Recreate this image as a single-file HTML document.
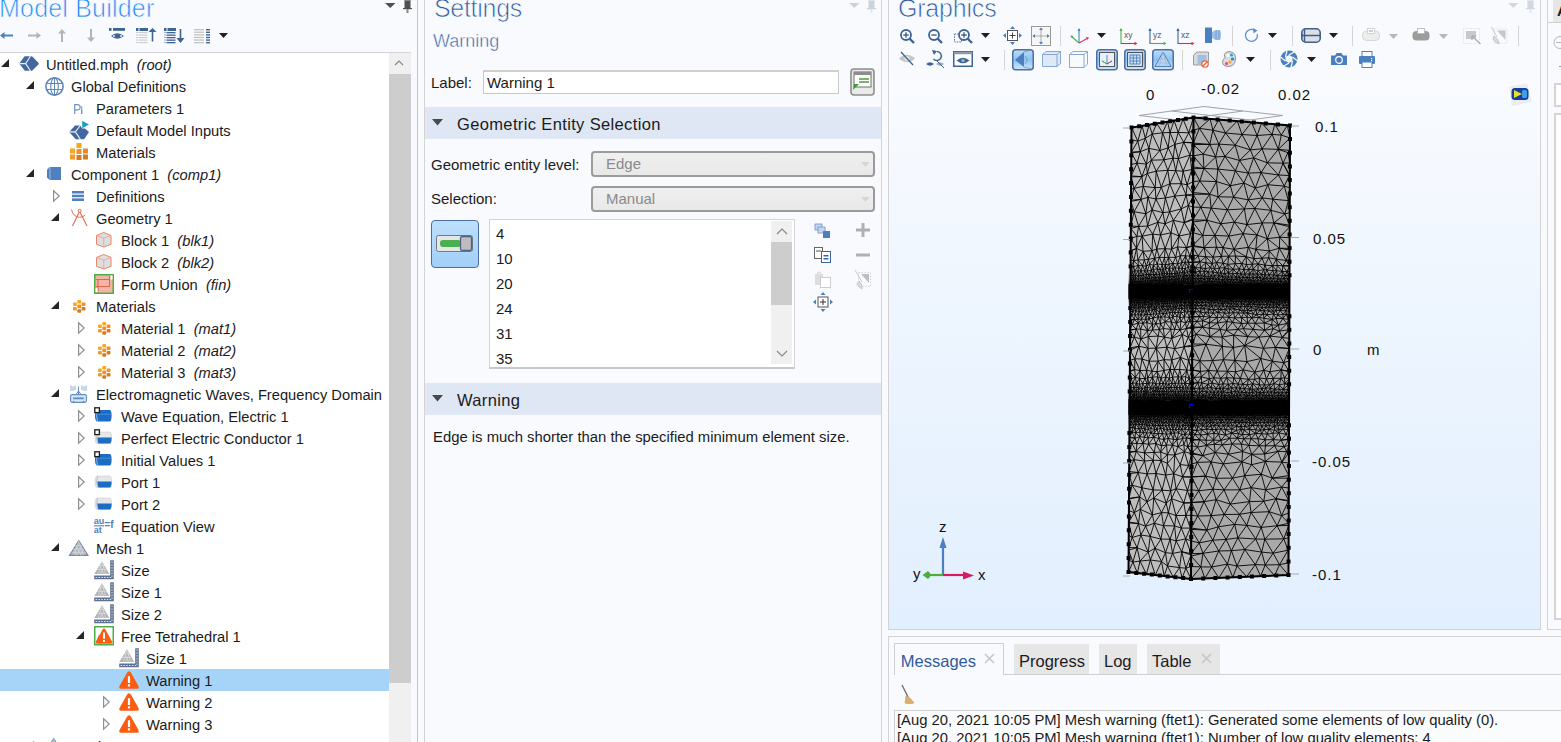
<!DOCTYPE html><html><head><meta charset="utf-8"><style>
*{box-sizing:border-box}
html,body{margin:0;padding:0;width:1561px;height:742px;overflow:hidden;background:#f9fafe;font-family:"Liberation Sans", sans-serif;color:#1b1b1b}
.a{position:absolute}
.ic{position:absolute;overflow:visible}
.t{position:absolute;white-space:nowrap;font-size:15px;line-height:18px}
.it{font-style:italic}
</style></head><body><div class="a" style="left:0;top:0;width:418px;height:742px;background:#f9fafe"></div>
<div class="t" style="left:-1px;top:-5.8px;font-size:25px;line-height:28px;color:#1e8cf5;letter-spacing:0.2px;-webkit-text-stroke:0.7px #f9fafe">Model Builder</div>
<svg class="ic" style="left:0px;top:32px;width:13px;height:7px" viewBox="0 0 13 7"><path d="M0 3.5 L4.5 0 V2.6 H13 V4.4 H4.5 V7 Z" fill="#4a80c0"/></svg><svg class="ic" style="left:28px;top:32px;width:13px;height:7px" viewBox="0 0 13 7"><path d="M13 3.5 L8.5 0 V2.6 H0 V4.4 H8.5 V7 Z" fill="#b4b4b4"/></svg><svg class="ic" style="left:58px;top:29px;width:8px;height:13px" viewBox="0 0 8 13"><path d="M4 0 L8 4.5 H5 V13 H3 V4.5 H0 Z" fill="#b4b4b4"/></svg><svg class="ic" style="left:87px;top:29px;width:8px;height:13px" viewBox="0 0 8 13"><path d="M4 13 L8 8.5 H5 V0 H3 V8.5 H0 Z" fill="#b4b4b4"/></svg><svg class="ic" style="left:109px;top:28px;width:16px;height:12px" viewBox="0 0 16 12"><rect x="0" y="0" width="2.5" height="2.8" fill="#3e6494"/><rect x="4" y="0" width="12" height="2.8" fill="#3e6494"/><path d="M2 8 Q8 2.5 15 8 Q8 13.5 2 8 Z" fill="#3e6494"/><circle cx="5" cy="8" r="0.9" fill="#fff"/><circle cx="12" cy="8" r="0.9" fill="#fff"/></svg><svg class="ic" style="left:136px;top:28px;width:21px;height:15px" viewBox="0 0 21 15"><rect x="0" y="0" width="2.5" height="3" fill="#3e6494"/><rect x="3.5" y="0" width="8.5" height="3" fill="#3e6494"/><rect x="0.5" y="4.0" width="1" height="1" fill="#999"/><rect x="2.5" y="4.0" width="9" height="1.2" fill="#cfcfcf"/><rect x="0.5" y="6.5" width="1" height="1" fill="#999"/><rect x="2.5" y="6.5" width="9" height="1.2" fill="#cfcfcf"/><rect x="0.5" y="9.0" width="1" height="1" fill="#999"/><rect x="2.5" y="9.0" width="9" height="1.2" fill="#cfcfcf"/><rect x="0.5" y="11.5" width="1" height="1" fill="#999"/><rect x="2.5" y="11.5" width="9" height="1.2" fill="#cfcfcf"/><rect x="0.5" y="14.0" width="1" height="1" fill="#999"/><rect x="2.5" y="14.0" width="9" height="1.2" fill="#cfcfcf"/><path d="M16.5 0 L20.5 4 H17.3 V13.5 H15.7 V4 H12.5 Z" fill="#3e6494"/></svg><svg class="ic" style="left:164px;top:28px;width:21px;height:15px" viewBox="0 0 21 15"><rect x="0" y="0" width="2.5" height="3" fill="#3e6494"/><rect x="3.5" y="0" width="8.5" height="3" fill="#3e6494"/><rect x="0.5" y="4.0" width="1" height="1" fill="#3e6494"/><rect x="2.5" y="4.0" width="9" height="1.3" fill="#3e6494"/><rect x="0.5" y="6.5" width="1" height="1" fill="#3e6494"/><rect x="2.5" y="6.5" width="9" height="1.3" fill="#3e6494"/><rect x="0.5" y="9.0" width="1" height="1" fill="#3e6494"/><rect x="2.5" y="9.0" width="9" height="1.3" fill="#3e6494"/><rect x="0.5" y="11.5" width="1" height="1" fill="#3e6494"/><rect x="2.5" y="11.5" width="9" height="1.3" fill="#3e6494"/><rect x="0.5" y="14.0" width="1" height="1" fill="#3e6494"/><rect x="2.5" y="14.0" width="9" height="1.3" fill="#3e6494"/><path d="M16.5 15 L20.5 10 H17.3 V1 H15.7 V10 H12.5 Z" fill="#3e6494"/></svg><svg class="ic" style="left:194px;top:29px;width:17px;height:15px" viewBox="0 0 17 15"><rect x="0" y="0.0" width="10" height="1.3" fill="#c4c4c4"/><rect x="12" y="0.0" width="4" height="1.4" fill="#3e6494"/><rect x="0" y="2.6" width="10" height="1.3" fill="#c4c4c4"/><rect x="12" y="2.6" width="4" height="1.4" fill="#3e6494"/><rect x="0" y="5.2" width="10" height="1.3" fill="#c4c4c4"/><rect x="12" y="5.2" width="4" height="1.4" fill="#3e6494"/><rect x="0" y="7.800000000000001" width="10" height="1.3" fill="#c4c4c4"/><rect x="12" y="7.800000000000001" width="4" height="1.4" fill="#3e6494"/><rect x="0" y="10.4" width="10" height="1.3" fill="#c4c4c4"/><rect x="12" y="10.4" width="4" height="1.4" fill="#3e6494"/><rect x="0" y="13.0" width="10" height="1.3" fill="#c4c4c4"/><rect x="12" y="13.0" width="4" height="1.4" fill="#3e6494"/></svg><svg class="ic" style="left:219px;top:33px;width:9px;height:5px" viewBox="0 0 9 5"><path d="M0 0 H9 L4.5 5 Z" fill="#1f1f1f"/></svg><svg class="ic" style="left:384.5px;top:3px;width:10.5px;height:5px" viewBox="0 0 10.5 5"><path d="M0 0 H10.5 L5.25 5 Z" fill="#505050"/></svg><svg class="ic" style="left:402.5px;top:0px;width:9px;height:13px" viewBox="0 0 9 13"><rect x="1.5" y="0" width="6" height="8.5" fill="#505050"/><rect x="1.5" y="0" width="6" height="1" fill="#8a8a8a"/><rect x="0" y="8" width="9" height="1.2" fill="#505050"/><rect x="3.5" y="9" width="2" height="4" fill="#8a8a8a"/></svg>
<div class="a" style="left:0;top:52px;width:411px;height:700px;background:#fff;border-top:1px solid #d6d6d6"></div>
<div class="a" style="left:389px;top:53px;width:22px;height:689px;background:#f0f0f0"></div>
<div class="a" style="left:389px;top:74px;width:22px;height:609px;background:#cdcdcd"></div>
<svg class="ic" style="left:393px;top:58px;width:12px;height:10px" viewBox="0 0 12 10"><path d="M2 7 L6 3 L10 7" fill="none" stroke="#888" stroke-width="1.2"/></svg>
<div class="a" style="left:417px;top:0;width:1px;height:742px;background:#9fcdf7"></div>
<svg class="ic" style="left:1px;top:59px;width:8px;height:8px" viewBox="0 0 8 8"><path d="M0 8 L8 0 L8 8 Z" fill="#262626"/></svg>
<svg class="ic" style="left:19px;top:55.8px;width:20px;height:15px" viewBox="0 0 20 15"><path d="M0.2 7.6 L5.6 0.3 Q6 0.2 6.5 0.2 L12.6 0.2 Q13.2 0.2 13.6 0.8 L19.6 7 Q19.9 7.6 19.6 8.2 L13.6 14.3 Q13.2 14.8 12.6 14.8 L6.5 14.8 Q6 14.8 5.6 14.5 Z" fill="#43679e"/><path d="M0.3 7.6 H6.6 Q9 4.5 11.6 -0.2 M6.6 7.6 Q9 10.8 11.6 15.2" fill="none" stroke="#eef2f8" stroke-width="1.1"/></svg>
<div class="t" style="left:46px;top:55.8px;font-size:14.7px">Untitled.mph&nbsp;&nbsp;<span class="it">(root)</span></div>
<svg class="ic" style="left:26px;top:81px;width:8px;height:8px" viewBox="0 0 8 8"><path d="M0 8 L8 0 L8 8 Z" fill="#262626"/></svg>
<svg class="ic" style="left:45px;top:76.5px;width:19px;height:19px" viewBox="0 0 19 19"><circle cx="9.5" cy="9.5" r="8.6" fill="#fff" stroke="#5f87ba" stroke-width="1.6"/><ellipse cx="9.5" cy="9.5" rx="3.8" ry="8.6" fill="none" stroke="#5f87ba" stroke-width="1.1"/><path d="M9.5 1 V18 M1.5 6.5 H17.5 M1.5 12.5 H17.5" stroke="#5f87ba" stroke-width="1.1"/></svg>
<div class="t" style="left:71px;top:77.8px;font-size:14.7px">Global Definitions</div>
<svg class="ic" style="left:74px;top:103.5px;width:9px;height:10px" viewBox="0 0 9 10"><path d="M0.7 10 V0.7 H3.6 Q6.2 0.7 6.2 3.2 Q6.2 5.8 3.6 5.8 H0.7" fill="none" stroke="#6f93c6" stroke-width="1.2"/><rect x="7" y="4.5" width="1.4" height="5.5" fill="#6f93c6"/><rect x="7" y="2.5" width="1.4" height="1.3" fill="#6f93c6"/></svg>
<div class="t" style="left:96px;top:99.8px;font-size:14.7px">Parameters 1</div>
<svg class="ic" style="left:69px;top:120px;width:20px;height:20px" viewBox="0 0 20 20"><path d="M0.2 11.9 L6 5.6 L11.2 5.6 L13.2 8.6 L16 8.6 L20 11.9 L15.1 19.3 L6.7 19.3 Z" fill="#43679e"/><path d="M0.3 11.9 H6.3 Q8.7 9 11.5 5 M6.3 11.9 Q8.7 15 11.5 19.6" fill="none" stroke="#eef2f8" stroke-width="1.1"/><path d="M13.2 0.8 L20 4.5 L13.2 8.2 Z" fill="#17a2c4"/></svg>
<div class="t" style="left:96px;top:121.8px;font-size:14.7px">Default Model Inputs</div>
<svg class="ic" style="left:70px;top:143px;width:18px;height:17px" viewBox="0 0 18 17"><rect x="6.5" y="0" width="5" height="5" fill="#f7a51a"/><rect x="0" y="5.5" width="5" height="5" fill="#f8a825"/><rect x="6.5" y="6" width="5" height="5" fill="#f19126"/><rect x="13" y="5.5" width="5" height="5" fill="#e98a23"/><rect x="0" y="11.5" width="5" height="5" fill="#f29a2a"/><rect x="6.5" y="12" width="5" height="5" fill="#d87a22"/><rect x="13" y="11.5" width="5" height="5" fill="#d27c25"/></svg>
<div class="t" style="left:96px;top:143.8px;font-size:14.7px">Materials</div>
<svg class="ic" style="left:26px;top:169px;width:8px;height:8px" viewBox="0 0 8 8"><path d="M0 8 L8 0 L8 8 Z" fill="#262626"/></svg>
<svg class="ic" style="left:47px;top:167px;width:14px;height:13px" viewBox="0 0 14 13"><path d="M0 2.5 L2.5 0 L14 0 L14 13 L2.5 13 L0 10.5 Z" fill="#4f80c0"/><path d="M3 0.3 V13" stroke="#a7c0e0" stroke-width="0.9"/><path d="M0 2.5 L3 0.3" stroke="#a7c0e0" stroke-width="0.6"/></svg>
<div class="t" style="left:71px;top:165.8px;font-size:14.7px">Component 1&nbsp;&nbsp;<span class="it">(comp1)</span></div>
<svg class="ic" style="left:52.5px;top:190px;width:7px;height:12px" viewBox="0 0 7 12"><path d="M0.6 0.8 L6.2 6 L0.6 11.2 Z" fill="none" stroke="#8f8f8f" stroke-width="1.2" stroke-linejoin="miter"/></svg>
<svg class="ic" style="left:72px;top:191px;width:12px;height:10px" viewBox="0 0 12 10"><rect x="0" y="0" width="12" height="2.5" fill="#4f80c0"/><rect x="0" y="3.7" width="12" height="2.5" fill="#4f80c0"/><rect x="0" y="7.4" width="12" height="2.6" fill="#4f80c0"/></svg>
<div class="t" style="left:96px;top:187.8px;font-size:14.7px">Definitions</div>
<svg class="ic" style="left:51px;top:213px;width:8px;height:8px" viewBox="0 0 8 8"><path d="M0 8 L8 0 L8 8 Z" fill="#262626"/></svg>
<svg class="ic" style="left:70.5px;top:209px;width:17px;height:17.5px" viewBox="0 0 17 17.5"><path d="M1.5 17 L8.6 2.2 L16 17" fill="none" stroke="#e4694d" stroke-width="1.1"/><circle cx="8.6" cy="1.8" r="1.5" fill="#fff" stroke="#e4694d" stroke-width="1"/><path d="M0.5 0.5 Q2 8 8.6 8.3 Q12.5 8.3 14 6" fill="none" stroke="#e4694d" stroke-width="1"/></svg>
<div class="t" style="left:96px;top:209.8px;font-size:14.7px">Geometry 1</div>
<svg class="ic" style="left:95.5px;top:232px;width:15.5px;height:15.5px" viewBox="0 0 15.5 15.5"><path d="M7.75 0.5 L15 3.4 L15 12.3 L7.75 15 L0.5 12.3 L0.5 3.4 Z" fill="#dddedf" stroke="#e8846b" stroke-width="1"/><path d="M0.5 3.4 L7.75 6.2 L15 3.4 M7.75 6.2 V15" fill="none" stroke="#eba18e" stroke-width="0.8"/></svg>
<div class="t" style="left:121px;top:231.8px;font-size:14.7px">Block 1&nbsp;&nbsp;<span class="it">(blk1)</span></div>
<svg class="ic" style="left:95.5px;top:254px;width:15.5px;height:15.5px" viewBox="0 0 15.5 15.5"><path d="M7.75 0.5 L15 3.4 L15 12.3 L7.75 15 L0.5 12.3 L0.5 3.4 Z" fill="#dddedf" stroke="#e8846b" stroke-width="1"/><path d="M0.5 3.4 L7.75 6.2 L15 3.4 M7.75 6.2 V15" fill="none" stroke="#eba18e" stroke-width="0.8"/></svg>
<div class="t" style="left:121px;top:253.8px;font-size:14.7px">Block 2&nbsp;&nbsp;<span class="it">(blk2)</span></div>
<svg class="ic" style="left:94px;top:274px;width:20px;height:20px" viewBox="0 0 20 20"><rect x="0.75" y="0.75" width="18.5" height="18.5" fill="#f2b4a4" stroke="#4fae45" stroke-width="1.5"/><path d="M2 5.5 H15.5 V12.5 H2" fill="none" stroke="#e2644a" stroke-width="1.1"/><path d="M4 5 V17.5 M15.5 2 V6" fill="none" stroke="#e2644a" stroke-width="1.1"/><rect x="16.5" y="1.5" width="2" height="4" fill="#fff"/><rect x="1.5" y="14" width="2" height="4" fill="#fff"/></svg>
<div class="t" style="left:121px;top:275.8px;font-size:14.7px">Form Union&nbsp;&nbsp;<span class="it">(fin)</span></div>
<svg class="ic" style="left:51px;top:301px;width:8px;height:8px" viewBox="0 0 8 8"><path d="M0 8 L8 0 L8 8 Z" fill="#262626"/></svg>
<svg class="ic" style="left:72.8px;top:299.5px;width:12.5px;height:13px" viewBox="0 0 12.5 13"><rect x="4.3" y="0" width="3.9" height="3.6" rx="1" fill="#f9a81e"/><rect x="0" y="2.5" width="3.9" height="3.6" rx="1" fill="#f8a825"/><rect x="8.6" y="2.5" width="3.9" height="3.6" rx="1" fill="#f09025"/><rect x="4.3" y="4.6" width="3.9" height="3.6" rx="1" fill="#f19126"/><rect x="0" y="7" width="3.9" height="3.6" rx="1" fill="#f29a2a"/><rect x="8.6" y="7" width="3.9" height="3.6" rx="1" fill="#d87a22"/><rect x="4.3" y="9.2" width="3.9" height="3.6" rx="1" fill="#d27c25"/></svg>
<div class="t" style="left:96px;top:297.8px;font-size:14.7px">Materials</div>
<svg class="ic" style="left:77.5px;top:322px;width:7px;height:12px" viewBox="0 0 7 12"><path d="M0.6 0.8 L6.2 6 L0.6 11.2 Z" fill="none" stroke="#8f8f8f" stroke-width="1.2" stroke-linejoin="miter"/></svg>
<svg class="ic" style="left:97.8px;top:321.5px;width:12.5px;height:13px" viewBox="0 0 12.5 13"><rect x="4.3" y="0" width="3.9" height="3.6" rx="1" fill="#f9a81e"/><rect x="0" y="2.5" width="3.9" height="3.6" rx="1" fill="#f8a825"/><rect x="8.6" y="2.5" width="3.9" height="3.6" rx="1" fill="#f09025"/><rect x="4.3" y="4.6" width="3.9" height="3.6" rx="1" fill="#f19126"/><rect x="0" y="7" width="3.9" height="3.6" rx="1" fill="#f29a2a"/><rect x="8.6" y="7" width="3.9" height="3.6" rx="1" fill="#d87a22"/><rect x="4.3" y="9.2" width="3.9" height="3.6" rx="1" fill="#d27c25"/></svg>
<div class="t" style="left:121px;top:319.8px;font-size:14.7px">Material 1&nbsp;&nbsp;<span class="it">(mat1)</span></div>
<svg class="ic" style="left:77.5px;top:344px;width:7px;height:12px" viewBox="0 0 7 12"><path d="M0.6 0.8 L6.2 6 L0.6 11.2 Z" fill="none" stroke="#8f8f8f" stroke-width="1.2" stroke-linejoin="miter"/></svg>
<svg class="ic" style="left:97.8px;top:343.5px;width:12.5px;height:13px" viewBox="0 0 12.5 13"><rect x="4.3" y="0" width="3.9" height="3.6" rx="1" fill="#f9a81e"/><rect x="0" y="2.5" width="3.9" height="3.6" rx="1" fill="#f8a825"/><rect x="8.6" y="2.5" width="3.9" height="3.6" rx="1" fill="#f09025"/><rect x="4.3" y="4.6" width="3.9" height="3.6" rx="1" fill="#f19126"/><rect x="0" y="7" width="3.9" height="3.6" rx="1" fill="#f29a2a"/><rect x="8.6" y="7" width="3.9" height="3.6" rx="1" fill="#d87a22"/><rect x="4.3" y="9.2" width="3.9" height="3.6" rx="1" fill="#d27c25"/></svg>
<div class="t" style="left:121px;top:341.8px;font-size:14.7px">Material 2&nbsp;&nbsp;<span class="it">(mat2)</span></div>
<svg class="ic" style="left:77.5px;top:366px;width:7px;height:12px" viewBox="0 0 7 12"><path d="M0.6 0.8 L6.2 6 L0.6 11.2 Z" fill="none" stroke="#8f8f8f" stroke-width="1.2" stroke-linejoin="miter"/></svg>
<svg class="ic" style="left:97.8px;top:365.5px;width:12.5px;height:13px" viewBox="0 0 12.5 13"><rect x="4.3" y="0" width="3.9" height="3.6" rx="1" fill="#f9a81e"/><rect x="0" y="2.5" width="3.9" height="3.6" rx="1" fill="#f8a825"/><rect x="8.6" y="2.5" width="3.9" height="3.6" rx="1" fill="#f09025"/><rect x="4.3" y="4.6" width="3.9" height="3.6" rx="1" fill="#f19126"/><rect x="0" y="7" width="3.9" height="3.6" rx="1" fill="#f29a2a"/><rect x="8.6" y="7" width="3.9" height="3.6" rx="1" fill="#d87a22"/><rect x="4.3" y="9.2" width="3.9" height="3.6" rx="1" fill="#d27c25"/></svg>
<div class="t" style="left:121px;top:363.8px;font-size:14.7px">Material 3&nbsp;&nbsp;<span class="it">(mat3)</span></div>
<svg class="ic" style="left:51px;top:389px;width:8px;height:8px" viewBox="0 0 8 8"><path d="M0 8 L8 0 L8 8 Z" fill="#262626"/></svg>
<svg class="ic" style="left:70.3px;top:384.7px;width:17px;height:18px" viewBox="0 0 17 18"><rect x="0.6" y="9.6" width="15.8" height="7.8" rx="1.6" fill="#dbe7f5" stroke="#5f8dc8" stroke-width="1.1"/><rect x="3.2" y="12.4" width="10.6" height="1.9" fill="#5f8dc8"/><circle cx="3.6" cy="16.6" r="0.8" fill="#5f8dc8"/><circle cx="13.4" cy="16.6" r="0.8" fill="#5f8dc8"/><path d="M8.5 9.6 V1.5 M6 9.6 L8.5 6 L11 9.6" fill="none" stroke="#5f8dc8" stroke-width="1"/><path d="M1 6 V0.5 M3 6 V1.5 M5 5 V0.5 M12 5 V0.5 M14 6 V1.5 M16 6 V0.5" stroke="#7ea4d6" stroke-width="0.9"/></svg>
<div class="t" style="left:96px;top:385.8px;font-size:14.7px">Electromagnetic Waves, Frequency Domain</div>
<svg class="ic" style="left:77.5px;top:410px;width:7px;height:12px" viewBox="0 0 7 12"><path d="M0.6 0.8 L6.2 6 L0.6 11.2 Z" fill="none" stroke="#8f8f8f" stroke-width="1.2" stroke-linejoin="miter"/></svg>
<svg class="ic" style="left:94.4px;top:407px;width:18px;height:15px" viewBox="0 0 18 15"><path d="M3.5 3 H15.5 Q17.6 3 17.6 8.8 Q17.6 14.6 15.5 14.6 H3.5 Q1 14.6 1 8.8 Q1 3 3.5 3 Z" fill="#1a6cc4"/><path d="M4 7.2 H17.3" stroke="#4f8fd6" stroke-width="0.9"/><path d="M3.6 3.3 Q1.6 8.8 3.6 14.4" fill="none" stroke="#9dc0ea" stroke-width="0.9"/><rect x="0.8" y="0.8" width="4.6" height="4.8" fill="#fff" stroke="#1a1a1a" stroke-width="1.3"/></svg>
<div class="t" style="left:121px;top:407.8px;font-size:14.7px">Wave Equation, Electric 1</div>
<svg class="ic" style="left:77.5px;top:432px;width:7px;height:12px" viewBox="0 0 7 12"><path d="M0.6 0.8 L6.2 6 L0.6 11.2 Z" fill="none" stroke="#8f8f8f" stroke-width="1.2" stroke-linejoin="miter"/></svg>
<svg class="ic" style="left:94.4px;top:429px;width:18px;height:15px" viewBox="0 0 18 15"><path d="M3.5 3 H15.5 Q17.6 3 17.6 8.8 Q17.6 14.6 15.5 14.6 H3.5 Q1 14.6 1 8.8 Q1 3 3.5 3 Z" fill="#e4e6e9" stroke="#c9ccd0" stroke-width="0.6"/><path d="M3.3 8.6 H17.6 Q17.6 14.6 15.5 14.6 H4.5 Q3.3 12 3.3 8.6 Z" fill="#1a6cc4"/><path d="M3.6 3.3 Q1.6 8.8 3.6 14.4" fill="none" stroke="#b5b8bc" stroke-width="0.8"/><rect x="0.8" y="0.8" width="4.6" height="4.8" fill="#fff" stroke="#1a1a1a" stroke-width="1.3"/></svg>
<div class="t" style="left:121px;top:429.8px;font-size:14.7px">Perfect Electric Conductor 1</div>
<svg class="ic" style="left:77.5px;top:454px;width:7px;height:12px" viewBox="0 0 7 12"><path d="M0.6 0.8 L6.2 6 L0.6 11.2 Z" fill="none" stroke="#8f8f8f" stroke-width="1.2" stroke-linejoin="miter"/></svg>
<svg class="ic" style="left:94.4px;top:451px;width:18px;height:15px" viewBox="0 0 18 15"><path d="M3.5 3 H15.5 Q17.6 3 17.6 8.8 Q17.6 14.6 15.5 14.6 H3.5 Q1 14.6 1 8.8 Q1 3 3.5 3 Z" fill="#1a6cc4"/><path d="M4 7.2 H17.3" stroke="#4f8fd6" stroke-width="0.9"/><path d="M3.6 3.3 Q1.6 8.8 3.6 14.4" fill="none" stroke="#9dc0ea" stroke-width="0.9"/><rect x="0.8" y="0.8" width="4.6" height="4.8" fill="#fff" stroke="#1a1a1a" stroke-width="1.3"/></svg>
<div class="t" style="left:121px;top:451.8px;font-size:14.7px">Initial Values 1</div>
<svg class="ic" style="left:77.5px;top:476px;width:7px;height:12px" viewBox="0 0 7 12"><path d="M0.6 0.8 L6.2 6 L0.6 11.2 Z" fill="none" stroke="#8f8f8f" stroke-width="1.2" stroke-linejoin="miter"/></svg>
<svg class="ic" style="left:94.4px;top:473px;width:18px;height:15px" viewBox="0 0 18 15"><path d="M3.5 3 H15.5 Q17.6 3 17.6 8.8 Q17.6 14.6 15.5 14.6 H3.5 Q1 14.6 1 8.8 Q1 3 3.5 3 Z" fill="#e4e6e9" stroke="#c9ccd0" stroke-width="0.6"/><path d="M3.3 8.6 H17.6 Q17.6 14.6 15.5 14.6 H4.5 Q3.3 12 3.3 8.6 Z" fill="#1a6cc4"/><path d="M3.6 3.3 Q1.6 8.8 3.6 14.4" fill="none" stroke="#b5b8bc" stroke-width="0.8"/></svg>
<div class="t" style="left:121px;top:473.8px;font-size:14.7px">Port 1</div>
<svg class="ic" style="left:77.5px;top:498px;width:7px;height:12px" viewBox="0 0 7 12"><path d="M0.6 0.8 L6.2 6 L0.6 11.2 Z" fill="none" stroke="#8f8f8f" stroke-width="1.2" stroke-linejoin="miter"/></svg>
<svg class="ic" style="left:94.4px;top:495px;width:18px;height:15px" viewBox="0 0 18 15"><path d="M3.5 3 H15.5 Q17.6 3 17.6 8.8 Q17.6 14.6 15.5 14.6 H3.5 Q1 14.6 1 8.8 Q1 3 3.5 3 Z" fill="#e4e6e9" stroke="#c9ccd0" stroke-width="0.6"/><path d="M3.3 8.6 H17.6 Q17.6 14.6 15.5 14.6 H4.5 Q3.3 12 3.3 8.6 Z" fill="#1a6cc4"/><path d="M3.6 3.3 Q1.6 8.8 3.6 14.4" fill="none" stroke="#b5b8bc" stroke-width="0.8"/></svg>
<div class="t" style="left:121px;top:495.8px;font-size:14.7px">Port 2</div>
<svg class="ic" style="left:94px;top:516.5px;width:20px;height:16px" viewBox="0 0 20 16"><text x="-0.3" y="7.3" font-family="Liberation Sans" font-weight="bold" font-size="9" fill="#4f7fbf">au</text><rect x="0" y="8.3" width="10" height="1.1" fill="#4f7fbf"/><text x="-0.3" y="16" font-family="Liberation Sans" font-weight="bold" font-size="9" fill="#4f7fbf">at</text><text x="10.3" y="11" font-family="Liberation Sans" font-weight="bold" font-size="10" fill="#4f7fbf">=f</text></svg>
<div class="t" style="left:121px;top:517.8px;font-size:14.7px">Equation View</div>
<svg class="ic" style="left:51px;top:543px;width:8px;height:8px" viewBox="0 0 8 8"><path d="M0 8 L8 0 L8 8 Z" fill="#262626"/></svg>
<svg class="ic" style="left:69.4px;top:539.7px;width:19.5px;height:16px" viewBox="0 0 19.5 16"><path d="M9.75 0.6 L19 15.4 L0.5 15.4 Z" fill="#b5b8bc" stroke="#6f88aa" stroke-width="1.1"/><path d="M6.7 5.5 H12.8 M4.6 9 H14.9 M2.5 12.3 H17 M9.75 0.6 L5 15.4 M9.75 0.6 L14.5 15.4 M6.7 5.5 L12 15.4 M12.8 5.5 L7.5 15.4 M4.6 9 L8 15.4 M14.9 9 L11.5 15.4" fill="none" stroke="#e7e8ea" stroke-width="0.45"/></svg>
<div class="t" style="left:96px;top:539.8px;font-size:14.7px">Mesh 1</div>
<svg class="ic" style="left:93.8px;top:560px;width:20px;height:19.5px" viewBox="0 0 20 19.5"><path d="M8 1.2 L15.3 14 L0.3 14 Z" fill="#b3b5b8"/><path d="M5.6 5.5 H10.4 M3.6 9.5 H12.4 M8 1.2 L4.3 14 M8 1.2 L11.7 14 M5.6 5.5 L9.6 14 M10.4 5.5 L6.4 14" fill="none" stroke="#e6e6e6" stroke-width="0.55"/><path d="M16.2 0.3 H19.8 V19.3 H0.2 V15.5 H16.2 Z" fill="#5d7190"/><path d="M18 1.5 V17.5 H1.5" fill="none" stroke="#e8ecf2" stroke-width="0.9" stroke-dasharray="1.6 1.2"/></svg>
<div class="t" style="left:121px;top:561.8px;font-size:14.7px">Size</div>
<svg class="ic" style="left:93.8px;top:582px;width:20px;height:19.5px" viewBox="0 0 20 19.5"><path d="M8 1.2 L15.3 14 L0.3 14 Z" fill="#b3b5b8"/><path d="M5.6 5.5 H10.4 M3.6 9.5 H12.4 M8 1.2 L4.3 14 M8 1.2 L11.7 14 M5.6 5.5 L9.6 14 M10.4 5.5 L6.4 14" fill="none" stroke="#e6e6e6" stroke-width="0.55"/><path d="M16.2 0.3 H19.8 V19.3 H0.2 V15.5 H16.2 Z" fill="#5d7190"/><path d="M18 1.5 V17.5 H1.5" fill="none" stroke="#e8ecf2" stroke-width="0.9" stroke-dasharray="1.6 1.2"/></svg>
<div class="t" style="left:121px;top:583.8px;font-size:14.7px">Size 1</div>
<svg class="ic" style="left:93.8px;top:604px;width:20px;height:19.5px" viewBox="0 0 20 19.5"><path d="M8 1.2 L15.3 14 L0.3 14 Z" fill="#b3b5b8"/><path d="M5.6 5.5 H10.4 M3.6 9.5 H12.4 M8 1.2 L4.3 14 M8 1.2 L11.7 14 M5.6 5.5 L9.6 14 M10.4 5.5 L6.4 14" fill="none" stroke="#e6e6e6" stroke-width="0.55"/><path d="M16.2 0.3 H19.8 V19.3 H0.2 V15.5 H16.2 Z" fill="#5d7190"/><path d="M18 1.5 V17.5 H1.5" fill="none" stroke="#e8ecf2" stroke-width="0.9" stroke-dasharray="1.6 1.2"/></svg>
<div class="t" style="left:121px;top:605.8px;font-size:14.7px">Size 2</div>
<svg class="ic" style="left:76px;top:631px;width:8px;height:8px" viewBox="0 0 8 8"><path d="M0 8 L8 0 L8 8 Z" fill="#262626"/></svg>
<svg class="ic" style="left:94px;top:626px;width:20px;height:19.5px" viewBox="0 0 20 19.5"><rect x="0.75" y="0.75" width="18.5" height="18" fill="#fff" stroke="#4fae45" stroke-width="1.5"/><path d="M2 16 L5 8 L7 17 Z" fill="#9aa0a8"/><path d="M10 2.6 Q11 2.6 11.6 3.8 L18.3 16 Q18.6 17.8 17 17.8 L3 17.8 Q1.4 17.8 1.8 16 L8.4 3.8 Q9 2.6 10 2.6 Z" fill="#fd5b0f"/><rect x="9" y="6.5" width="2" height="6.3" fill="#fff"/><rect x="9" y="14" width="2" height="2" fill="#fff"/></svg>
<div class="t" style="left:121px;top:627.8px;font-size:14.7px">Free Tetrahedral 1</div>
<svg class="ic" style="left:118.8px;top:648px;width:20px;height:19.5px" viewBox="0 0 20 19.5"><path d="M8 1.2 L15.3 14 L0.3 14 Z" fill="#b3b5b8"/><path d="M5.6 5.5 H10.4 M3.6 9.5 H12.4 M8 1.2 L4.3 14 M8 1.2 L11.7 14 M5.6 5.5 L9.6 14 M10.4 5.5 L6.4 14" fill="none" stroke="#e6e6e6" stroke-width="0.55"/><path d="M16.2 0.3 H19.8 V19.3 H0.2 V15.5 H16.2 Z" fill="#5d7190"/><path d="M18 1.5 V17.5 H1.5" fill="none" stroke="#e8ecf2" stroke-width="0.9" stroke-dasharray="1.6 1.2"/></svg>
<div class="t" style="left:146px;top:649.8px;font-size:14.7px">Size 1</div>
<div class="a" style="left:0;top:669px;width:389px;height:22px;background:#a6d3f8"></div>
<svg class="ic" style="left:119px;top:671px;width:20px;height:18px" viewBox="0 0 20 18"><path d="M10 0.3 Q11.2 0.3 12 1.8 L19.6 15.3 Q20.3 17.8 18 17.8 L2 17.8 Q-0.3 17.8 0.4 15.3 L8 1.8 Q8.8 0.3 10 0.3 Z" fill="#fd5b0f"/><rect x="8.9" y="5.2" width="2.2" height="6.8" fill="#fff"/><rect x="8.9" y="13.3" width="2.2" height="2.2" fill="#fff"/></svg>
<div class="t" style="left:146px;top:671.8px;font-size:14.7px">Warning 1</div>
<svg class="ic" style="left:102.5px;top:696px;width:7px;height:12px" viewBox="0 0 7 12"><path d="M0.6 0.8 L6.2 6 L0.6 11.2 Z" fill="none" stroke="#8f8f8f" stroke-width="1.2" stroke-linejoin="miter"/></svg>
<svg class="ic" style="left:119px;top:693px;width:20px;height:18px" viewBox="0 0 20 18"><path d="M10 0.3 Q11.2 0.3 12 1.8 L19.6 15.3 Q20.3 17.8 18 17.8 L2 17.8 Q-0.3 17.8 0.4 15.3 L8 1.8 Q8.8 0.3 10 0.3 Z" fill="#fd5b0f"/><rect x="8.9" y="5.2" width="2.2" height="6.8" fill="#fff"/><rect x="8.9" y="13.3" width="2.2" height="2.2" fill="#fff"/></svg>
<div class="t" style="left:146px;top:693.8px;font-size:14.7px">Warning 2</div>
<svg class="ic" style="left:102.5px;top:718px;width:7px;height:12px" viewBox="0 0 7 12"><path d="M0.6 0.8 L6.2 6 L0.6 11.2 Z" fill="none" stroke="#8f8f8f" stroke-width="1.2" stroke-linejoin="miter"/></svg>
<svg class="ic" style="left:119px;top:715px;width:20px;height:18px" viewBox="0 0 20 18"><path d="M10 0.3 Q11.2 0.3 12 1.8 L19.6 15.3 Q20.3 17.8 18 17.8 L2 17.8 Q-0.3 17.8 0.4 15.3 L8 1.8 Q8.8 0.3 10 0.3 Z" fill="#fd5b0f"/><rect x="8.9" y="5.2" width="2.2" height="6.8" fill="#fff"/><rect x="8.9" y="13.3" width="2.2" height="2.2" fill="#fff"/></svg>
<div class="t" style="left:146px;top:715.8px;font-size:14.7px">Warning 3</div>
<svg class="ic" style="left:26px;top:741px;width:8px;height:8px" viewBox="0 0 8 8"><path d="M0 8 L8 0 L8 8 Z" fill="#262626"/></svg>
<svg class="ic" style="left:44.4px;top:737.7px;width:19.5px;height:16px" viewBox="0 0 19.5 16"><path d="M9.75 0.6 L19 15.4 L0.5 15.4 Z" fill="#b5b8bc" stroke="#6f88aa" stroke-width="1.1"/><path d="M6.7 5.5 H12.8 M4.6 9 H14.9 M2.5 12.3 H17 M9.75 0.6 L5 15.4 M9.75 0.6 L14.5 15.4 M6.7 5.5 L12 15.4 M12.8 5.5 L7.5 15.4 M4.6 9 L8 15.4 M14.9 9 L11.5 15.4" fill="none" stroke="#e7e8ea" stroke-width="0.45"/></svg>
<div class="t" style="left:71px;top:737.8px;font-size:14.7px">Study 1</div>
<div class="a" style="left:424px;top:0;width:458px;height:742px;background:#f9fafe;border-left:1px solid #d4d4d4;border-right:1px solid #d4d4d4"></div>
<svg class="ic" style="left:849.4px;top:3px;width:10.5px;height:5px" viewBox="0 0 10.5 5"><path d="M0 0 H10.5 L5.25 5 Z" fill="#ccd2dc"/></svg><svg class="ic" style="left:867.4px;top:0px;width:9px;height:13px" viewBox="0 0 9 13"><rect x="1.5" y="0" width="6" height="8.5" fill="#ccd2dc"/><rect x="1.5" y="0" width="6" height="1" fill="#e2e6ec"/><rect x="0" y="8" width="9" height="1.2" fill="#ccd2dc"/><rect x="3.5" y="9" width="2" height="4" fill="#e2e6ec"/></svg>
<div class="t" style="left:434px;top:-6.3px;font-size:25px;line-height:28px;color:#2d5a9e;letter-spacing:-0.3px;-webkit-text-stroke:0.7px #f9fafe">Settings</div>
<div class="t" style="left:433px;top:29.8px;font-size:18px;line-height:22px;color:#2d5a9e;-webkit-text-stroke:0.5px #f9fafe">Warning</div>
<div class="t" style="left:431px;top:74px">Label:</div>
<div class="a" style="left:483px;top:70px;width:356px;height:24px;background:#fff;border:1px solid #c9c9c9;border-top:2px solid #cfcfcf"></div>
<div class="t" style="left:487px;top:74px">Warning 1</div>
<svg class="ic" style="left:850px;top:68px;width:25px;height:28px" viewBox="0 0 25 28"><rect x="1" y="1" width="23" height="26" rx="3" fill="#eaeaea" stroke="#8d8d8d" stroke-width="1.6"/><rect x="4" y="4" width="17" height="15" fill="#fff" stroke="#6f6f6f" stroke-width="1"/><rect x="4" y="4" width="17" height="3" fill="#8d8d8d"/><path d="M9 11 H19 M9 14 H19" stroke="#4aa03c" stroke-width="1.3"/><path d="M3 22 L4 16 L9 16 Z" fill="#3d9a3a"/></svg>
<div class="a" style="left:425px;top:107px;width:456px;height:32px;background:#dee7f3"></div>
<svg class="ic" style="left:432px;top:119px;width:11px;height:7px" viewBox="0 0 11 7"><path d="M0 0 H11 L5.5 6.5 Z" fill="#4a4a4a"/></svg>
<div class="t" style="left:457px;top:114px;font-size:16.5px;line-height:20px;letter-spacing:0.36px">Geometric Entity Selection</div>
<div class="t" style="left:431px;top:156px">Geometric entity level:</div>
<div class="t" style="left:431px;top:190px">Selection:</div>
<div class="a" style="left:591px;top:151px;width:284px;height:26px;border:2px solid #9b9b9b;border-radius:4px;background:linear-gradient(#f0f0f1,#e8e8e9)"></div>
<div class="t" style="left:606px;top:155px;color:#8a8a8a">Edge</div>
<svg class="ic" style="left:861px;top:162px;width:9px;height:5px" viewBox="0 0 9 5"><path d="M0 0 H9 L4.5 5 Z" fill="#d6d6d6"/></svg>
<div class="a" style="left:591px;top:186px;width:284px;height:26px;border:2px solid #9b9b9b;border-radius:4px;background:linear-gradient(#f0f0f1,#e8e8e9)"></div>
<div class="t" style="left:606px;top:190px;color:#8a8a8a">Manual</div>
<svg class="ic" style="left:861px;top:197px;width:9px;height:5px" viewBox="0 0 9 5"><path d="M0 0 H9 L4.5 5 Z" fill="#d6d6d6"/></svg>
<div class="a" style="left:431px;top:220px;width:48px;height:48px;border:1.5px solid #4a6ea3;border-radius:4px;background:linear-gradient(#bde0fc,#a2cff7)"></div>
<svg class="ic" style="left:436px;top:235px;width:37px;height:17px" viewBox="0 0 37 17"><rect x="0.5" y="0.5" width="36" height="16" rx="2" fill="#e6e6e6" stroke="#6b7a8c" stroke-width="1"/><rect x="4" y="5" width="21" height="7" rx="3" fill="#4caf50"/><rect x="24.5" y="1.5" width="11" height="14" rx="1.5" fill="#bdbdbd" stroke="#4f6385" stroke-width="1.3"/></svg>
<div class="a" style="left:489px;top:219px;width:306px;height:150px;background:#fff;border:1px solid #d4d4d4;border-bottom:2px solid #c8c8c8"></div>
<div class="a" style="left:771px;top:221px;width:21px;height:143px;background:#f0f0f0"></div>
<div class="a" style="left:771px;top:242px;width:21px;height:63px;background:#cdcdcd"></div>
<svg class="ic" style="left:776px;top:227px;width:12px;height:8px" viewBox="0 0 12 8"><path d="M1 7 L6 2 L11 7" fill="none" stroke="#888" stroke-width="1.2"/></svg>
<svg class="ic" style="left:776px;top:350px;width:12px;height:8px" viewBox="0 0 12 8"><path d="M1 1 L6 6 L11 1" fill="none" stroke="#888" stroke-width="1.2"/></svg>
<div class="a" style="left:490px;top:220px;width:281px;height:147px;overflow:hidden">
<div class="t" style="left:6px;top:5px">4</div>
<div class="t" style="left:6px;top:30px">10</div>
<div class="t" style="left:6px;top:55px">20</div>
<div class="t" style="left:6px;top:80px">24</div>
<div class="t" style="left:6px;top:105px">31</div>
<div class="t" style="left:6px;top:130px">35</div>
</div>
<svg class="ic" style="left:814px;top:223px;width:17px;height:16px" viewBox="0 0 17 16"><rect x="1" y="1" width="7" height="6" fill="#c5d5ea" stroke="#6f93c6" stroke-width="0.8"/><rect x="4" y="4" width="7" height="6" fill="#c5d5ea" stroke="#6f93c6" stroke-width="0.8"/><rect x="9" y="8" width="7" height="7" fill="#4a7fc0"/></svg>
<svg class="ic" style="left:814px;top:247px;width:17px;height:16px" viewBox="0 0 17 16"><rect x="0.5" y="0.5" width="8" height="11" fill="#fff" stroke="#666" stroke-width="1"/><rect x="2" y="3" width="5" height="2" fill="#aaa"/><rect x="7.5" y="4.5" width="9" height="11" fill="#fff" stroke="#3a64a4" stroke-width="1"/><rect x="9.5" y="8" width="5" height="1.5" fill="#3a64a4"/><rect x="9.5" y="11" width="5" height="1.5" fill="#3a64a4"/></svg>
<svg class="ic" style="left:814px;top:270px;width:17px;height:18px" viewBox="0 0 17 18"><path d="M1 4 H9 V15 H1 Z" fill="#ddd"/><path d="M3 4 Q5 0 7 4" fill="none" stroke="#ccc"/><rect x="6.5" y="7.5" width="10" height="10" fill="#fff" stroke="#ccc" stroke-width="1"/></svg>
<svg class="ic" style="left:813px;top:292px;width:20px;height:20px" viewBox="0 0 20 20"><rect x="5" y="5" width="10" height="10" fill="#fff" stroke="#555" stroke-width="1"/><path d="M10 7 V13 M7 10 H13" stroke="#333" stroke-width="1"/><path d="M10 0 L12.5 3 H7.5 Z M10 20 L12.5 17 H7.5 Z M0 10 L3 7.5 V12.5 Z M20 10 L17 7.5 V12.5 Z" fill="#4a7fc0"/></svg>
<svg class="ic" style="left:856px;top:223px;width:14px;height:14px" viewBox="0 0 14 14"><path d="M7 0 V14 M0 7 H14" stroke="#b0b0b0" stroke-width="3"/></svg>
<svg class="ic" style="left:856px;top:253px;width:14px;height:4px" viewBox="0 0 14 4"><path d="M0 2 H14" stroke="#b0b0b0" stroke-width="3"/></svg>
<svg class="ic" style="left:854px;top:270px;width:17px;height:19px" viewBox="0 0 17 19"><rect x="4.5" y="2.5" width="12" height="14" fill="none" stroke="#ccc" stroke-dasharray="1.5 1.5" stroke-width="0.8"/><path d="M7 4 H15 V13 Z" fill="#bdbdbd"/><path d="M1 0 L8 12 M5 11 Q9 15 8 19 Q4 17 3 14 Z" fill="#ddd" stroke="#bbb" stroke-width="0.8"/></svg>
<div class="a" style="left:425px;top:383px;width:456px;height:32px;background:#dee7f3"></div>
<svg class="ic" style="left:432px;top:395px;width:11px;height:7px" viewBox="0 0 11 7"><path d="M0 0 H11 L5.5 6.5 Z" fill="#4a4a4a"/></svg>
<div class="t" style="left:457px;top:390px;font-size:16.5px;line-height:20px;letter-spacing:0.36px">Warning</div>
<div class="t" style="left:433px;top:428px;font-size:14.85px">Edge is much shorter than the specified minimum element size.</div>
<div class="t" style="left:898px;top:-6.3px;font-size:25px;line-height:28px;color:#2d5a9e;letter-spacing:-0.2px;-webkit-text-stroke:0.7px #f9fafe">Graphics</div>
<div class="a" style="left:888px;top:78px;width:653px;height:552px;border:1px solid #d2d2d2;border-top:none;background:linear-gradient(#f9fbff 0%,#edf5fe 45%,#e2effe 100%)"></div>
<div class="a" style="left:888px;top:0px;width:1px;height:78px;background:#d2d2d2"></div>
<div class="a" style="left:1540px;top:0px;width:1px;height:78px;background:#d2d2d2"></div>
<svg class="a" style="left:0;top:0;width:1561px;height:742px" viewBox="0 0 1561 742"><path d="M1139 115.5 L1204 106.5 L1282.5 115.5 L1217.5 124.5 Z M1171.5 111 L1250 120 M1243 111 L1178 120" fill="none" stroke="#9a9a9a" stroke-width="0.9"/><path d="M1131.5 127.5 L1193.5 117.5 L1191 579 L1128.5 572 Z" fill="#bdbdbd"/><path d="M1193.5 117.5 L1290 125.5 L1288.5 575 L1191 579 Z" fill="#a9a9a9"/><path d="M1152.3 309.7l1.3 4.1l1.1-4.3l1.7-2.8l-1-2.8l1.5-2.2l1.6 0.4l-1.2 1.9l-0.9 2.7l2.5-2.2l1.7-3.3l1.3 0.1l-0.1-1.9l-2.1-0.2l0.9-1.9l-2.7 0l1.4 0.4l-1.1 1.9l0.3 2.5l0.4 2.4l0.2 2.6l-2.4 2.4l-0.3-2.8l-2.1 0.5l-2.6-0.3l-0.4-2.4l-1.7-2l0.5-2.3l-2.1 1.7l0.9 3.1l-0.8 2.7l-1.9 3.4l-2.9 0l-0.4-4.2l-0.2-1.8l1.6-2.8l-2.2 0.2l1.7-2.2l-0.8-2.4l-1.2 2.4l2 0l0.5 2l0.4 2.6l1.8-0.4l2.4 0.5l0.7-2.5l1.7-0.8l1.7-1.8l2-0.6l-1.5-1.5l-0.5 2.1l-1.5-2.4l-0.2 2.4l0 1.8l1.5 0.6l2.5-0.7l-0.3-2.3l1.3 0.4l-0.1-2.4l1.7 0l-1.6 2.4l-1 1.9l1.6 0.1l1.3-2.1l1.5-0.4l-0.4-1.5l1.3-0.4l1.2 2.1l1.3-0.2l0.5-2.2l2.8-0.4l0.2 2.2l-0.4 2.5l1.3-0.6l-0.1 2.6l2.1-2.6l2 2.3l-1.9 0.6l0.6 2.9l-2.1-0.2l-0.1 3.3l-1.6-3.2l-1-2.7l-1.8-0.2l0.5-1.9l1.3 2.1l-2.1 3.2l-1.6-0.2l0-3.2l0.2-2.2l1.7 2.2l-0.3 3.4l3.1-0.5l1-3.1l-1.2-2l-0.8 2.4l2-0.4l0.7 3l1.5-2.7l-2.2-0.3M1152.3 309.7l-2.3-2.4l-1.1 3.2l-0.8-2.8l1.9-0.4l1.3-2.8l0-2.8l-1.2-1.5l0.4-2.1l-1.8-0.3l-1.4 0.2l0.7 1.6l-1.3 0.7l-1 2.3l-0.4-2.9l-1 2.6l1.4 0.3l-1 2.3l-2 0.2l-2.2 2.3l-0.2-2.7l-1.7 3.5l-2.4-2.7l0.6-3.1l-2.1 0.6l1.5 2.5l-1.7-0.2l-1.8-0.3l-1.8-2.4l-0.6-1.7l0 2.1l0 2l0 0.4l0 2.8l0 3.1l0 0.6l-0.1 3l1.6-0.3l-1.6 4.5l0 1l4.2-0.4l3.4-0.3l0.4 3.6l2.4 6.1l-4.3 0l4.6 9.9l6.6-8.4l4.9-0.6l-4.2 6.6l-0.7-6l-6.9-1.5l2.2-5.8l4.1-0.7l-1-3.3l-1.2-4.5l2.5-0.8l1.7-3.5l1.6 4.2l2.4 3.5l3 5.3l-3.5 6.5l0.1-5.5l-5.6-1.9l2.1-3.7l-3.1 0.4l-4.5-0.2l3.3-4.3l-1.4-3.7l-2.2 4.1l-2.7-0.3l0.5-3.3l-3.2-1l-1.5-2.7l-2.9-0.3l-1-2.2l2.4-0.4l2-2l0.8-2.3l-0.1-1.6l-1.6 1.6l-2.1 0.2l1.1 1.7l-1.9 0l0.8-1.7l-0.5-1.9l-0.9 1.8l0 0.1l1.4 0l0.9-2l1.6-0.4l-0.4 2.2l-1.2-1.8l-1.4 0.1l-0.9 0l0 1.8l1.4 0.1M1152.3 309.7l2.4-0.2l2 0l2.8 3.2l-1.3 4.1l-5.3 1.4l0.7-4.4l-3.1 0.9l-1.5 4.2l3.5 5.6l0.4-6.3l3.7-3.8l1.6 2.4l2.4 7.1l-1.2 5.7l-1.2 6.5l6.2 1.1l-5-7.6l4-1.1l1.8-6.8l-0.3-5l4.9 1.4l1.5 3.9l1.5-5.1l2-4.2l-1.6-3.5l-0.8 3l-1.2-3.6l2.2-2.6l2 0.4l-2.2 2.8l0.2-3.2l-1.9-3l0.3-2.1l-0.3-1.9l1.7-0.3l1.3 0l0.4 2l1.4 2.5l0.9 3.2l1-3.6l1.7 2.5l-0.9 3.1l-0.5 4.1l2.4 0.4l3.4 3.8l5 0.9l1.2-6.3l-0.5-3.4l-1.1-2.7l-2.4 0.7l-2.1 2.5l0.1-2.7l2 0.2l2.2-3.3l-2.7-0.1l-1.5-2.7l1.2-2.1l-1-1.8l-1.5 0.5l-1.6-0.2l0.9 1.8l0.7-1.6l1 2l0.5-2.5l1.4-0.2l1.2 2.2l2.1-0.5l0.7 2.3l0 2.4l2.1-0.3l-1.3 4l-2-0.6l-1.7 2.6l0.3 4.3l-2.8-0.2l-3-3.5l0-3.1l-1.3-2.9l1.4-0.1l-0.1 3l2.7-2.4l-2.3-2.8l2.1-1.7l1.5-0.7l0.4 2.4l2.2 0l1.8-0.4l0.5-2.1l-0.4-2.1l-0.8 1.9l-1.1 2.7l0.4 2.5l1.4-0.5l1.7-2.4l-1.7 0M1152.3 309.7l-0.6-2.8l1-2.7l1.6 3l1.1-3.3l1.9 0.1l1.6 0.5l2.8 2.2l-1.1 3.8l2.3-1.1l0.3 4.7l2.4-4.2l0.7 3.5l-3.1 0.7l-3.7-1.4l-0.4-5.6l1.5 3.4l2.6 3.6l1.7 2.6l-4 0.6l-1.4-4.6l-2.9 1.7l-3-0.6M1152.3 309.7l-1.8 5l-3.3-0.7l-1-2.9l-1-3.4l-1.9 3.4l-1.8-0.2l-0.4 4.3l0.3 3.9l-3.2 3.9l-6.1 2.1l4.2 4l-6.2 1.2l0 7.8l4.2-1.1l2-7.9l1.9-6.1l-3.8-3.3l-2.6-5.1l3.3 0.4l-2.1-3.8l2.7-0.6l-0.6 4.4l3.3-0.1l-0.6 4.5l-2.7-4.4l-0.7 4.7l-4.2-0.6l0-4.2M1152.3 309.7l2-2.5l0.4 2.3l1.9 4.9l0.1-4.9M1152.3 309.7l-3.4 0.8l-2.7 0.6l-1.5 3.7l-3.6 0.4l-3.3 4.2l3.6-0.3l1.4 4.2l3.1-4l1.3-5.3l1.8 4.9l3.9-0.7M1186.1 195l7 1.2l-4.8 9.3l4.7 13.2l-0.1 1.2l-2.5 13.8l2.4 11.8l0 0.8l-2.8 9.9l2.8-1.2l-0.1 6.9l0 0.8l-4.5-0.4l0.1 4.8l-3.2-5l0.4-6.3l2.7 6.5l2.9 4.5l1.6 0.5l0-4.6l-1.6 4.1l1.6 4.2l0 0.6l-0.1 3.6l0 3l-2.2-0.4l2.2 0.4l-1.1-3.2l1.2-3.4l-2.6-0.5l-1.8-4l-0.8 5.2l2.1 3.6l-2.9-0.4l-1.6 3.4l-1.6 2.5l0.1-3l-0.5-2.1l1.3-4.2l2.3 3.4l-2 0.2l-1.1 2.7l-1.8 2.9l0.4 2.2l1.3-2.1l-1.7-0.1l-0.3-2l-1.7 2.7l-0.5 1.6l1.4 0.4l-0.9-2l2-0.7l-1.1 2.7l1.5-0.5l1.6 0.1l1.3-2.4l0.3 2.4l1.7-2.3l1.5 0l-1.6-2.6l0.1 2.6l-0.1 2.5l1.3-0.7l-1.2-1.8l-2-0.1l0-2.3l-1.5-0.5l-2.1 0.9l-1-3.4l-1.5 2.8l-0.6-3.1l-1.2-2.5l-1.1 3.2l1.4 3.1l1.5-0.7l2.5 0.6l1.6-3l1.6-0.6l0.4 3.2l1.9-0.2l-0.3-3.2l0.8-3.2l2.6-1.2l1-4.3l-2.8 0.3l-3 1.5l-2.6 3.5l-0.7-3.8l-2.5 4.8l-1.1 2.5l2.1 0.3l2.2-3.8l-3.2 1l-2.3 0l-2.1-5.3l0 5.7l-3.5 0.1l0.4 3l-2.6-0.5l-0.9 3.3l-2.5 1l-1-3.8l2.1 0.3l-1.1 3.5l-0.9 2.4l1.7-0.5l1.7 0.4l1.3-2.8l0.3 2.6l1.7-0.5l0.2 2.3l1.5-2.7l0.2 2.9l1.2-2.6l1-3l-2.2-2.1l1.4-3.3l1 2.8l-2.4 0.5l-2.1-3.2l-2.1-0.1l-0.1 2.6l2.2-2.5l-2.3-5.5l-0.2-4l-3.5 4.5l1.4 5.2l-2 2.8l-1.9 0.6l-0.3 2.7l-0.9 3.1l1.1 0.1l0.2 1.4l-1.8 0.9l-1.6-0.1l-1.4-0.5l-0.1-1.9l-1.4 2l-1.5 0.7l-0.3-2.1l-0.9 2l1.2 0.1l1.2-2.2l0.5-2.8l1.5-2.7l-2.8-0.4l-0.7 3.2l-1-2.9l-2.4 0.1l2.3-3l-3.2-0.5l0.6-4.2l2.1-4.9l3.7-1.4l3.1 5.9l2-5.2l-2.9-7.3l5.7-8.6l-8.3 0.3l-4.8 1.7l-9 0.6l5.5 8l6.2-1.1l2.5 5.7l5.1 0.7l0.6 5.3l-0.8 3.8l-1.9 4.1l2.6 2.1l1.4 0.6l0.8-3.9l-0.7-3.5l2.7 0.7l2.3-5.7l3.6 0.2l-0.1-5l4.9 0.7l1.2 4.2l3.1 0.1l3.3 0.3l2.2 3.7l-3.1-0.2l0.9-3.5l-0.2-6.5l-3.4 0.4l-1.4-6.8l-4.6 1.7l-2.9 5.9l2.3 4.5l3.8 0.4l-1.7 4.9l-2.1 0.4l-2.2-5.2l2.2-0.5l2.6-3.8l2.6-8.3l-2.6-8.8l1.3-10.9l7.6 11.6l6.2-2.1l0.1-12.8l-2.5 1l-6.1-11.1l-3-13.7l4.8-13.9l-4.8-11.3l1.8-12.5l8.6-1.6l1.5 11.9l-6.1 3.3l6 9.5l0.1-12.8l0-12.8l-1.5 0.9l1.6-13.7l-3.3-0.8l1.7 14.5l-4.6 15.2l-4-13.6l6.9-16.1l3.4-12l-9.7-0.8l9.7 0.3l-4.7-9.8l4.7-2.5l0 12.3l0 0.5l-0.1 12.8l-0.1 12.8M1186.1 195l-11.3 1.1l-9.4 1.9l-4.1-10.6l6.5-17.1l5.3-12.2l-9.2 1.7l-12.5 0.4l4.8 11l-8.9 2.2l-0.9-9.2l2.5-15.8l11 2.1l4 9.3l-7.7 11.4l5.1 16.2l8.5-3.6l5.9-13.1l2.6-12.1l5.4-16.3l-5.5-9.9l-4.1-11.8l-6.6 1.1l2.5 10.8l4.9 11.9l-6.7 3.4l-5.6-15l-5.8-9.4l-7.6 1.2l-3.9 13.7l-3.2-12.5l-4.3 15.4l-6.4-1.4l-0.1 12.3l0 0.8l0 11.6l-0.1 11.4l0 0.9l2.8 11.6l7 11l6.9-2.1l4.2 12.6l-6.2 3.9l2-16.5l8 1.7l9.5-1l4.2 13.9l-6.7 0.7l2.1 11.2l-4.5 11.2l-2.6-12.7l-10.3 3.8l-1.7-12.3l-11.8-2.1l-3.2 2.1l0.1-12.4l10-2l2.2-13l-9.2 2l-3 11.8l0.1-11.1l2.9-0.7l7.9-11.7l4.5-12.5l-6.2-12.5l-2.4-10.5l-6.3-13.7l-0.1 12.3M1186.1 195l2.2 10.5l4.7 1.6l0 11.6l-8.7 3.9l-5.3 13.4l-5.6-15.6l10.9 2.2l8.6-2.7l0 12.8M1186.1 195l1-10.2l-5.8-1.1l-5.6-13l-7.9-0.4l2 13.5l11.5-0.1l-6.5 12.4l-5.2 15.8l-4.6 11.9l-7.1-1.5l-5.8-12.4l10.8 2.7l-7-13.6l5.4-11.6l-6.1 0.3l-7.3 9.6l-4.7-10.9l12 1.3l1-16.5l11.6-0.9l-3.9-10.5l4.3-12l4.9 10.3l1.8-13.7l3.3-12l4.8-13.2l10.5-1.7l-4.8 15.3l-5.7-13.6l-8.9 1.4l-4.1 11.9l-7.4 0.3l4.9-11.1l-10.7 1.7l-4.6 10.7l-3.3 14.3l-3.6-10.1l6.9-4.2l7.7 16.4l8.3-2.7l1.8-15.3l8.2-0.1l10.5 0.4l-5 9.5l6.3 12.8l-11.7 3.5l-3.4-14.2l8.8-2.1M1186.1 195l7-0.7l0 1.9l-0.1 10.9M1191.7 453.8l-4-6.8l-3.8-2.3l-1.3-6.3l-4.6 8.3l-1.1-6.9l5.7-1.4l2.6-4.1l1.3 3.6l-3.9 0.5l-0.9-3.9l-3.1-1.6l-1.7 6.9l4.8-5.3l0.3-5.3l0.8-4.1l0.3-3.2l1.9 1.3l1.4-3l1.5-2.9l-1.4 0.5l-0.2-2.8l-1.5 2.4l0.1-2.1l-0.3-2.4l1.5 0.6l0.2 1.5l-1.4 0.3l-1.9-1.8l-1.2-0.8l-1.7 0.4l-1.5-0.2l0.7 1.7l0.8-1.5l1.4 2l-0.2 2.6l-2.1-0.4l-0.4 2.4l-1.6-2.7l0.9-2.1l-1-2.3l1.5 0.3l-0.5 2l-2-0.3l-0.7 2.4l-2.2 0.2l-1.2 0.3l-2-0.6l-0.2 2.6l2.2-2l1.1-2.8l1.6 0.4l-1.5 2.1l1.3 1.9l-2.3 0.4l1 2.6l1.3-3l2.1 0.1l2.2 0.5l1.6 0.1l2.4 0.5l0.3-3.1l-0.3-2.4l2.1 0.5l-1.8 1.9l1.4 2l-1.4 2.7l-2.7-2.1l-1.2-2.5l0.1-2.7l-1.2 0.3l1.1 2.4l-2-0.3l-1.8 0l1.2 2.2l0.6-2.2l-1.1-2.4l-0.5-1.6l-1.6-0.3l-1.3 0.1l0.4 1.9l0.1 2.5l-1 2.3l-2.4 0l-1.9-2.3l-2-0.4l0.2 2.3l-2.3 0.1l0.3-1.8l1.8-0.6l-1.3-1.9l-0.8-2.4l-1.5 0.1l-1.2-0.2l-2.1 0.2l0.8 2.4l-1 1.7l-0.8-2.3l1.8 0.6l1.8 0.1l-0.6 2.2l-1.7 2.1l0.2 2.5l0.6 3.7l1.7-3.5l1 3.4l0.9-2.9l2.3-0.3l2.8-0.2l-0.9-3.1l1.9 0.5l-1 2.6l0.2 2.6l-3-2.4l-2.2-3.1l-2.4-0.3l1.2-1.9l-1.6 0.3l0.4 1.6l-1.9 3l-2.4 0l-1.9-0.2l-0.2 3.9l3.3-0.2l-1.3 4.1l-3 4.2l-3-1.2l-0.1-4l3.6 0.9l-1.6-4.6l-2.6-2.4l-0.6-2.8l-1.3 2.4l-1.5 3.2l1.4 4.2l-3.5-0.1l-2.8-4.6l1.2-3l-2.5-2.4l-1.7-0.1l-0.7 2.2l-2.6 2.7l3 0.3l0.4 4.1l-3.7 4l4.2 4.2l3.4 6.7l1.4-6.2l3.6 0.9l0.6 6.2l5-7.1l2.2 6.2l-1.6 9l-5.6-8.1l7.2-0.9l5.7 2.5l-0.8 6.1l-6.5 0.4l6.9 8.1l4.6 14.6l5 15.7l-4.5 12.4l-4.1-13l-6.2-16.7l5.2-13l-0.4-8.5l6.7 2.7l0 8.7l-6.3-2.9l-8-0.3l2.8 13.3l-8.8 0.4l-2.5-12.8l-10.6-1.5l2.2-8.1l-6.9 1.1l-0.1 8.8l4.8-1.8l-4.8 11.9l0 2.2l9-1.2l-6.2 12.7l7.7 11.7l-10.7 2l5.4 13.7l4.1 10.9l-9.7-0.5l3.4 14.5l-3.5 10.1l8.4 0.1l-4.2 14.3l-4.3-11.9l0.1-2.5l0-12.3l3.5 2.2l4.9 10.2l11.1 4.4l6.8-3.8l-4.6 11.7l-4 14l8.9 1l-4.9-15l-2.2-7.9l-7.4-17.1l9.4 1.4l10.7 2.7l9.2 0.1l-6.6-13.5l-9.2-2.4l-8.7 3l6.8-11.4l9.1-2.3l-7.2 10.7l-1.9-8.4l1.4-16.9l-0.6-8.1l-6.1-16l-8.9-1.4l-4.2-12.9l-4.7-7l0-1.2l2.4-8.5l-2.3 0.7l0-6.1l0-0.9l5.7 1.7l1.8 5.5l2.7-7.1l0.4-4.4l1.4-4.5l-2.3 0.7l0.9 3.8l3.4-0.1l1 5l-4.8-0.5l3.8-4.5l3.2 1.1l-2.2 3.9M1191.7 453.8l-7.3-2.1l-4.2 12.9l2.4 12.2l9 0.4l-0.1 12.5l-0.1 12.8l-7.6 0.5l2.1 12.4l-4.6 12.7l-5.2 12.8l-1.5-15l6.7 2.2l9 0l0.9 12.8l-0.1 12.8l0 1.3l-9.4-3.3l9.4 2l-5.4-14.8l-4.4-10.8l-5.3-12.5l-7.6-2.8l3.2-14.1l4.4 16.9l-1.4 10.3l-4.5 13.3l2.5 14.2l7 14.2l6.3 0.6l-3.8 9.8l8.9 1l0.1-12.5l-5.2 1.7l5.1 10.8M1191.7 453.8l-0.1 10.3l-3 1.4l-8.4-0.9l-5.4-9.6l9.6-3.3l-6.4-5l-3.2 8.3l-1.1 18.8l8.9 3l9 0.1l0 0.3l-4.2 13.3l-11.3-1.7l-4.5 9.9l-0.9-7.9l-8.6-0.6l3.6-15.1l-9.8-1.6l-2.7 16.4l-11.4-2.1l-2.1 9.1l7.2 5l-6.6 7.4l-5.9 3.3l5.3-15.7l-10.7 1.4l0 0.6l-0.1 11.8l5.5 1.9l-5.6 9.5l9.7 1.4l-6.3 14l8.6-2.5l-3.7 12.7l2.9 13.4l10.4-1.1l11.1 1.5l2.7 14.5l3.3-10l-6-4.5l4-8.8l-4.6-13.6l2.6-13.4l11.1 0.2l-6.2-13.1l-2.2-9.6l-4.7 9.4l2 13.1l4.9-12.9l-6.9-0.2l-7.7-14.6l8.3-7.8l-8.9-0.3l-6.3 12l-5.1-14.1l-9.8-2.6l-2.9 0.8l-0.1 12.3l3-13.1l-2.8-11.5l-0.1 12.3M1191.7 453.8l0-1.7l-4-5.1l4-1.3l0.1-6.4l0-0.6l0-4.6l0-4.4l-0.1 0.1l-1.3-4l-2.3-0.1l1.3-3.3l-0.4-2.3l-1.9 2.7l-0.7-2.6l2.6-0.1l1-2.6l0.5 2.4l-1.1 2.5l-2.3 0.4l-1.7 2.9l-2.6-0.6l-3 1.3l-0.9 3.1l-3.2 0.2l-1.4-4.9l-1.4 4.9l-1.9 3.7l-4.4 1l-2.8 5.2l-5.1-1.1l-5.1-1.3l4.9-3.6l0.2 4.9l2.8 7.4l5-0.9l-2.7-5.4l4.4-1.3l-1.6-3.9l-4.1-0.9l-1.9-5.4l-0.5-2.5l2.7-0.1l0.9 3.3l-3.1-0.7l-2.3-2.7l-1.2-3.5l-2.1 3.7l2 3.9l-2.5-0.1l-3.5 3.1l-2.7-3.1l1-3.7l1-3.3l0.6-3.4l-1.2-1.8l0 2.4l-2.9-0.1l-1 2.8l1.1 2.9l-2.1-0.4l1-2.5l-1-3.3l-0.4-2.3l-1.2-2.2l2.2 0l-1 2.2l1.6-0.5l-0.6-1.7l1.2 0.2l2.1 0.1l1.4 0.1l1.8-0.7l-1.8-1.2l-1.4-0.2l0 2l-0.9 1.7l-1.2-1.8l0.6-1.9l-1.3 0.1l-1.5-0.6l-1.8 0.2l-0.9 2l-1.2-0.4l-0.8-2l-1.1 0l-1.4 0.3l1.4 2l-0.1 2.5l0.5 2.3l1.7-2.7l-0.2-2.4l-1.9 0.3l1.1-2.3l1.7 0.3l1.2 0.1l0.6 2l-0.5 2l0.5 2.8l1.6-0.3l2 0.5l1-3l1.9 0.7l1.7-0.3l2.1-0.4l-0.3-2.3l-0.1-1.7l-1.2 1.7l1.6 2.3l0 2.7l1.7 2.5l0-2.1l2.2-0.3l1.9 0.1l2.1-0.5l0.4 3.2l-2.3-0.2l-2.1-2.6l0-2.7l-0.5-1.7l-1.8 1.5l0.1 3.2l-1.7-0.4l1.6-2.8l2.3 2.9l1.4-2.6l2.2 0.6l-1.2-2.3l1.3-2.6l0.5 2.7l1.3 0.1l1.7-0.3l0.7-1.8l1.6-0.2l1 2.1l1.5-1.9l0.3 1.3l1.6 0.3l1.4-1.9l-1.5 0l-1.5 1.6l0.3 2.5l-2.1-1.9l1.8-0.6M1191.7 453.8l-3.1 11.7l-4.2-13.8l-0.5-7l2.6-6.8l1.2 9.1l4.1-7.7l-5.3-1.4l5.3 0.8l-1.8-4.6l-4.8 0.2l-0.1-5.1l-3.1 0l-2.2-2.8l0-4l-1-2.7l-0.6 2.7l-2.5-0.3l-1.4 2.7l-2.3 1.1l-1.2-4.1l-1.8 2.9l3 1.2l-2 3.6l-2.9 0.4l1.9-5.2l-2.9 1.3l-0.1-3.7l0.1-3.2l-2-1.7l-1.2-2.2l-0.3 1.8l1.2 2.2l-0.1 3.4l2.4 3.4l-2.4 2.8l2.9 5.6l0.5-4.5l3.9 3.5l3.2-0.4l-1.3-3.3l-0.9-3.8l1.2-3.8l1.1 2.7l2.9 0.7l2.6 0.9l-1.6-4l-1.6-3.2l-0.9 2.9l-2.5 0l-2.4-0.3l-1-2.3M1136.3 329.1l-6.2 0.6l2-4.6l-1.9-5l0 4l1.9 1l2.3-5.4M1150.1 300.2l-2.1-0.6l0.7-1.8l1.4 2.4l1.2-0.3l1.7 0l2.3 1.7l0.1 2.3l-2.7 0.3l0.1-1.9l2.6 1.6M1151.3 299.9l-0.8-1.8l1-0.6l2 0.3l1.5-0.5l1.2 0l-1.2 2l0-2M1130.2 324.1l-0.1 5.6l0 0.6l4.2 6.7l4.6 9.2l2-7.2l7.3-2.4l-0.2 11.7l1.2 12.9l6.9-13l10.6-1l5.1-8.8l10.5-4l-7.8 14.3l-2.7-10.3l3-9.2l-4 0.2l-7.4-0.9l1 8.7l-8.3 11l-7.9-11.6l10-0.5l-5.8-6.1l7-0.4l-3.5-6.1l-3.4 1l-5 6.1l-4.7-7.3l-4.6-0.3M1177.7 246.9l-6.2 2.3l-3 8.1l-3.4-8.6l5.9-15.9l0.5 16.4l4.2 8.2l-7.2-0.1l0.6 6.8l3.7-0.8l-4.3-6l-3.1 7.5l-0.9-7.3l-2.2 7.1l3.1 0.2l-2.5 5.1l1.4 3.2l1.3-4.5l3.7-0.5l3.5-4.8M1177.7 246.9l8.9 0.7l6.2-1.3l0 8.7M1177.7 246.9l-2 10.5l2 6.6l4-1.5l3.8-6.7l-5.2-0.1l6.3-8.1l3.4 8.6l-4.5-0.4l1.1-8.2l3.8-13.9l-11.4 2.3l-8-3.2l-10.5 2.2l4.6 13.7l-0.6 8.8l-5.1-0.2l-2.6-8.3l-4.1-14.9l-10.6 2.1l-3.5-9.8l-1.7 9.9l-0.4 12.2l-5.7-10.1l6.1-2.1l5.2-0.1l9.9 14.5l-3.5 8.6l-2.2 7l3.3-2.2l-2.2 7l1.7 3.8l-2.6-0.7l0.4 4.1l2.2 0.1l0-3.5l-2.2 3.4l0.5 2.8l1.7-2.7l2.1 2.1l-1.3 2.9l1.3-0.3l1.6-2.2l1.3-3.1l-0.1-2.9l1.8 2.6l-1.7 0.3M1190.3 397.9l-0.7 2l-1.2-2.4l-1.4-2.5l0 3l-2-0.6l-1.3 2.5l1.4-0.1l1.7-0.2l1.3 0.2l1.5 0.1l1.7 0.4l-1-2.4l-1.4-3.2l-2-3l2.9 0l1.4 3.3l0.6-3.6l0.2 0.4l0 3.1l0 2.6l0 0.1l-1.7 0.3l-1.9-0.4l-1.4 0.5l1.1 1.8l0.3-2.3l0.5-2.8l-1.9 0.3l-0.1-3.3l-2.3-0.1l0.1 3.4l-1.3 2.6l-1.2 2l-0.7-2.5l1.9-1.8l0 2.3l1.6-0.2l2-2.4l-2.3 0l2.2-3.3l0.6-4.2l2.3 4.2l0.6-3.4l1.7-4.9l-0.1 4.6l-1.6 0.3l-0.9-4.6l2.6-0.3l0-0.6l-3-4l3-1.2l0-7.6l-3.5-9.7l3 10l-4.8-0.2l-6.3-12.7l8.1 2.9l-4.5-13.5l4.2-9.5l-6-2.9l1.8 12.4l8.2-0.3l-0.1 12.8l-0.1 10.7l-0.5 0.3l0.5 7.3l0 5.2l-2.6 0.9l-2 3.8l-2 0.7l-0.3-4.9l3.9-4.5l-2.3-8.7l-7.1-0.6l-5.4 0.1l-4.1-0.2l1.6-9.4l-7.8-0.3l-5.9 1.4l-1 10.5l6.9-1.2l6.2-1l-6.2-9.7l2.7-12.5l-2.3-10l7.4 1.2l8.2-8.3l6.5-1.7l3.4-7.8l2.5 1.1l0 4.9l-2.5-6l-0.6-3l3.1-1.2l0-0.6l-1.9-4.5l1.9 0.7l0 4.4l-2.5 4.2l-4.3 2.5l-4.7-1.9l3.4-4.5l0.4-4.8l2.5-4.1l-0.7-1.9l-0.5-3.4l-1.6 0.4l-2.6-0.6l-0.9-1.6l0.1-2.9l1.1 2.3l0.4-2.1l1.7 0.4l0.3 1.4l-0.1 3.1l0.1 2.8l1.5-3.2l2.3-2.4l1.8 2l0.8 3.7l-0.9 2.1l-2.8-0.1l-2.8 0.6l0.3 3.5l-3.8 1l0.8-4.5l-2.7 0l-3.2 0.5l-0.4-2.5l0.9-3.2l-2.2-0.2l0.8-2.3l1.8 0.2l1.5 1.9l0.2-2l2 1.6l0.5-1.7l-2.5 0.1l1.2-2.1l-1.9-0.7l0.7-1.5l1.5-0.6l-3.1 0.2l-0.4 2.2l1.3-0.3l-0.9-1.9l-1.1 0.5l0.7 1.7l-1.9 0.4l1.2-2.1l-1.9-0.2l-0.6 2.3l-0.8-1.9l-1.2-0.5l-1.3 2.7l-0.4 1.7l-1.3-1.7l-1.6-0.2l-1.7 0.4l0-1.9l1.7 1.5l1.5-2l1.6-0.2l1.5-0.3l2.6 0.1l-1.4 0.4l-0.9 2.2l-1.6 0l-1.7 0l-0.7 1.7l-0.9-1.9M1190.3 397.9l0.9-2.9l0.8 2.5l-1.7 0.4M1132 432.2l-2.6 0.2l0.1-4.2l0-0.3l0-3.3l0-3.1l0-0.5l2.1 1.1l-1 2.5l3 0.5l1.6 3.8l0.2 3.6l-0.3 5.8l-3.4 4.6l4.5 8.6l8.3 1.4l9.7-0.5l-1.1 7.8l-8.5 0.9l-0.1-8.2l-1.5-9.5l5.6 0.9l-4.1 8.6l8.6 7.3l-6 13.7l-5.3 13.9l-3.6-15.3l-9-1l0-10.1M1132 432.2l0.9-4.7l-3.4 0.7l2.5 4l3.2-3.3l3.9-0.4l-3.4-4.4l0.3-2.6l-1.1-3.1l-0.1-1.9l-1.7 0.1l-0.9-2.3l-0.8 2.5l-1.1 1.8l2 0.1l2.6-0.3l1.8-1.5l-0.2 2.2l2.5 0.1l1.7 3l-2.4-0.8l-1.8-2.3l-1.6-0.7l-1.8-1.8l-1.7 0.2l-1.8-0.5l1.1-1.8l0.7 2.3l-1.8-0.4l0.7 2.2l1.3 3.5l-2.1-0.6l1.1 3.1l-1.1 0M1132 432.2l3.1 6.1l4.5-1.6M1132 432.2l-2.6 4.4l0-4.2M1132 432.2l3.4 0.3l4.6-0.2M1141 270.9l0 4.6l-0.2 3.4l0.6 2.9l-1.6 0l-1.5-2.7l-2.6-0.5l0.2 3l2.4-2.5l0.2-3.7l-0.3-4.6l-2.8 4.6l0.3 3.2l-2.1 0.9l-0.9 2.2l-1.4 2.7l0.3 2.3l1.7-0.2l-0.6-2.2l-1.1 2.4l-1.2-1.9l0.9-0.4l-0.8-2l-0.1 2.4l0 2.1l0 0.1l1.2-0.3l-1.2 0.2M1141 270.9l3.7-0.2l1.6-4.4l1.1 4.8l-0.9 3.1l-3.2 1.2l1.4-4.7l-2.1-5l-1.6 5.2l-2.5 4.5l2.5 0.1l2.3-0.1l2 2.4l-2.2 0.7l0.2 2.9l-1.9 0.4l1.7-3.3l2.2 2.5l-0.5 2.4l-1.5-2l-0.2 2.5l-1.9 0.1l1.1 2.4l1.1 0.1l1.6-0.5l1.5 0l1.8-0.5l-1.7-1.5l1.2-0.4l2.1-0.2l1.3 2.4l-1.2-0.1l-0.1-2.3l-1.6 2.1l1.7 0.2M1141 270.9l-2.8-0.1l-3.3 0.1l-1.6 4.4l-1.4 3.6l0.8 2.8l1.8-0.2l0.4 3.4l-0.2 2.1l-1.4-0.5l1.6-1.6l1.5 1.7l1.7-0.1l1.5 0l0.1-2.1l1.3 1.6l1.3 0.4l-2.7 0.1l1.4-0.5l0.2-2l-1.4-2.2l-1.7-0.2l1.6 2.8l-1.6 2.1l-0.4-1.8l0.4-3.1l-1.5 2.4l-0.2 2.6l1.3-1.9l-1.1-0.7l-0.7-2.4l-1 3.3l-2.2-0.6l1.8-2.8l-0.9-2l-1.7-0.6l-1.4 0.4l0 3l1.4-3.4l-1.4-3l2.8-0.6l-2.8 0.6l0-4.1l1.9 0.6l1.2-5.8l0.2-5.8l4.5 4.7l-3.4 5.4l-1.3-4.3l-3 0l3.2-5.8l-3.1-9.7l5.8-2.6l-5.8 2.2l0 0.4l-0.1 8.8l3.2 0.9l2.7-12.3l6.5 2.8l-0.9-15.1l-5.6 12.3l1.5 11.4l4.6 5.8l1.8-5.8l-1.4-8.6l-5 8.6l0.3 5.6l2.7 5.4l2.3 4.5l-0.2 3.1l-2.3 0.4l-1 2.9l-0.1 2.6l1.5-0.4l0.2-2.2l1.7 2.1l-0.8 2.5M1157.4 419.3l-0.3 2.6l-1.9-2.3M1152.9 424.8l2.3-3.1l-2.7 0l0.4 3.1l-2 3.7l-1.6-2.8l-0.9-3.7l1.9 0.4l2.2-0.7l1-2.5l-2.1-2.3l0.5-2.7l1.3 0l1.5 0.3l0.2-2.1l1.2 0.4l0.8 2.1l1.1-0.5l1-1.8l-0.9-0.1l-2 0.3l-1.4 1.7l-1.2 2l1.6-0.1l-0.4-1.9l-1.6-2l-1.3 0.5l-1.7 0l-1.4 1.8l1 2.4l0.4-2.3l0-1.9M1152.9 424.8l2.1 0.8l-0.5 3.8l-0.5 4.3l-0.4 3.5l-5.6 0.9l3-5.6l-4.4 0.8l1.4 4.8l-5 5.3l-6.8 8.1l0.7-7.7l6.1-0.4M1152.9 424.8l-3.6 0.9l-2.4-0.5l-2.1 4.1l-1.4 2.9l-2-4.4l3.4 1.5l0-4.5l-2.8-0.1l-0.6 3.1l-2.7-3.4l-0.4-3l-2.3 0.1l-1.7 0.5l-2-3.3l0.8-2.1l0.9-2.7l1.6 0.6l1.1 2.4l0.1-2.3l-1.1-2.5l-1.7 1.8l-1.2-1.7l1 0l1.9-0.1l1.5 0.3l-0.4 2.2l-1.2-0.1l-0.8 2l-0.8-2.6l-1.8 0.4l-1.5 0.2l-1.1-0.3l0-1.8l1.4-0.3l1.8 0.1l-0.6 2.1l-1.2-2.2l-1.4 0.2l0 0.1l1.1 2.1l0.3-2.4M1134.2 298.5l1.2 0.6l1.2 1.7l1.7 1.6l0.5-2.2l-1.5-1.3l-1.9 0.2l2.8-0.9l-0.9 0.7l-0.7 1.9l0.2 1.6l-1.3-1.7l1.1 0.1l2.2-0.6l1-1.8l1.7-0.4l-1.7 2.4l-1.5 2l-1.5 0l1.6 2.4l-2.2 0.7l-0.1 2.6l-1.6-2.8l-0.3 2.6l1.9 0.2l-0.4 2.5l2.9-2.4l0.3 3.4l2.2 3.6M1129.4 443.6l-0.1 7.8l6.9 0.1l8.4 9.6l-6.4 11.4M1173.7 276.8l-1.7-0.2l-0.3 2.5l2.4 0.2l1.8-0.4l1.6 0.5l-1.2 2.3l0.1 2.3l-2.7 0.5l-1.7-0.2l-1.6 0.5l-1.2-0.5l-1.8 0.3l-1.7 0.5l-0.9 0.1l-1.6-0.7l-1.3-1.5l-1.1-2.4l-1.8-0.5l0.9 2.8l1.5 2.5l0.5-2.4l-2-0.1l-0.1 2.4M1173.7 276.8l-2 2.3l-1.9 0.8l-1.3-0.5l-1.7 2.9l-0.8-1.9l-1.8 0.1l-1.2 2.6l-0.2-3.2l-2 0.7l-0.6-2.8l-1.6 0.1l0.4 2.2l-0.7 2.8l-1.2-2.3l1.9-0.5l1.2-2.3l2.9-0.6l1.2-4.1l-2.2 0.6l-2.7 0.6l-3.1-0.1l1.2-5.2l-0.3-5.1l2.2-6.6l-4.7 0.9l2.1-9.2l3.7-14l-7.8-0.9l-5.1-8l-9 0.3l-4.5-14.7l-3.1-10.3l0-1.2l10-0.8l-6.9 12.3l-3.3 14.4l0 2.4l6.1 7.8M1173.7 276.8l0.4 2.5l0.8 2.6l1.4-0.2l2.1 0.1l-0.8 1.8l-1.2 0.4l-1.5-0.1l1.4-2.2l-0.4-2.8l0.2-2.6l2.3-0.7l-0.9 3.8l0.9 2.4l0.9 1.8l-1.7 0l-1.3-1.9M1174.1 279.3l-0.6 2.3l-1.8-2.5l-2.3-3l0.4 3.8l2 2.1l-1.4 2.8l-0.3-2.3l-1.6 0.2l0.7 1.6l0.9-1.8M1157.4 416.6l-2.3-0.2M1157.4 416.6l1.4 0.1l0.5 2.7M1157.4 416.6l0.6-2.2l0.1-1.9l-1.2 2.4l-2.2-0.4M1131.1 378.8l-1.2-7l4.8-2.2l-4.8-9.2l4.9-1.6l4.1-12.6l3.1 12.8l4.7 11.3l1 7.4l-2.7 0.9l-5-8l-4.6 6.8l1 5.7l-3.7 0l1.3 4.7l-1.6 3.5l-2.7 0.4l0.6 2.8l1 2.5l0.9 2.3l1-2.3l-0.1-2.2l1.4 0.1l2-0.2l-0.1-3.6l-2.3 0.4l0.4 3.4l0 2l0.9 2.6l0.9-1.9l0.2-2.9l-2 2.2l-1.2 2.4l-0.1-2.3l-1.9 0l-1.6 0.3l0.9 2.4l1.6-0.4l1.1 0l2.1 0.2l1.3-0.1l1.4-0.1l-0.1-2l0.8-2.1l1.8-0.4l0.7-2.7l-2.8-0.3l0.3 3.4l1.5 2.2l1.2 0.3l1.6-2.6l1.8-0.2l1.1-2.7l1.9-0.3l0.7 3.2l2 2.2l-1.7 2.2l0-2.3l-0.3-2.1l-1.4 2.2l-0.5-2.6l-0.7-2.5l-2-0.8l0.9-3.7l-3.1 0.9l0.9-5.3l-3.2 1.1l-3.1-1.3l-0.2 4.2l0.2 3.8l-1.9 3.8l-1.3 2.1l1.3-0.1l1.8 0.7l0.4 1.8l1.3-2.1l-1.5-2.6l2-2.9l-2.1-0.7l2.4-3.4l-0.3 4.1l2.1 3l2.5 0.3l0.9-3.7l-2.2-2.8l-2.3-4.2l0.1-6l-4.2-1l-2.7 5.7l-1.7 4.3l-1.3 4.1l0 0.2l0 3l0.6-0.2l-0.6 2.6l1.6-0.1l-0.7 2.7l-0.9-0.1l0-2.3l0-0.2l0-2.4M1131.1 378.8l-1.3 4.8l2.9-0.5l-2.9 0.9l1.2 3.4l-1.3 0.6l0.1-4l0-0.4l0-5.6l1.3 0.8l1.6 4.3M1131.1 378.8l4.3-1.4l-0.7-7.8l5.3 1l-5.2-11.8l-0.1 10.8l-4.8 1.1l0 1.1l5.5 5.6M1182.5 298l-1.5-0.2l0.6-1.6l-1.7-0.3l-0.3 2.8l-1.2-2.2l-1.6-0.4M1152.5 421.7l-1.6-2.7l-1.2 0.6l-1.9-3.1l-1.8-0.3l0.8 3.3l1.6 2.5l-2.6 0.3l-2.6-0.6l0-2.4l-2.5 0l2-2.8l-2 0l1-2l1.5 0l1.2-2.2l1 2.2l0.5-1.6l0.7 1.8l-0.6 1.5l-1.2 2.8l-1.6 2.7l1.6 3.1M1187.3 297.9l-0.1-2.2l-1.1 0l-0.4 2l1.6 0.2l1.8-1.9l0.3 1.4l1.2 0.2l1.1-2.2l0.8 2.1l0-2l-0.8-0.1l-1.5 0.1l-1.1 0.5l-1.9-0.3l3-0.2M1187.3 297.9l-1.2 2.2l-0.1 2.4M1187.3 297.9l1 2.2M1134.9 284.9l1.7-0.9M1160.2 277.8l-0.8-3.5l-1.9-5.3l-4.2 0.3l3 4.9l2.3 3.7l0.8-3.6l0.9-4.5l2.6 0.1l2.7-1.3l-0.2-3.8l3.7-0.7M1155.1 283.5l0-2.8l-2 2.2l-0.3-2l-1.1-3l-0.9-3.5l-1.7 4l0.1 2.5l-1.8 0.2l0.4 2.5l1.4-2.7l2-0.4l0.5-2.6l-2.6 0.5M1155.1 283.5l1.5-0.1l0.3 1.5l1.5-0.1l1.5-1.9l-1.6 0l-1.7 0.5l-1.5-2.7l2-0.1l-1.3-3.1l0.5-3.3l-2.3 0.7l-0.7-5.6l0.2-4l1.2-7.1l-2.7-7.5l0.7-16.6l5.2-11.8l5-9.7l2.5-14.6l4.4-14.2l5 12.3l6.5 12.8l-11.7 3l3.8 8.5l7.9-11.5l7-3.4l-4 17.1M1155.1 283.5l-2-0.6l1.1 2.6l-1.7-0.1l0.6-2.5l-1.9 0.2l0-2.6l1.6 0.4l2.3-0.2M1161.5 445.9l2.3-6.3l-1.3-6.1l-3.8 5l-2.9 4.9l4.9 8.6l5.8-7l6 0.2l1-5.8l-5.3-1.1l4.3 6.9l4.4-5.4l-2.7-6.8l4.4-0.1l0.3-3.4l3.1-0.3l-3.4 3.7l-2.9-3.2l-2.8 0l-2.9-0.2l-1-4.8M1167.5 300.7l2 0l2-1.7l-0.3-2.7M1184.1 346.8l8.2-2l0-8.7l-4 1.2l4 7.5l0 1.7l-3.7 13.8l-1.8 9.8l-1.1 6.5l-4.2 0.6l3.7 6.1l-2.4 4.3l-1-4.2l-3.3-0.5l3-5.7l-1.8-7.7l0.8-12.1l-6.2 12.2l4 7.2l-3.1 6.7l-0.6 3.8l2.3 0.6l3-0.5l1.9-4l-0.3-6.2l5.3-7.1M1184.1 346.8l-3.6 10.6l-6-8.7l-2.7 11.3l8.7-2.6M1184.1 346.8l-9.6 1.9l-7.8-1.5l5.1 12.8l2.5 9.6l-1.7 7.5l5.7-0.3l0.2 6.1l-1.6 5l-1.4 3.9l-0.2 2.9l0.8 2.4l-1.8 0.7l1.3 2.4l-1.2-0.7l-2.2 0.1l1.1-1.6l1.1 1.5l-0.1-1.7l1-3.1l-2.3 0.5l-1.7 2.2l-1.7 0.1l1.3-2.5l-2 0l-0.8 2.2l-2 0.7l0.7-3.4l-2.4 0.4l-1.4-0.4l-0.3 2.7l-2.1-2.7l-1.3-0.1l0-2.9l-2 0.1l0.7-3.8l1.3 3.7l1.3 3l-0.1 2.9l-0.6 2.8l-0.5-2.4l-1.9-0.2l1.8-3.2l1.2 3l1.3 2.9l0.9-3.1l1.4-0.2l-1 3.1l1.8-0.5l1.2-1.7l1.5 1.6l-1.6 0.1l0.1-1.7l-1.7-3l-0.3 2.1l-1.1-2.5l1.1-3.2l2.2-4l2.6-3.3l0 3.6l2.3-0.1l2.2 4.1l2.1 0.2l2.9 0l0.4 3.3l2.3 0l1.6-3.5l0.7 3.7l1.3-0.3l0.3 2.4l0.1 2.4M1182.6 476.8l4.8 13.7l4 12l0 0.4l-7.6 0.1l-7.7-14.2l-2.4-15l-3 17l5.4-2l6.5-12l6-11.3l3 11.4l0-12.8M1168.8 422.1l2-0.3l1.4-2.3l-0.2-2l-0.7-2.8l-0.1-1.9l-1.8 0.3l-1.2-0.2l-0.3 2.1l-1.2 0l1.2 2.2l0 1.8l-1.9 3.3M1136 421.5l0.5-2.4l2-2.2l-1.7-2.3l1.8-0.2l2.1 2.1l-2.2 0.4l-1.8 0l-1.9-0.4M1160.6 428.1l-2.1 5.5l4-0.1l1.2-4.7l3.4 1.1l-1-3.9l-3.3-0.5l-2.2 2.6l-3.6 1.4l1.5 4.1l-4.5 0.1M1181.5 415.1l1.3-0.3l0.2-1.3l1.6-0.6l-2.8-0.2l1 2.1M1181.5 415.1l-2.3 2.2M1181.5 415.1l1.6 2.1l-1.8 0.5l-0.9 2.1l-0.6 2.6l3 2.7l2.3 4.1l3.7 0.4l1.6-3.8l1.4 0.1l0-3l-1.4 2.9l-1-3.4l2.4 0.3l0.1-2.8l0-2.5l-0.9-1.9l0.9-2.2l-1.5-0.4l-1.2 2.4l1.8 0.2l-1 2l-2.1-0.2l-0.2-2.3l-1.4 0l1.1-1.6l1.3 0.1l0.5 1.8l-1.5-0.3l1-1.5l1.7-0.6l0.6 2.6l0.6 2.4l0.3-0.5l0-2.2l0-1.9l0-0.1l-1.5-0.3M1181.5 415.1l-2.2-0.5M1181.5 415.1l0.3-2.4M1182.1 300.1l-0.3 2.2M1182.1 300.1l-1.2 0.6l-1.3-2l1.4-0.9l-1.1-1.9M1182.1 300.1l2.4-0.3l1.6 0.3M1130.3 303l0.6-0.4l-0.6 2.4l2.4 0l-1.4 2.6l-1 0.6M1167.9 417.2l-1.8 1.9l1.8-0.1M1167.9 417.2l0-2.2M1167.9 417.2l2.1-0.3l1.3-2.2l1.8 0l0.9-2l0.7 2.4l0.9-2.1l1.5-0.4l-1 2l-1.4 0.5l0.7 1.9l-0.9 2.1l1.2 3l1.5 3.4l-1.5 4.2l-1.5 3.3l-0.7 6.4l3.4 0.4M1191.6 417.9l0.3 2l-1.4 0l1.1-2l-1.6-0.4l-0.8-2.2l-1.3 2l1.1 2.8l1.5-0.2l1.3 2.8l0 0.2l-2.4-0.5M1155.8 383.9l-2.7 4.4l-2.5-0.5l2.3-5.1l0.2 5.6l0.1 3l-2.5 1l-2.8-0.4l-0.7-4.4l1.6-4.2l-1.1-5.6l-0.8 6l-4.2-0.4l-3.1-4.9l5.4 0.2l1.7-8.3l2.5-9.1l-7.2-2.2l6-10.7l-9.1-2.1l-8.9 4l0-2.2l8.9-1.8M1155.8 383.9l2.2 3.9l1.8-4.1l0.6 4.9l3-0.2l2.9-1.1l2.6 0.3l-2.4 4.1l2.1 0.2l-1.8 2.6l2.1 0.5l0.7 2.5l-0.3 2.6l-1.2-2.9l-1.3-2.7l-0.3-2.8l-2.4-0.4l-2.3 0.4l1.6-3.3l2.3-4.3l3.2-0.1l3.1-0.8l3.2 0.3l3.3-0.6l1.4 4.5l2.9 0.2l2.7 0.6l1.4 3.5M1155.8 383.9l4-0.2l3.3-0.3l-2.7 5.2l-2.4-0.8l-2-0.5l-0.8 3.9l1.5 3.4l-2.2 0.2l-1.3-0.5l1 3.5l0.3-3l0.7-3.6l-2 0.1l0 3l-1.2 3.4l0 2.4l1.8-0.4l-1.8-2l-1.3 2.5l-0.1-2.9l1.4 0.4l-0.9-3.1l2.1-0.3l-2.5-2l-0.1-4.5l-1.8-4.5l3.6-6.1l-0.5-5.9l6.2-10.2l-8.9 0.1l2.7 10.1l-5.2-1l-6.7 0.3l-0.4 7.8l-3.2 4.7l-2.4 4.7l0.1 3.7l-1 3.3l-2.8-0.3l2.1-3.2l-1.4-3.9l3 0.4l2.4 3.3M1155.8 383.9l0.2 3.4l-2.9 1l2.1 2.9l2.1 0.4l2 2.8l-2.6 0.2l0.8 3l-0.9 2.2l-1-0.1l0.1-2.3l-1.5 0.4l1.4 1.9l-1.8 0l0.4-1.9l-2.2-0.1M1155.8 383.9l-2.9-1.2l-0.5-5.5l4.7-5.6l0.6 5.2l3.2 1.6l2.2 5l2.6 0.7l0.3-7.2l-5.1 1.5l-1.1 5.3l-2.1-6.9l-5.3 0.4l3.4 6.7l1.9-7.1M1135.7 424.1l-1.4-2.1l0.6-3.6M1135.7 424.1l-0.5 4.8l-2.3-1.4l-3.4 0.4l1.1-3.3l2.3 2.9l0.7-2.4l0.7-3.1l-2.7 0.1l0.7-3.4l-0.9-1.9M1135.7 424.1l-2.1 1l-2-3M1181.7 308.4l2.8-2.7l-2.8-0.4l-1.8 0l-2.7 1.1l-1.4 2.5l2.7 3.6l-1.5 3.6l3 1.7l-3.5 5.5l-3.7-6.4l-3 1.2l-0.3-5.4l2.9-0.5l2.4 0.5l3.7-0.2l1.5 5.3l4.3-1.1l1.3 6.4l-5.6 7l2.3 4.3l4.2-6l-0.9-5.3l3.7-5.5l3.1-1.8l0-3.8l0.1-3.6l-2 2.9l-3 0.8l2.5-4.2l2.5 0.4l0-3.2l0-2.8l0-2.5l0-1.9l-1.9-0.3l1.9-0.1l0 0.4l-0.7 1.8l0.7 0.1l-0.3 2l0.3 0.5l-1.6 3.5l1.6 2.5l0 0.1l-2.5-0.5M1181.7 308.4l-1.8-3.1l0.5-2.9l-2.2 0.4l-1.9 0.4l0.4-2.3l1.7-0.1l-0.7-2.8l-1 2.9l-0.3-2.6l-1.5 2.4l-1.5 0.6l-1.6-0.4l1.4-2.2l0.2 2.6l1.1-2.6l-0.7-2.3M1181.7 308.4l2.7 0M1143.2 421.7l-2.5 0.5l1.3 2.5l-3.3-0.3l2-2.2l0-2.9l0-2.8M1139.7 284.4l-2 0.3M1165.1 282.8l0.6 2.3l1.1-2.8l0.6 2.3l1.1-1.9l0-3.3l-1.4-2.5l-0.1-3.1l2.5-0.3l-0.2-5.4M1165.1 282.8l-2.1 0.3M1165.1 282.8l-0.3 2.4M1165.1 282.8l-1.9 1.7M1165.1 282.8l-0.9-2.3l-1.1-3.3l-1-3.5l-1.8-3.9l-2.8-0.8l-4-3.7l-3.9-1.2l-1.1-4.8l-4.1 0.6l-6.4 0l-4.2 0.9M1191 415.5l0.9-0.3M1178.9 429.5l-1.7-4l1-3.1l1.6 0l3.3-0.5l-0.3-1.6l1.7-1.1l0.3-1.8l1.7 0.4l-0.1 2.4l-1.9-1l2-1.4l1.2-2.8l-0.3-1.6l-1.3 0.1l-1.2 1.8M1133 311.2l-2.7 0.7l1.5 2.7l1.2-3.4l-2.7 0.1l1-3.7l1.7 3.6l1.2-3.3l-1.5-2.9l0.1-2.4l1.9 0.4l-0.2 2.3M1144.8 429.3l1.8 4l1.7-3.9l2.6-0.9M1160.8 280.6l-0.9 2.3M1138.8 387.7l-2.6-0.4l-2.2 0.5M1138.8 387.7l-2.4-4.6M1138.8 387.7l2.5 4.4l0.5-3.5l-3-0.9l0.7-3.3M1151.4 270.2l2.6 4.7M1151.4 270.2l-2.3 4.7l1.7-0.5M1151.4 270.2l-4 0.9l-2.7-0.4l1.8 3.5l-1.2 3.6l0 3.2l1.3 3l-0.1 2M1151.4 270.2l1.9-0.9M1151.4 270.2l-1.8-6.1l5.1-5.9M1181.3 417.7l1.5 2.6M1148.7 414.8l-1.5-2l1.5 0M1151.3 304.5l1.5-2.2l0.2-2.4M1151.3 304.5l-2.4 0.5l1.1 2.3l1.7-0.4M1151.3 304.5l1.4-0.3M1188.2 262.3l-3.1-0.2l-3.1 6.2l-0.3-5.8l-2.8 5.7l0.6 4.9l1 2.8l2.6 0.4l-0.4-4.2l1.7 0l0.3 3.6M1188.2 262.3l1.8-6.1l2.7 5.7l-4.5 0.4M1148 301.9l1.6 0.6M1148 301.9l0-2.3M1148 301.9l-1.5 2.6l1.6 3.2l-2.9 0l1.3-3.2l-0.8-1.9l2.3-0.7l-1.3-1.6l-1.4-0.6l-1.5 0.6l0.3-2l-1.1-0.4l-1.5 0.1l0.3 2.3l-2 0.1l0.3 2.4l2-0.3l0.6 2.6l-2.4-0.4l1.8-2.2l-0.3-2.2l-1.7 2.5l-1.7 2l0.2 3.4l1.9-0.8l-1.6 4.2l2.6-0.7l-1-3.5l2.4-0.5l1.8-2l0.5 2.8l-2.3-0.8l-1.4 4M1132.4 391.3l-2.7 0.2l0-3.5M1132.4 391.3l0.7 3.5l-1.8 2.2M1132.4 391.3l1.7 0.2M1193.5 117.5l-0.1 12.8M1165.1 248.7l6.4 0.5l7.5-13.2M1171.8 338.4l-1-9l0.5-7.4l-6.1-0.3l-4.3-4.4l-0.3 6.6l4.6-2.2l5.6 7.7l-6.4 7.8M1133.3 275.3l-0.9-2.9l2.5-1.5l0.5 4.5l-1.8 4.1l-0.3-4.2l2.1 0.1l3.1 0l2.3 3.5l-2.5 0.2l-0.2 2.5l-2.2 0l-1.4-0.1l1.2-2.9l2.8-3.2M1173.5 439.4l-2.5-6l-2.8 4.9l-1.7 6.7l0.9 9.7l7.4 0.3l-2.3-9.8l-5.1 9.5l-6.3 5.8M1191.3 283.3l-1.9 0.3l1.1-3.1l1.4 0.6l0.7-0.3l0 2.3l-0.1-0.2l0.1-2.1l0-2.6l-2.1 2.3l-1.9-2.5l1-2.1l1.9-0.9l1.1 0.2M1191.3 283.3l-0.8-2.8l-1.9 0.8l-0.3 1.8l1.1 0.5l-0.8-2.3l0-3.3l1.8-0.2l1.1-2.8l-1.4-3.9l-0.5 4.8l0.8 1.9l0.1 2.7M1191.3 283.3l1.3-0.2M1191.3 283.3l0.6-2.2l0.7-2.9M1191.3 283.3l1.2-0.4l-0.6-1.8M1173 395.2l-2-4l-0.1 3.8l2.1 0.2l0.4-3.6l1.2-4.3l0.9 4.5l1.3 3.5l1.2 2.5l0.7 2.4l1.5-3l0.3 3l1.7-0.6l1.5 0.3l-0.3-2.3l-1.9-0.5l-1 3.1l-1.8 0l-1.3-0.1l0.6-2.3l-1.9-0.7l0.7-1.8l-1.5-0.6l-1.9-3.1l-2.4-0.4l0.2-3.7l0.8-4.3l-2.8-4.9l3.4-1.2l-2.4-7.7l-1 8.9l-3.2-1.4l-2-6.5l0-10.7l-7.9-11.5l2 12.9l5.9 9.3l-3.1 8l-3.8-6.8l-5.2-0.3l-4.2 6.4l4.7-0.5M1173 395.2l0.3 2.8l-2-0.6l0.9 2.2l-1.4 0.3l-1.5 0.2l-1.7-0.6l0.5-2.3l1.5 0.3l1.2 2.4l0.5-2.5l-0.4-2.4l-2.3-3.1l2.4-0.7l-2.1-3.6l-0.3 4.3l0.3 3.1M1173 395.2l1.3 2.6l-1 0.2M1190.1 302.1l-1.2 3.1l-0.2-2.6M1131.3 284.4l1.4-0.1l0-2.6l-2.2 0.7l0-0.1l2.2-0.6M1138.3 265.5l-4.7 1.1l-3 0.6l0-0.6l0-6.7M1138.3 265.5l-0.1 5.3M1138.3 265.5l4.3 0.2l3.7 0.6l-1.9-6.4M1140 370.6l2-11.6l-7.2-0.2l-4.8-8.6l-0.1 10.2l0 10.3M1132.8 302.6l1-1.9l1.7 0M1133.8 300.7l0.9 2.3M1181.5 377.2l-3.2-0.4l1.4-7.3M1143.1 278.5l-2.1-3M1141 199.4l4.9 14.4l-7.3 12.6l-7.8 2.1l0 9.9l-0.1 12.3M1171 433.4l-1-3.9M1130.9 213.8l-0.1 12.3l7.8 0.3M1157.9 297.3l0.3 2.3l-1.9 0.1l0.6 2l0.4 2.3M1167.4 463.4l6.3 10.4l-8 1.3l1.7-11.7l7.4-8.4M1173.7 473.8l6.5-9.2M1161.7 306.7l1.2 2.7l0.4-2.5l2.3 3l0.8-3.5l1.7-0.1M1161.7 306.7l1.9-3.2l-1.9 0l-1.1-2.3l-2.1 0.9l1.2-2.9l0.9 2l1.2-1.8l0.5-1.9l1.3-0.5l1.3 0.3l1.5-0.7l1.7 0.2l0.1 2.2l1.5-2.4l0.2 2.4M1161.7 306.7l-2.6 0.4l-2.7-0.4M1130.1 338.1l-0.1 9.9l4.3-11l6.6 2l-0.3-9.9M1185.5 388.2l-0.9 3.4l-1.2 3.7l-2.3-0.2l-0.4-4l-2.3 0.7l-1.5-3.9l-1.7-4.4l-2.6-6.4l-0.6 6.1l2.6 4.1l-3.4 0.2l-2.3-3.5l0.3-5.7l-3.5 5.8l0.6 3.2l0.2 4.4l-2.1 3.2l-0.3-3.6l-0.7-2.9l-0.3-5l2.9-6.5l4.2-7.5M1152.9 382.7l-4.1 0.6l-1.9 0.4l0.3 3.8l-2.3 0.2l1.1 4.5l1.2-4.7l3.4 0.3l-2.7 4.1l-1.2 2.8l-1.6 2.7l-0.2-2.5l1.8-0.2l1.9 0.4l2.5-0.5l-0.5 2.7l-1.7-0.1l-1.1 2.4l-2.1-0.2l-0.6-2l-1.3-0.4l-2.3 0.7l1.2 2l1.1-2.7l1.1-2.1l-0.9-3.5l-2.7 0.7l1.8 3l0.7 1.9l0.6 2.5l0.7-2.1l2.1-0.1l0.6 2.3l1.1-0.1l1.8 0.7l1.3-0.1M1161.7 303.5l-2.8 1M1190.9 305.8l1.6-0.7M1183.1 417.2l1.7 0.2M1156 387.3l1.3 4.3l-0.6 3l-1 2.8l1.8 0.2l1.1 2.3l-2-0.1l-0.9-2.4l-1.2-2.6l-1.3-3.5l-2.6-3.5M1190.6 297.6l1.2 2.1l0.4 2.1M1151.8 413l0.1 1.2M1167.1 276.9l2.3-0.8l-2.4-2.3M1133.8 412.2l0.2 1.7M1138.1 399.3l1.7 0.1l1.6 0.1l1.3 0.2l1.7-0.2l1.3-0.1l1.5-2.1l1.7-0.1M1136.5 394.7l2.3 0.5M1169.6 303.6l-0.1-2.9l2.3 0.2M1176.5 323.3l-1.7 5.9l-3.5-7.2l5.2 1.3l4.4-2.1l-0.9-3.4l0.9-4.9l-1.9-4.5l-1.8-2l-1.8 0l-1.3-3.4l-2.6 0l-1.3 3.5l1 2.1l-1.7 4.1l-3.2 0.7l1.7-3.8l3.2-1l2 0.6l2.6-0.3l-1 3.8l2.2 3.4l-4.2 0.8l-3.3-4.2l-1.5-3.1l-2.4 0.3l-2.7-0.5M1176.5 323.3l0.5-7.2M1176.5 323.3l3.5 6.8l-5.2-0.9M1180 330.1l0.9-8.9M1128.6 560l-0.1 12l4.4-10l4.5 11l9 1l-6.4-12.9l-2.6 11.9l-8.9-1M1128.6 560l0-9.9l8.5-2.4M1128.6 560l4.3 2l7.1-0.9l8.2-9l2-15.7l4.1-13.1l6.6 15.8l-5.9 9.2l6.5 13.2l-6.2 13.5l8.9 1l8.9 1l6.5-9.4l2.5 10.4l-9-1l-5.6-11l-2-13.3l4.6-13.5l6 1.7l5.6 10.8l4-12.8l5.5 2l0.1-12.8l-1 0l1-12.8l0 12.8M1135.7 310.6l2.7 4.3M1166 399.6l-1.1 0l-0.8-2.6l2 0.9M1138.6 414.4l0-2.3M1182 429.2l3.2 5.1l3.6-4.7l-0.7-3.9l-3 3.5l0.3-3.5l-0.4-2.5l-2.2 1.9M1185.2 434.3l-3.5 0.2M1185.4 425.7l2.7 0l-1-2.9l-2.1 0.4l-0.5-4M1129.8 378l0.1-6.2M1128.9 510.7l-0.1 11.4l0 0.9l-0.1 12.3M1184.4 451.7l3.3-4.7M1142.1 236.2l5.5-10.1l4.5-16.2l3.8-10.9l-0.7-11.3l-7.9-14.3l-4.1 13l-1.3-9.7l-10.7 0.1l-0.1 12.3M1168.2 412.9l-1.3 0l-0.2 2.1l-1.4-1.9l-1.5-0.6l-0.9 2.7l-0.6-2.6l-0.7 2.5l1 1.9l1.5 0.4l0.5-2.5l2.1 0.1l-0.8 1.8M1171.6 273.6l1.3-5.3M1182.7 391.6l0.1-4l-2.1 3.5l-0.8-3.7l-1.5 4.4l-1.6 3.5l2-0.2l1.4 2.1l1.3-0.1l-0.4-2l-0.9 2.1l-2.2 0.6l0.8-2.7l1.9-4l2 0.5l1.9 0l-1.8-4M1190.1 271.1l2.6-0.1l0-3.7M1135.6 414.5l0.1-2.4M1171.7 279.1l0.1 2.9l1.7-0.4l1.4 0.3l0 2l-1.2 0.6M1163.7 422.6l-1.9-0.5l2-2.9M1140.5 414.1l0.9-1.7l0.3 2.1l1 2l1.7 0.2l-1.2 2.6M1189.3 317.6l-1.8-5.5l-3.2 4.6M1191.8 429.7l0-3.8l-0.1 3.9l0.1 4.3l-1.8 0l1.7-4.3l-2.9-0.2l1.2 4.5l-3.5 3.8M1134.7 287l1.7-0.4M1153.1 412.5l1.8-0.1M1147.8 283.6l0.5 1.9M1147.5 330.6l-0.6-8M1136.1 308.1l2.5 0.1M1146.6 284l-1.6 2l-0.2-2.6l-1.4 3.1l-0.3-2.6l1.7-0.5l1.8 0.6l0.8-2.9l-2.1-0.1l1.6-2.7l-1.6-0.5M1158.2 336.1l-2.1 12.1l-8.1 0.1l-7.1-9.3M1141.9 176.7l-10.7-0.8l5.9-12.8l-5.8-10.2l8.9-1.2l-3.1 11.4l-5.8 1.4M1141.9 176.7l5.4-3.3l4.1-13.2l-2.5-11.8l-8.7 3.3l-8.9 0.4l6.5-10.9l7.5-2.9l-5.1 13.4M1141.9 176.7l-4.8-13.6l9.3 1.1l5-4l8.5-9.7l2.7-17.7l-10.4 1.3l-3-9.5l-7.1 1.2l-10.6 1.7M1160.1 425.6l-1.8-0.2l1.2-3.5M1163.6 297l1.3 2.2l-1.8 0l-1.2 2.1l2.2 0.3l2.1-0.3l-1.3-2.1l-0.8 2.4l-1-2.4l-0.8-1.7l-1.7-0.2M1130.5 271.8l0.1-4.6l1.8 5.2l-1.9 3.5l0 3.4M1189.1 378.8l-3.4-2.2l-0.5 6.7l2.3 4.2l2.9 0.8l1.4 3.1l0.2-3.4l0 3.8l-0.8 3.2l0.8-0.1M1189.1 378.8l0.4 4.9l-4.3-0.4l-3.4 0.1M1189.1 378.8l2.5-8.5M1159.3 394.4l0.1 3.4l-0.8 2.1l1.3 0.3l1.9 0.1l1.3-0.2l-0.4-2.9l-2.2 0.2l-1.1 0.4M1148.6 395.1l2.1-2.8l0.4 2.3M1191.7 452.1l0-6.4M1172.5 445.2l5.5 1.5l5.9-2M1171.5 303l1.9-1.7l0.7 1.7l-0.7 3l-3.2 0.5l-2.2 3.1M1183.8 503l3.6-12.5l4.1-0.8M1183.8 503l-12.2-4.3l-5.4 4.5l-12.4-5.2l-6.9 3.9l5.5 13l-12.1-5.6l-1.8 14.2l2.3 11.5l4.8-8.7l-5.3-17l-0.6-12.4M1183.8 503l-7.8 12.6l9.9-0.2l5.5-12.5l-0.1 12.4l-5.4 0.1l4.4 12.7l-4.6 10.8l-9.6 2l-3.5 12.5l9.1-1.7l4.2 16.5l5.2-13.2l0 11.5M1186.7 275.5l1.9 2.5l-1.6 0.7l-1.9 2.5l-1.6 0.2l0.3 2.2l1.6 0l1.6 0.2l2.4-0.2M1191.2 395l-2.3-0.3l0.9-3l2-0.3M1129.5 418.8l0 2.2l0.8-2.4l-0.8 0.2l0.1-2.4l0-0.1l0-2.1M1192.4 316.4l0 5.3M1149.2 280.9l0.7 2.5M1185 397.4l1.8 2.2l0.2-1.6M1159.5 312.7l1.1-2.2M1148.7 297.8l2.8-0.3M1150.1 414.9l1.3 2l-0.5 2.1l2.6 0.2M1163.2 314.1l-2.3 3.2l-2.7-0.5l-2.3 6.7l4.7 0.4l2.8 4.6M1164.9 316.7l1.4-3.3l3.5 4.7l-4.6 3.6M1188.6 360.3l3.6-1M1164.5 257.5l4-0.2M1138 397.3l1.8 2.1l0.5-2l1.1 2.1l0.1-1.8l-0.9-2.9l-0.3 2.6l-2.3-0.1l-1.7 0.3M1186.5 328.4l5.9-1.8l0 1.5l-5.9 0.3l1.8 8.9l4.1-9.2l-0.1 8M1135.1 438.3l-5.7-0.8l2.3 5.4l5.2 0.9M1138.5 523.5l7.1 2.8l4.6 10.1l4.8 11.9l10.5 4.4l7.1 0.7l-5.1 12.6l12.1 1.6l2.1-15.9M1143.3 281.4l2-0.4M1151 432.5l2.6 4.7M1172.4 312.2l0.4 4.7M1142.7 383.3l2.2 4.4l2-4l-1.9-5.1l-2.3 4.7M1138.8 300.2l-0.6-2l1.6 0.2l0 2l-1-0.2M1178.3 158.6l-5.2-0.5l2.6 12.6l7.4 0.5l-4.8-12.6M1145.9 298.2l0.8 2.1l0.6-2.3l-1.4 0.2l-1.8 0.1l1.2 1.4l0.6-1.5M1192 397.6l-0.7 2.7l0.7-0.3l0-2.4M1165 223.8l6 9l2.4-12.4l-8.4 3.4M1151.2 285.8l1.3-0.4l-1.3-2.3l0 2.7M1178.4 281.8l1.4 0.2l-0.8-3.3l-0.6 3.1M1161.8 391.7l-2.5-0.2l1.1-2.9l1.4 3.1l-1.2 2.8l2.4 0l-1.2-2.8M1176.1 397.1l-0.5 3.1l1.8-0.1l-1.3-3M1138.4 304.8l-0.1-2.4l1.8 0.4l0.2 1.9l-1.9 0.1M1288 429.7l-4.7-0.6l-0.7-3.3l-3.8 4.1l-4.2-3.4l3.5-0.9l4.5-3l2 0.5l4.4-0.9l0 0.6l0 3.1l0 3.7l0 4.2l-3 0.5l-4.8 5.9l7.8-1.3l-3-4.6l-7.1-1.4l-6 0.4l0.6 6.3l-8.3 0.2l0.2 6.1l-0.8 8.1l10-8.3l-1.1-6.1l7.7 0.6l3 6.5l4.7-1.5l-2.3 6.5l2.3 1.3l-7 9.1l-4.2-10.7l8.9 0.3l-4.7 10.4l7 1l-0.1 12.5l-6.9-13.5l-16.6-0.6l-13.8 3.2l0.1-10.4l-9.7 7.5l-13.6-7.6l3.7-10.3l10.6 7.7l6.3-6.2l10.5 0.4l-1.4-7l3.6-5l-5.9-0.4l0.2-3.5l4.6 0.3l1.1 3.6l5.7 0.3l5.6-0.8l-4.2-3.9l0.8-3.8l1.7-3.3l3.4 4.2l-5.1-0.9l-3.5 0.2l-4.3 0.2l2.3 3.6l2-3.8l-1.5-3.1l-2.8 3.3l-1.9-3.5l-3.8 0.3l-1.6-2.6l-0.9 2.6l-3.8-0.1l-0.5 3.3l-4 0.4l-4.1 0.3l3.1 3.6l-3.2-1.1l-2.5 4.7l-6.8-0.9l4.7-2.5l-4.7-1.5l-3.7-3l-0.3-2.9l2.9-0.4l-1.4-3.2l2.7-2.2l0.1 2.3l3.6 0.6l1.9-2.8l-0.7-2l-2.5 1.8l1.3 3l2.8 0l-0.9-2.8l3.1-0.1l1.6 3l-0.1 2.1l-1 4.3l-0.1 2.5l-4.6 1.3l0.4-4.5l-1.7-3.7l-4.5 0.4l1.6 3.1l2.9-3.5l3.9 0.1l2.1 4.3l-4.3-0.7l-4.6-0.2l-0.5 3.2l-6.4 0.6l-1.6-3.7l-3 2.9l-2-2.8l-1.4-2.7l-1.2-3.8l-3.6 0.3l-2.2 2.9l-3.7 3.7l0.1 2.9l5.3 0.2l2.5-4.2l-1.2-3.1l-0.8-2.4l-2.2 0.3l-3.3 2.6l-0.4 3.7l4.4-0.4l2.3-3.8l-3 0.5l-3.3 0l-4.5 0.5l-2.8-3.3l1.3-2.5l-3.1-2.3l1.3-1.9l-2.3 0.1l-2.8-0.4l-2.2 0.3l0 2l0 2.2l2.3 0.4l2.8 0.1l0.9-2.8l-1-1.8l-1.1 1.6l1.2 3l4-0.5l2.5 0l2.2-0.1l1.2 2.7l-3 0.1l1.8-2.8l2.4-1.8l2.2-2l-2.7-0.5l0.5 2.5l-2.1-0.3l-0.1-1.9l-2.1 0l-0.6 2l-1.9 0.3l-2.1-2.4l1.6-0.2l0.5 2.6l-0.3 1.8l2.9 2.7l-1.4 3.1l-3.8 0.1l-1 3.1l3.7 3.2l-4.2 0.9l-2.8-5.2l0.5-2.5l-3.1-0.1l0 3.2l0 3.8l0 0.5l0 3.9l0 5.2l0 1.1l7.8-0.7l-2.1 7.4l-5.8 5.7l11.1 2.8l-11.1-1.8l5.6 8.6l5.5-6.8l12.4-3.1l13.1 1.7l14.3-2.6l-0.7 10.2l-18.6 2.1l-7 14.4l-10.7-2.2l-14 0.9l7.1 13.8l6.9-14.7l7.4 13.1l3.3-10.9l16.2-0.2l-9.2-14.2l-12.2-2l-5.5 14.2l-14 0.8l0 0.1l-0.1 12.7l7.2 1.1l14.3-1.6l-9 12.5l7.2 14l-13.5 0.3l-6.3-13.4l12.6-0.9l12.1-2l14.1 4.4l9.6-14.3l9.7 11.8l-9.9 12.7l-9.4-10.2l-6 10.4l10.5 9.9l12 1l-8.8 12.5l-6.5 12.8l13.3-1.2l17 2.6l3.1-12.9l8.3 14l-11.4-1.1l-6.4 12.5l5.3 11.5l-13.9 0.6l-9.7-10.7l-9.6-1.9l-15.7 2.9l-8.7-13.7l9.8-13.1l-5.9-10.1l4.3-14.4l4.9-16l-3.1-10.5l11.1 0.7l8.4-11.8l9.4-16.3l9.6 2.9l9.8 9.5l-16.7 1.6l6.5 11.8l10.2-13.4l10.9 3.9l16.6-2.5l0 2.6l0 9.8l-0.1 12.5l-12.7-1.8l-10.5-8.9l16.2-2.7l7 13.4l-0.4 0.6l-6.7 14.6l7.1-2.7l-0.4-11.9l-12.3-2.4l-6.8 13l-8 15.7l15.9-1.6l11.6-0.4l-4.9 13.4l4.3 11.4l-8.6 14.5l-14.3 0.3l9.4 10.6l4.9-10.9l-6.4-11.5l15-3l0.5 0.2l-0.1 12.4l0 12.2l-13.9 0.6l-14 0.5l4.6-11.1l-3.5-12.9l-6-13.1l5.5-11.6l-10.1-14.9l-4.4 12.9l-7.1-11.1l-4.9 10.1l-8.6 15l11.8-1.5l6.8 11.6l11-10.5l-9-13.6l14.5 2l3.6 11.8l12.3-13.4l11.6-2.5l0 2.1l-0.1 12.5l-4.8 0.9l-19 0.4l-9.1-0.2l-17.8-1.1l-3.2-13.5l-16.3 2.4l7.7 12.6l5.3 11.3l-4 13.4l-8.5 13.8l-14 0.5l-13.9 0.6l9.8-12.1l-9.7-0.4l-0.1 12.5M1288 429.7l-0.9-3.4l1.9 3.3l-1 0.1l1 4.1l0 5.1l0 0.6l-0.1 5.7l0 7.8l0 10.1M1288 429.7l-2 4.6l-2.7-5.2l-4.4 3.8l-0.1-3l-0.7-4.3l-0.7-2.3l3.8-2.9l-3.6-0.3l-0.2 3.2l-2.3-3.1l-0.9 2.1l-3.5-2.1l-1.6-2.6l-3-0.1l1.4-2.1l0.8-1.6l1.7 1.7l1.9 2.1l0.1-2l-1.3-2.1l-2.4 0.3l-2.1 0l1.3 1.6l1.6 2.2l2.8 0l-1.2 2.6l-2.9 2.1l-3.5-2.6l1.8-2.2l2.2 2.5l2.4 0.2l4.4 0l0.2-2.4l-0.1-2.5l2.4-1.6l0.5 1.7l-2.9-0.1l0-2.1l-2.5 0.1l-0.7 2.3l-2-0.1l-2.5-0.1l-2.5 0.1l-2.5-0.2l1.5-1.6l-2.9-0.4l-1.2 2.2l-3.4-0.1l1 2.3l2.6 0.2l-2.4 1.6l-3.3-1.7l-2.5-0.4l-0.1 2.2l-2.1 3.1l-3.7 0l-0.8 3.7l-1 3.9l5-1.1l0.6 5.5l-5.6-4.4l-1.6 4.2l-4.1-0.6l-1.1 4.3l5.2-3.7l1.1 4.3l-2.3 5.3l7.5 1.3l2.1-6.7l-1.2-4l-6.1 4.1l7.3-0.1l4.7-5.3l4.8-3.2l3.5-0.6l4.7-0.2l5.7 0.7l0.2-3.6l2.8-3.2l-3.2-1l0.4 4.2l-5.9 2.9l-1.4 4.7l6.2 5.5l-8.1 6.3l9.2-0.2l3.1 5.7l-12.4 10.1l6.9 16.6l-6.7 11.7l-1.7 11.4l-12.7-13.6l14.4 2.2l-4.2-15.6l4-12.7l-0.7-7.5l-5.2-8.2l-8.4-7.1l7 0.1l-2.3-5.4l-5.9 1.3l-7.2-0.2l-1.6-5.3l-4.2-3.2l2.2-3.6l3.2-2.1l1.3-2.8l-1.9-2.2l-1.4-1.7l-2.3-0.1l1.6 1.6l-2.7 0.3l-1.2-2l-1.4 2.3l-0.3-2.2l1.7-0.1l2.3 0.1l-1.1 1.9l-2.6 0.3l-3-0.2l-2.3 0l-0.5-2.2l-1.9 1.8l-2.7-1.6l-2.4 1.9l2.6-0.2l2.2 2.7l0.1 1.8l-4.1 0.2l-1.3 2.6l2.8 3.4l0.6-3.3l2-2.9l1.4 3.4l1.5-3.6l2.8 0.1l2.3-2.4l-2.4 0.1l-0.7-1.8l-2.7 2.1l-2-2.5l0.5-2.1l1.4 0.3l2.6 0.1l2.9 0.1l-2.7 2l-0.2-2.1l-2.1 2.1l-0.4 2.1l-2.2 2.1l-2.9-2.5l-3.2 0.7l1.2-2.5l-2.6-0.4l-3-0.1l1.6-1.7l2.7-0.2l-1.3 2l1.4 2.9l-0.2 2l-2.7 3.4l3.6-0.8l3.4 0.1l3.4 0.5l-4 2.8l4.3 0.1l2.6-3.3l1.4-3.1l3.1 2.7l0.5-2.1M1284.2 278.4l-3.3 3l-0.7 2.8l2.7 2.5l-2.9-0.5l-2.5-0.1l-2.2-1.9l0-2.6l2.7-2.8l-0.8-3.1l-3.2-0.8l-3.5 3.4l-1.8 2.8l0.9 2.4l2.2-1.9l-1.3-3.3l-1.3-3.6l3.8-4.1l-0.4-4.9l-3.9-7.9l-6.7 0.4l2.9 7l-1.2 4.3l-2.2 4.8l2.4 4.3l-1.2 2.5l1.7 2l-2.7-0.1l-2 0.7l-2.9-0.4l-2.7-0.2l0.6 2.1l-2.2 0.5l-2.7-0.7l1.6-2l-2.3 0l-0.2-2.9l2.4 0.2l2-2.6l-4 0l-0.4 2.4l-3.2 0l-3.6 0.2l-2.9-3.2l-2.3 2.3l1.9 3.1l-3.3-0.4l1 2.3l-2.6 0.6l-0.9-2.6l-1.8-2.5l-2.7-2.8l-3.9-3.5l3.7-0.8l0.2 4.3l-1.1 2l2.9 2.7l-2.6 0.1l-1 2.2l3 0.1l-2-2.3l-2.5 0l-0.6-2.8l0.7-2l-3.1-1.1l-1.3-3.1l-1.5-5l5.3 0l3.1-3.6l-4.8-1.1l1.7 4.7l-3.8 5l3.7 0.7l-2.4 2.4l0.3 3.8l-3.9-0.8l-0.9 2.9l-1.8-2.6l-2.7-0.8l-1.8-2.3l-3.1 0.2l-4-0.4l-3.1-0.3l-1.1-4.5l-4.2 0.8l-1.2 3.8l1 3l0.3 2.4l2.3-2.5l-0.2-3.1l2.8 2.7l-2.6 0.4l0.9 2.4l-3.2 0.1l-2.6-0.2l1.5 2l1.1-1.8l1.6 2.1l-2.7-0.3l-2.3 0.1l2.3-0.1M1284.2 278.4l-0.1 3.8l-0.7 2.6l-0.5 1.9l2.4 0l-1.9-1.9l2.6-0.1l1.3 1.9l2.2-2.1l0 2.3l-2.2-0.2l0.4-2.4l-1.5-2.5l1.7-2.8l1.6 0.2l0-3.5l-4.2 0.1l4.2-0.4l-2.6-3.7l2.6-0.2l0 3.9l0 0.3l-1.6 3.3l-2.6-3.2l-1.1 2.7l2 3.3l-0.2 3l-0.7 2l2-0.1l2.2 0.2M1284.2 278.4l-3.7 0.7l1.8-3.4l0.1-4.2l-5.2-6.1l5.6 0.4l6.7-0.4l0 0.8l0 5.2M1284.2 278.4l-1.9-2.7l-5.1 0l3.3 3.4l0.4 2.3l-3.6 0l0.7 2.6l-0.5 2.1l-1.4 0.3l-3-0.4l-0.2-1.8l2.4-2.6l-1.9-3l3.8-2.9l-0.6-5l-4-5l-5.8 4.3l-1.9 5l-1 3.6l-3.4-0.9l-3.1-0.4l-4.1 0.4l0.9 3.2l-2.9-0.6l-2.2 2.7l-1.5 1.9l-1.2-1.9l-1.2 2.3l-1.6-0.7l-2.2 0.5l3.8 0.2l-1.1-2.3l2.3 0l-0.7-2.9l-2.6-2.6l3.5-0.1l-1.9-3.2l-1.6 3.3l-3.9-0.4l1.7-3l3.2-4.4l-4.9-0.8l1.7 5.2l-3.8-0.8l-3.7-3.9l-5.6-5.1l0.5 4.6l5.1 0.5l-0.9 4.4l3.9 3.5l0.5 2.1l-3.5 0.4l-2.2 0.1l0.6-3.1l4.6 0.5l0.7-4l2.1 3.8l0.8 3.3l2.1-0.1l-1 2.2l2.5 2.1l0.5-1.6l-2-2.7l1-2.8l-2.2-3.4l3.8 0.1l4.8-0.3l-0.2 3.8l2 2.6l0.1 2.7l1.1 2.7l1.6-2.6l0.1-2.2l2.6 2.4l0.5-2.5l0.1-3.5l-0.3-3.3l-4-4.8l-4.3 0.4l-2.4-5.1l6.1-0.3l-3.7 5.4l-4.7 0.1l2.3-5.2l-0.2-7.8l7.6 1.9l2-9.3l13.5 1.7l-0.6 6.8l-3.8 7.4l1.9 4.8l2.4 4.7l-2.5 3.5l-1.8-3.2l4.3-0.3l4.8 0.2l2.6-4.2l-3.6-0.1l-6.2-0.6l-3.1-0.5l-5.6-5.7l-5 5.4l-0.1 4.8l4.4 3.3l-3.2 3.6l3.1-0.1l3.5-0.2l-0.3-2.9l1-3.4l-3.5-3.4l-4.9-1.7l-3.6 4.7l3.5 0.1l0.3 3.7l-3.8-3.8l-0.7-4.3l-4.1 4.6l-0.6-4.5l-2.3-6.2l-6.3-7.5l-0.3 7.7l4 5.2l2.6-5.4l4.6 1M1284.2 278.4l3.7 0.5l1.6 3.1l-0.4 0.2l-2.9-0.5l-2.1 0.5l-3.2-0.8l-2.9-2.6l-0.7 2.6l-2 0.2l-3.5 0l1.1 2.6l-3.3-0.7l-0.7 2.2l2.1 0.8l1.9-2.3l2.4 0l2.7-0.2l2.2 0.2l3.2 0.6l-2.5-3.4M1287.9 278.9l1.2 3.3l0.4 2.3l0-2.5l0-2.9M1221.5 395.3l-2.7 3l0.7 2l-1.9-0.1l-3 0.3l1.6-2.8l-1.3-2.4l3.1-3.4l0.3 2.9l3.2 0.5l3.1 0.1l3.1-2.7l0.6-4.3l-4.7 3.4l-0.5-3.6l-1.7 3.7l-1.4-3.7l3.2-4.5l3.4-6l0.8-6.5l6.5 6.9l-0.9 5.3l5.1 0.8l-1.9 3.8l3.9 0l-2-3.8l4.6 0l-2.3-5.8l-4.9-6.6l-1.6 6.3l6.5 0.3l8 0.9l-5.2-9.4l11.6 2.2l4.5 5.8l5.3 6.9l1.8-5.9l-7.1-1l-4.6 1.3l4.8 5.8l5.1-0.2l4.9 0.1l-3.1-6l-2.6-8.6l6.1 1.5l11.3-1.9l2.5-7.2l5.5-1.7l0 10.4l0 0.1l0 7.3l-4.4 4.8l3.3 1.3l-4.7 4.7l1.4-6l4.3 0.9l0 4.4l-0.7 3.2l0.7 0.5l-1.8 3.4l-3.2 0.1l-3 2.2l0.2-2.9l0.9-2.7l1.9 3.4l2-3.2l-3.9-0.2l1.2-3.1l4.2 0.1l0.8 2.4l-2.3 0.8l-2.7-3.3l-4-4.6l-5.4-1.5l6.9-5.2l3.9 5.3l-5.4 1.4l-0.5 4l-0.1 3.9l-0.6 2.6l0.4 2.3l-3.3 0.4l-0.5-2.3l-2.2 2.7l-2.2 1.9l-2.3 0.1l-1.6-0.1l-3.4 0.2l-2.2-0.1l-1.7-2.7l-2.6-2.5l2.7-0.5l-3-3.2l-4-2.6l0.4-5.5l-4.3-4.3l-1 5.6l-2.8 3.9l1.2 3.8l1.3 2.8l1.4 3.1l-2.1 1.5l-0.4-2.4l-2.3 0.8l-3.6 0.1l-2-0.8l1.2 3l2.8 0l2.4-0.6l1.5-2.5l-1.7-2.7l-4.3 0l0.1 3.6l2 2.2l1.6-2.3l-3.7-3.5l1.8-2.6l2.5 2.6l2.8 0.5l-1.1 2.2l2.5 0.9l0.8-2.8l3.2 0.1l-3.2-2.9l0 2.8l1.5 2.2l1.2 2.4l1.8 0.5l3-0.1l2.3 0.1l1.8-0.2l1.1-2.3l1.1 2.4l1.9-2.9l0.6-1.8l-2-3.6l2-4.3l-3.7 0.4l2.7-3.7l1 3.3l2 4l-2 3.9l3.4-0.9l1.1 3.4l2.1-2.7l0.4 2.8l0.3 1.9l2.4-2.3l-2.7 0.4l-2.5-0.1l-2.5-0.7l-2-1.8l-2.8-1l-2.8-2.1l3.6-0.5l-0.8 2.6l2.2 2.8l-3 0.5l0.8-3.3l-3.5-0.1l0.7-2l-2.3-3.9l-5-5.4l-2.9 5.2l2.9 3.5l3.6-0.6l3.7 1.2l1.9-4.4l1.7 3.9l4-0.3l2.8-4l3.6-4.6l-0.7-5.2l-3.8 6.6l0.9 3.2l0.8 3.8l1 3.9l-3.2-0.7l2.2-3.2l3.5-2.5l4.2-0.4l3.3 3.7l-3.4 0.2l-4.3-0.7l-3.3-0.3l-3.6 0.2l1.4 3l-1.4 2.7l-1.1 2.7l-1.5-2.7l2.6 0l0.5 2.8l2-2.1l0.3 2l2.5 0l3.2 0.3l2.5-3l2.5 0.5l2.9 0.5l1.3 1.6l2.5-0.1l0.9-2l0.4 2.4l0-2.3l0-2.7l-0.4 2.6l-2.1-0.2l1.2 2.2l1.3 0.4l-3.8-0.3l-2 0.3l-2.2-2.4l-0.6 1.9l-2 0.4l0.1-2.8l1.9 2.4l2.8 0.5l0.7-1.9l0.1-2.7l-2.8-0.7l-3.1 0.1l-2.9 2.7l0.8 2.6l2.4-0.2M1221.5 395.3l-0.1 2.9l-2.6 0.1l-0.5-3.5l3.1-2.9l-3.4 0l-3.9 0.4l-2.8-4.8l-0.5 4.5l2.2 3l-3.8-0.2l-2.3-2.8l-1.3 3.6l3.1 2l-1.3 2.7l-2.2 0.2l0.4-2.6l-2.3 2.5l-0.9-3.1l-2.3 3.2l0.1-3.2l-2.5 0.9l-3.6-0.1l1.1 2.1l2.7-0.5l-0.2-1.5l1.7-3.1l-2 0.2l-3.5 0l-1.9 2l0-2.4l1.9 0.4l0.2 2.8l-2.1-0.5l1 2.5l-1-0.1l0-2.4l0-0.3l2.1 0.8l3.3-2.8l-1.6-3.3l-3.8-0.2l0-0.7l2.1-2.5l-2-4.8l5.9-1.2l1.3 5.4l0.5 4l3.3 3.1l-0.5-3.9l0.3-2.8l4.3-0.5l0.8-3.6l-5.1 4.1l-1.2-5.4l-3.7-0.4l-4-5l-1.9-7.6l0 7.6l1.9 0l7.3-0.8l-0.8-5.3l8-1.1l8.7 0.7l3.4 7.3l-1.9 6.2l-2.7 4l-4-5.7l6.7 1.7l4.5-0.9l-0.1 4.5l-3.1 0l-1.3-3.6l-5-6.9l3.5-6.6l-4.7-10.5l-6.5-16.4l16.4 2.2l-0.3-9.3l11.6-2l14.1 1.6l5.4-7.3l2.1-6.1l-7.6-0.2l-4.3 5.6l-1.7-5.1l-3.8 5.7l5.5-0.6l4.4 8l-3.1 8.8l14.2-8.3l5.7-6.9l7.1-5.4l-7.5-1.9l-0.2-4.7l-0.6-4.3l-3.5-3.7l-1.4-2.8l-2.6-0.9l-4.8 0.5l2.3-2.8l3.1-2l0.2-2.2l1.6-2.4l0.4 1.9l2.6 0.1l1 2.3l1 2.2l-1.3 3.6l2.1 3.1l2.7 4l-2.8 3.4l-5.3-1l-1.9-2.5l-0.8-5l-4.9-2.7l0.3 3.5l-3.7-0.4l-2.5-3.7l-4.9 0.5l-3.2-2.8l-0.7-2.9l2.1-2.4l-2.2-0.1l0.8-2.1l3.1 0.5l-1.7 1.7l1.1 2.5l-3.2-0.1l-2.3 2.5l-0.9-2.7l-2.2 2.9l3.1-0.2l-0.5 2.8l3.4-0.3l0.1-2.1l-3-0.4l2.9 2.5l-2.6 2.8l4 3.9l5.3-0.1l0.1-2.3l-4.1-0.7l-1.3 3.1l3 4.5l5.7-0.3l4.7 0.7l3.5 5.4l8.9-0.3l0.4 7.3l-9.3-7l3.4-6l5.5 5.7l8.1-3.5l-5.5-4.6l6.7-1l4.3 1.3l2.3-4.7l3 3.8l-5.3 0.9l5.1 3.4l-6.9-0.1l-3.7 1l-0.6 5.4l1.3 3.9l-3.1 7.3l9.6-5l2.7 6.3l6.5-7.7l0.6-5.4l-0.9-4.9l-1.4 4l-7.5 7.7l9.2-1.4l0.6 0.9l-7.1 6.8l7.1 1l0 10.1l-0.1 12.5M1221.5 395.3l2.9 2.2l0.4 2.9l-2.9-0.5l2.5-2.4l2.1 0.5l2.7 2.1l-1.7 0.5l-2.7-0.2l1.7-2.4l3.7-0.5l1.5-1.8l-3.1 0.1l2.8-4l2.5 3.8l1.6-4l-4.1 0.2l0-4.2l4.8 0.4l-0.7 3.6l3 0.4l3.3 0.3l-1.7-4.3l2.6-3.8l1.9 4.6l5.2 0l-2.4-3.9l5.3-1.3l6.8 1.4l-1.8 4l-5.4 0.1l-2.5-0.3l-0.5 4.1l3.4-0.6l-0.4-3.2M1221.5 395.3l-0.1-3.4l2.2-0.1l4.1 0.9l3.7-0.9l-3.1-3.4l0.1-4.1l3 3.3l1.6-4.2l-4.6 0.9l-5.2-0.6l-2.6-5.3l-6.9-0.7l-4.3 1.2l-0.9-8.5l-7.2 6.4l0.4 6.2l6.3 1.3l1.4-5.4l-8.1-2.1l-3.3 5.8l-5.9 0.8l1.9-5.8l6.5-6.1l-8.4-1.6l0 0.1l8.4 1.5l-0.7-10.6l12.7-0.3l-4 9.8l-8.7-9.5l6.2-16.7l4-7.5l10.2-7.3l-11-1.1l0.3-5.5l-7.1 4.3l6.8 1.2l0.8 8.4l12.1 0.4l11.4 10.4l1.3 12.9l12.1 1.2l13.9-3.1l11.6 2.7l-2.5 10.6l3.4 6.5l-6.9 0.6l3.5-7.1M1221.5 395.3l2.1-3.5l1 3.6l-0.2 2.1l-3 0.7l-1.9 2.1l2.4-0.4l-0.5-1.7M1192.4 321.7l4.8-0.2l2.4-4.9l-7.2 0.7l0-0.9l7.2 0.2l0.7-4.6l-5.3-0.3l-2.6 0.3l0.1-3.6l3.3-0.1l-3.3 0l0 0.1l2.5 3.3l0.8-3.4l-0.8-3l1.3-2.6l1 2.8l1-2.9l-1.7-3.1l-2.6 0.7l2.3 2.5l0.3-3.2l-2-1.5l-2.1-0.5l0 0.3l2.1 0.2l-2.1 1.8l0 2l0 0.5l0 2.8l0 3.2l2.5-3l2.3 0.2l3.8 2.8l-0.8 3.7l3.9-3.5l-2.6-3l3.9 0.1l3.5 3.9l3.1-3.6l1.2 3.7l2.3-3.9l3-2.6l-4-0.7l2.3-1.6l1.4-2.8l-2.7 0l-1.5-1.5l-1.9-0.5l0.3 2.1l-1.3 2.6l-0.7-2.1l1.7-2.6l-2.4 0.3l-2.6-0.3l-1.8 2.3l-0.1-2l1.9-0.3l-4.5-0.4l0.5 2.7l2.1-2l-2.6-0.7l-1.6 0.1l-1.1 2.2l2.2 1.7l-2.4-0.1l2 3l3.1-2.8l0.5-1.4l-2.2 0l-1 1.3l-0.4 2.9l3.7 3.1l3.8-3l2.1 0.6l-0.2-2.5l-1.9 1.9l-0.1 3.6l-0.2 3.3l-4.8-1l1.1 4.5l-5-1l-4.5-3.7l5.3 0l0.5-2.8l-4.3 0l-1.5 2.8M1192.4 321.7l0-4.4l4.8 4.2l-4.8 5.6l10 0l0.2-6.2l6.9 1.9l7.7-5.1l0.4 5.3l2.6 6.4l1.9 7.7l4.3-6.8l6-8l-3.7-5.1l-1.8 4.3l-6.7 7.9l6.2 0.9l7.3 4.8l-0.2 12.4l-10.1 12.2l-6.2 11.4l10.2 0.1l7.4-10.8l-11.4-0.7l-1-13.3l11.1 1.1l11.2-2l-11-10.4l4.2-5.8l-11.5 1l0.5-8.8l5.5 0.8l2.3-4.3l-6-0.8l5-4.5l-4.1-3.9l-0.4 4.2l-4.7 0.2l-3.2-3.5l4.1-0.3l1.7-2.8l2.5 2.2l-4.2 0.6l-2.6-3.6l1.6-3l3.8 0.6l-0.3-2.2l3.3-0.2l-0.7-2.3l-2.7-1.7l0.8 2.2l2.6 1.8l-0.2 3l-0.5 2.7l-2.3-3.3l3-2.4l2.3-2.4l2.1-1.7l0.7 1.9l0.1 2.5l-3.2-0.2l-2-0.1M1192.4 321.7l0 5.4l0 1l-0.1 8l3.8-1.8l-3.7-6.2l10-1l-6.3 7.2l-3.8 9.7l0 2.5l13.7-2.3l-13.7-0.2l0-7.9M1282.2 337.4l-6.8 10l-12 0.9l9 12.9l8.8 8.7l-7.9 8.4l7.6 0l0.3-8.4l8 1.5l-5.5-8.7l5.6-14.2l-13.9-1.1l8.3 15.3l-11.3-1.5l3-13.8l13.9 1.1l-7.1-11.1l-12.3-1.3l-11 1.1l4.5 11.1l6.5-12.2l-5.3-5.8l-11.4-0.9l-5.5-6.3l-0.6-5.9l-3.4-4.3l3.7 0.2l4.4 4.8l1.3-3.9l3.7 0.8l3.1-4.5l-3.9-0.5l-0.1-3.2l1.8-1.8l1.8-2.9l-0.8-2.3l1.9-2.1l2.4 0.2l2-0.1l-0.8 2.4l-1.2-2.3l-1.7 2l-1.8 2.2l0.5 2.6l-2.3 0.3l-4.3-0.5l-2.7-2.6l3.1 0.4l2.7 0.2l3-0.4l2.8 0.1l3.5-0.2l2.1 0.1l1.9 2.8l-0.6 2.6l-0.5 3.5l4.4 0.5l0.4 2.6l-4.8-3.1l-4.6 0.1l-4.2-0.6l2.1-2.5l3.8-0.4l1.3-2.4l-3.8-0.8l-3.3 0.3l2.3-2.5l1.9-2l-2.9-0.3l-0.7-2.2l-2.3 0.2l-2.7 0.1l-1.9-0.3l0 2.3l1.9-2l1.1 2.3l2.8 1.8M1279.1 304.7l-1.9 2.5l-0.8-2.6l2.7 0.1l3-1.5l-0.1-2.2l-2.6 1.5l-2.8-2.4l0.1 2.8l2.7-0.4l0.1-1.9l0-2.4l1.6 0.2l2.8 0.5l-0.1 1.4l2.4-1.2l1.8-0.4l-1.7 2l3.1 0.3l-0.9 2l0.9 0l-0.2 2.1l-2.8 0.1l-2.7 2.4l-0.3-2.3l1.4-2.9l-1-2.1l-2.7-1.9l-1.6 2.2l-2.9-0.5l-2.9-0.2l-1.1-1.9l1.7 0.5l-0.6 1.4l-2.5 0.4l-0.1 1.8l-1.8-1.5l-1.4-2.4l1.8 0l-0.4 2.4l-1.4 1.3l-1.2-2.2l1.2-1.5l-2.9-0.6l1.7 2.1l-2.5 0.3l1.6 1.8l0.9-2.1l2.6 0.9l1.9-0.3l2.1 2.1l0.2 2.8l2.9-0.6l-3.1-2.2l3.4 0.5l2.4 1.8l1.5 3.6l2.8-3l3-0.1l0.6 2.4l2.3 3.7l-3.3-0.4l-5.9-0.4l-4.1-0.1l1.2-3.2l-4.1 0.2l-3.3-2.7l1.3-2.6l2.4 3.1l3.7 2l3.4 1.1l-0.5 2.2l3.6-2.9l3.3 0l2.4 0.6l0-2.8l-2.4 2.2l-1 3.3l0.1 3.4l3.2-3l0.1 0l0 3.7l-1 4.4l-5.5-0.8l3.2-4.3l3.3 0.7l0 4.2l-1 0.2l-2.3-5.1l-3 0l-0.2 4.3l4.1 4.8l1.7 6.3M1279.1 304.7l0.3-2.2l2.7 0.7l2.7-0.8l3.7 0.6l-2.1 2.2l-1.6-2.8l1.5-1.7l3.1 0.1l-1.4-2.1l1.4 0.2l0 1.9l0 0.2l0 2l0 2.4l-0.2-0.3l-0.7-2.1l-2.2-2.3l-2.5-0.4l-1.8 0.7l-0.9-2.6M1279.1 304.7l4.3 0.6l-1.3-2.1M1191.7 445.7l5.8 1.4l5.3 8.5l3.9-10.2l-7.1-5.7l-7.8-0.4l3.2-4.8l-3.2-4.3l5.4 0.3l-2.2 4l-3.2-0.4M1191.7 445.7l0.1-5.3l5.7 6.7l9.2-1.7l7-5.3l-6.1-5.9l-6.2-4.6l1.5-4.1l-4.2-2.2l-2.7-3.9l-3.2 0.1l-0.9-1.6l0-0.5l1.5-2.2l-1.5-2l0-0.4l2.2 0.1l1.7 2l-2.4 0.3l-1.5 0M1191.7 445.7l0 7.1l0 1l-0.1 10.3l5.7-1.7l-5.7 14.5l0-12.8M1192.7 267.3l0 4.3l3.2 0.4l-3.3 3.2l0 3l0 0.5l0.8 2.3l2.3-2.2l2.6-0.1M1192.7 267.3l0-4.4l2.3 4.8l-2.3 3.9l0 0.2l3.2 0.2l-0.9-4.3l5.1 3.5l4.6 0.2l-3.5 4.3l-3.1-0.1l-3.4 0.2l-2.1-0.6l0.1-3.4M1192.7 267.3l2.3 0.4l5.5 0l5.5-4.9l4.5 4.8l2.3 4.2l1.8-2.7l-4.1-1.5l-2.5 4.5l3.4 4.1l1.4-4.4l1.6 4.1l3.3-2.8l-4.9-1.3l-4.8 0.3l-3.7 3.9l0.3 2.8l-3.7-0.5l-1.7 2.8l2.1-0.4l1 2.3l-2.3 0l1.3-2.3l2.9 1l2.9 0l2-0.7l0.8-2.3l1.8 3l-0.7 2.3l2.5-0.1l-1.8-2.2l2.8-0.3l1.4-2.1l2.7-0.3l0.4-3.1l-4.6 0l-1.2 2.6l1.3 2.9l-1 2.5l1.8 0l3.1 0.3l1.5-2.4l2.6-2l2.1-0.7l2.8 0l3.8 0.8l-0.9 1.9l1.1 3l2.5 0.2l1.6-2.9l-2.5 0.3l-2.7-0.6l-0.6 2.4l1.7 0.6l1.6-2.4l0.4-2.6l2.1 2.3l1.4-2.7l3.1 1l-1.2 2.1l2.3 0l3 0.5l1.6-2.9l0.9-2.7l2.7 0.3M1195 267.7l4.9-5.9l-7.2 1.1l0-1l5.4-5.9l6-8.4l10.7-12.2l6.1-11.6l7.9 12.3l5.2 13.2l9.2-15.7l13.9 1.4l5-12.1l5.2 15.8l12.1 9.5l10.2 1.9l0 9.3l-0.1 6l-3.3-4.9l-6.8-12.3l-10.1 2.8l7.1 8.2l3-11l10.2 0.2l0 1.7l-3.4 10.4l-3.4 5.3l6.7 0.4l-2.6 5.4l-4.5-0.1l0.4-5.7l-6.4-6.6l-3.8 6.5l4.6-0.3l-0.6 5.3l5.8 0.8l2.9 4.2l1.6-4.1l-4.1-5.8M1213.7 440.1l0.5 4.1l7.9 0.8l-1.3-4.6l8.9-2.1l7.7-0.1l4 5.9l1.2 7.5l9 2.7l7.8-8.5l6 0.1M1213.7 440.1l-7.7 0.2l-5.3-5.3l0.7-5.4l5.3-0.3l4.3-3.3l1 3.5l2 3.8l2.2-3.6l2.4 4.4l-4.9 6l7.1 0.3l4.6-5.4l-4.7-6.2l-4.5 0.9l2.5-3.7l-4.2-0.7l2.8-2l-4-1.1l2.8-2.7l3.9 0.4l0.9 2.6l-2.2 3.5l5-0.1M1213.7 440.1l0.3-6.8l-6.4 0.9l-1.6 6.1l0.7 5.1l8.5 7.1l-1-8.3l6.6-3.8l-2.2-6.3l-4.6-0.8M1289.4 311.3l0-3.1l-0.1 3.1l0.1 3.7M1230.2 296.5l-2.4 0.5l-2.5 1.6l0.2 2.8l-3-0.3l-2.4-0.4l0.6-2.4l0.6-1.5l1.6 1.9l0.9-1.9l1.5 1.8l2.6 2.6l-2.4 0.2l-1.1 1.4l2.7 3.8l-4.3-0.8l-1.5 3.9l-2.9-0.5l-0.2 3.2l-4.8 1l-5.1-0.8l-3 0.4l-1.7 3.4l6.3 0.8l-1.6-4.6l0.7-3.1l-3.7 3.5l4.6 4.2l7.3 0.5l1-5.3l6.3 0.8l-1.9 4l-4.4-4.8l-4.9-2.8l5.1-0.4l0.8-3.1l-3.6-0.4l-1-3.3l-2.5 3.5l3.5-0.2l2.8 3.5M1230.2 296.5l0.3 2.2l3-0.1l-1.1-2.1l3.2 0.4l1.5-0.2l1.4 2.2l1.9-0.2l1.4 2.3l2.1 3.2l4.1 0.2l-2.6-2.7l-2.4-2.6l1-2l1.8 2.7l0.6-2.7l2.4 2l-0.1-1.5l-2.3-0.5l-2.4 0l-1.5-0.2l0.5 2.2l-1.2 1.9l-0.2 3l-2-2.6l0.8-2.7l2.1-1.8l-2.3 0.3l0.2 1.5l2.6 0.4l2.8 0.7l-0.4 1.9l3.3 0.2l1.3 2.3l-2.1 2.2l3.2 0.7l-1.1-2.9l-2 0.2l0.7-2.5l0.1-2.8l2.2-1.8l0.4 2l-0.7 2.4l-1.9-2.6l-3 0.7l2.9 2.1l2-0.2l-0.7 2.5l3.4 0.1l0.4-2.2l2.9-2l-3-0.3l-2.3-0.5l2.3-1.8l-2.7-0.2l-2.3 0.3M1230.2 296.5l2.2 0l-1.9 2.2l-1.9 0.5l-3.3-0.6l0.9-1.7l-2.4-0.1l-2.5 0l-2.7-0.6l-2.3 0.4l-0.7 1.4l-1.9 2.1l-1.2-2l1.6-1.6l2.2 0.1l2 1.4l1.8 2.7l-3.2 0.1l-3.2-0.7l0.9 2.3l-3.4-1.7l-3-0.8l-3.3-0.2l-1.7-1.4l-2.1-2.6l-3.2-0.4l2.1 2.6l-2.1 0.1l-2-2.3l-1.3 2.3l3.3 0l1.9 1.5l0.2-1.6l3.2 0.4M1195.7 278.8l2.4-3.2l2-4.4l0.4-3.5l-0.6-5.9l6.1 1l-0.9 5.8l5.4-1l1.6-4.2l-6.3-6.7l7.4 0.5l8.3-0.9l1.5-8.7l11 1.7l14.3-1.9l5.5 11.2l8.2-0.4l-3.9 5.6l6.8 1.4l7.7 0.5M1195.7 278.8l-3.1-0.1l0 2.1l0.8 0.2l-0.8 2.1l0-2.3M1195.7 278.8l-3.1-0.6l2.1-2.4M1222.5 282l0-2.2l2.7 2.1l1.5 2.2l-1.7 0.3l-2.4-0.3l-2.6 0l-1.6 0.1l-0.7-2.3l-2.4 2l-0.8-2.5l3.2 0.5l2.2-0.1l0.1 2.3l2.5-2.1l0.1 2.1l2.6-2.2l2.2-2.8l-2.1-2l3.2 0l3.3-0.3l-3.5-4l-3.6-4.9l-0.1 5.7l0.7 3.5M1222.5 282l-2.6-0.2l-1.3-2.8l3.6-3l-3.2-0.1l-3.1 3.4l-1.5-3.4l-3 0.3l-1.5 2.5l-2.2-0.1l0.6-2.2l1.6 2.3l3.3-0.2l-1.5 3.2l-2.6-0.7l-0.3 3.1l2.2-0.1l-1.9-3l-1.4-2.4l-3.4-2.6l0.4-4.6l0.4-2.8l-4.6-0.9l4.2 3.7l3.3 0.7l0.3 4.3M1222.5 282l2.7-0.1l-0.2 2.5M1241.1 282.5l-1.1-2.1M1241.1 282.5l-2.2 2.1l2.5 0.5l-0.3-2.6M1247.4 313.1l4-2.5l4.6-0.8l2.5-2.3l-0.8-2.7l-1.2-2.5M1247.4 313.1l0.3-2.9l-3.9 0.4l-3.5-3.6l1.3-3l-4.5 0.2l2.5-2.8l2.2-0.4l3.6 0.7l-1.5 2.5l-3.6 2.8l-3.3-0.7l2.7 3.6l-5.3-0.8l-3.9-2.4l-0.9 2.1l4.8 0.3l-0.8-2.5l-2.6-2.6l-2.8-0.6l-2.7-2l-2.6-2.7l-2.2-0.4l-2.4-0.3l0.3-1.8l2.1 2.1l1.8 2.8l-0.4 2.5l2.3-0.8l-1.9-1.7l0.4-2.4l2.4-0.1M1247.4 313.1l-0.3 4.1M1247.4 313.1l5.7 0.9l2.9-4.2M1247.4 313.1l-3.6-2.5l1.4-4.1l2.8-2.1l-0.1 2l-0.2 3.8l3.4-3.1M1258.1 263.8l-0.1 7.1l-0.9 3.1l-4.1 0M1258.1 263.8l-4.3-5.2l-1.3 5.6l-6.3-7.5l-12.2-7.4l1.5 6.7l10.7 0.7l-4.4 6.8l-6.6 0.2l-1.8 5.7l-5.1 3.4l4.2 1l-0.7 3l1.6 3l3-2.5l2.8-0.2M1258.1 263.8l-5.6 0.4l0.6 5M1248.8 299.1l2.6 0.2M1234.8 360.4l0.7 11.4l7.7-1.9l3.7-8.3l7.9 10.5l-0.1 7.1l-6.3 0.1l-5.7 4.9l4.7 0.7M1234.8 360.4l9.9-14.9l16.1 13l3 11.8l-4.5 7.6l0.2 7.1l2.4 3.5l-4.2 0.5l-1.4 2.7l0.3 3.7l-0.1 2.3l2.7 0.2l-2.4 2.8l-0.3-3l-3 0.8l-2.7-0.6l-1.5 2.5l-2.9-0.4l-1.9 0.1l-0.8-1.7l0.6-3.5l1.5-2.3l3.5 0.3l-2.2 2.5l2.2 0.3M1234.8 360.4l8.4 9.5l-2.8 8.5l-2.3 5.8l-4.2-6.1l-7.3-0.4l-6 0.7l6.8-7.2l-4-11.5l-10.9 0.9l9.9-14.2l-12.4-9.7l-13.9-2.4l9.9 9.9M1259.6 285.7l0.1-2l2.5 1.6l2 0.4l2.5 0l2.2 0l-1.3-1.9l1.1-2.7l-3.2 0.4l-1.6-2.9l2.8-0.4l2 2.9l3.1 0.5l1.6-3l0.6-3.7l-1-4.3M1259.6 285.7l2.6-0.4l-0.5-2.3l-0.9-2.4l1.9 0.5l2.8 0.4l2.1 2.3l2-0.3l1.4 3l2.1-0.5l2.2-1.8l0.8 2.2M1259.6 285.7l-2.1-0.4l-2.8-0.1l2.1-1.9l0.7 2l2.2-1.6l1.1-3.1l3.1-2M1215.2 452.5l6.9-7.5l9.9-1.1l-2.3-5.6l2-5.3l-6.3 2l-0.1-5.4l-4.6-0.8l-2.1 5.3l6.8 0.9l4.3 3.3l-7.6 6.7l6.2 9.2l-5 9.7l-8.1-11.4l-4.1 9.4l5.2 16.4l7.8 11.6l-8 9.8l8.1 14.8l-13 1.2l7.2 11.1l-11.5 3.3l-9.2-14.1l-6.4 12.1l0 1.3l7.9 13.5l-8.1 10.8l0 2.4l9.7 10.8l10.9 0.1l-6.8 11.4l-4.1-11.5l2.2-13.6l-3.8-10.4l-8-2l0.1-11.5l15.6 0.7l-7.7 12.8l13.6-2.7l5.9 10.8l7.4-11.6l-13.3 0.8l5.6-13.4l5.8-12.3l15.4-0.2l11.5-1.8l-1.6-10.9l14.3-0.4l5.4 10.5l7.9 14.1l6.7 13l-10.7 14.4l-7.9 11.8l-9.9-0.4l-10.6-15.1l-7.7 16.5l-5.6-15.3l-12.7 0.3l-15.7 2.3l-11.9 0.4l0.1-12.8M1253.1 314l-1.7-3.4M1282.3 275.7l3 0M1284.6 423.1l0-3.3l3.2-0.2l1.2 0.4l0-2.4l0 0.4l-3.4-0.7l-1.9 0.1l-2.5 3l3.4-0.6l-2 2.8l0 3.2l4.5 0.5l1.9-3.5l-4.4 0.3l2.5 3.2l1.9-0.4M1284.6 423.1l3.2-3.5l1.2 2.6l0-2.2l0-2l-1.2 1.6l-2.2-2.3l2.4-2.2l1 0.3l0-1.9l-1 1.6l1 2.5l-3.4-0.3l0-2.2l-1.3-1.4l-2.7-0.4l-1.9 2.1l2.8-0.3l-2.6 2.1l-2.3 2.9l-2.5 0.1l2-2.1l2.8-0.9l-1.8-1.8l-1 2.7l-1.8-0.3l-3.4-0.2l3.3-2.3l-3.2 0.3M1284.6 423.1l-2 2.7l-4.5-0.2M1224.7 267.9l3.6 1l0 3.9M1242.1 422.4l3.1 4l4 2.8l3.4-3.9l5 0.3l4.1 0.4l-1.2 4.2l-2.9-4.6l-1.7 4.3l-3.3-4.6l3.4-2.5l1.6 2.8l2.2-3.1l4.7 0.2l-3.6-2.6l-0.8-2.2l-0.2-2.4l-1.3-1.9l-2.1 1.8l-2.1 2.4l3.1-0.1l0.2 1.8l-3.3 0.7l0-2.4l0-2.8l0.1-1.8l-2.9-0.2l0.9 2.5l2-2.3l1.8 0.4l-1.9 1.4l2.1 0.4l-0.2-1.8l2.3 0l2.5-0.3l1.4 2l-2.4 2.6l2.9 0l1.3 1.8l0.2 3l3.3-0.4l1.7 3.3M1242.1 422.4l-3.1 0l-0.6-2.2l2.2-2.9l1-2l-2.1-0.2l1.1 2.2l2.9 0.2l2.5 2.3l0.5-2l0-2.1l-1.6-2l-1.9-0.1l-2.8 0l-0.7 1.5l-2 2.3l-3.2-0.2l-0.1-1.5l-2.3 1.6l-3.4 0.3l-2.3 0.3l-2.8-0.7l0.6-2l2.5-0.1l-0.3 2.8M1242.1 422.4l3.9 0.3l0-2.9l2.7-1.8l1.2-2.7l2 2.1l-3.2 0.6l-2.2-0.2l-3-0.3l1.1-2l0.3-1.8l2.6-0.6l2.4 2.2l-3.4 0.4l1-2.6l2.4 0.1l1.7-0.2l-1.7 2.3l2.6 0.2l1.9-0.5M1246 422.7l-3.8-2.4l-3.8-0.1l-3.3 2.1M1246 422.7l3.2 3.3l0 3.2l6.7 0.7M1246 422.7l3.2-2.8l0.5 2.8l2.9 2.6l0.9-2.5l-1.7-3.2l2.6 0.6M1205.6 302.2l-3.8 0.3l-3.5 0.1l3.3 2.9l0.2-3M1205.6 302.2l3.7 0.4l-1.1-2.7l0.2-1.5l1.4-2.1l0.7 2.3l-2.3 1.3l-2.8-1.6l3 0.1l2.1 0.2l2-0.5l3.1-0.1l1.3 2.8l1.7 2.3l3.5 0.5l-2-2.9l-1.5 2.4l0.6 3l2.1 3.6l-3.1 2.7M1205.6 302.2l-0.1 3.4l3.7 0.6l2.2-3l0.7 2.7l-2.9 0.3M1205.6 302.2l-0.7-2.5l-2.7-0.1M1205.6 302.2l2.6-2.3M1274.8 395.9l-0.3-3.7l0.2-2.8l-0.7-5.9l-4.5 1.4l-3.9 3.2l4.8 0l4.3 1.3l4.7-4.4l1.5-6.7l3.6-0.5l4.7-6.3l-8-1.6l3.3 7.9l4.7 1l-0.1 5.7l-1 0.4l-0.5 4.8l-1.5 3.2l1.2 3.1l1.8-0.3l0-3.1l-3 0.3M1274.8 395.9l-2.6-0.1l2.3-3.6l3.7 3.3l-3.4 0.4M1287.7 284.2l1.8 0.3M1287.7 284.2l-1.7 0.5l-1.9-2.5M1287.7 284.2l1.4-2M1249.9 413.2l0 2.1M1206.8 220.2l4.3-12.1l-10.3-0.8l8.9-13.1l1.4 13.9l9.8 15.7l13.4-1.7l12.6 2.5l-2.5-15.7l3.9-9l-14.8-2.8l-3.1-11.3l-13.9-4.2l1.6 15.2l-7 11.3l16.3 1.7l6.1-12.7l10.4-14.1l4.4-9.9l-8.8-12.6l-14.6-4.1l10.3-11.2l-16.4-1.1l-9 0.3l5.9 12.6l2.2 12.1l12.5 16.7l13.5-2.8l-8.5-12.1l-17.5-1.8l7-12.7l10.5 14.5l12.9 2.2l5.3-15.3l-3.2-7.9l-15.2-4.7l4.3 15.3l10.9-10.6l-8.4-15.4l9.5-12.2l10.1 0.8l13.2 1.1l-2.7 10.2l9.2 0.7l-3 14.3l11.7-11.4l-2.7-12.7l-12.5-1.1l6.5 10.9l8.7 2.9l-0.1 12.4l-2 2.2l-4.9 10.6l-4.5 11.8l-11.1-12.2l-5.3-14l-5-13.3l-5.6-13.2l-14.2-1.2l-18.5-1.5l6.7 13.4l-6.7 11.1l-3.1 12.9l-12.5-2.9l-9.8-9.6l-0.1 11.4l10.6 12.5l-10.7 0.3l0-1.7l0.1-11.1l9.9-1.8l6.6-9.7l-10.4-16l-6 1.9l0 12.8l16.4 1.3l3.1-14.2l5.9 13.9l6.1 12.3l-9.2 0.6l-11.8 11.4l-0.7-14.3M1206.8 220.2l-13.9 1.8l0-2.1l13.9 0.3l-6-12.9l-7.8-0.2l0.1-12.8l16.6-0.1l6.8-12.6l-16.7-0.6l-6.6-12.3l0 12.8l-0.1 11l6.7-11.5l9.9 13.2l8.4 2.6l12.3-11l5-14.9l4.1-10.4l14.1-2.7l13.8 5l15.6 0.4l6.9-0.3l0-12.5l-11.6-1l-16.2-0.6l-8.5 9l7.5 14.8l6.7 12.1l16.5 1.4l-11.5 13.1l-1.9 11.1l-16.1-1.8l-10.4 0.4l-10.1 13.2l-6.9-12.3l-9.3-13l15.4 0.3l10.9 11.8l-17 0.9l-6.5 14l-14.1-3.6l8 15.2l-12 0l-9.9-2.7l-0.1 12.8l10-10.1l-9.9-13.4l0 10.7M1206.8 220.2l-4 15.2l1.3 12.2l1.7 9.1l-5.9 5.1l-1.8-5.8l-5.3-9.4l11.3 1l12.3-0.4l-3.2 10l-1.1 6.2l-6.1-0.6l-0.2-6.1l-7.7-0.7l-5.3-1l0-8.4l0-1.1l11.3 2.1l9.1 9.6l3.3 5.3l-1.9 6.6l4.8-1.2l-1.7 5.2l-3.1-4l-2.5-5.7l4.4-0.9l6.5 0.7l5.7-7l5.3-6.9M1248.7 418l3.1 1.6l2.6-1.8l-1.9-2.3l-0.6 1.9M1248.7 418l-2.2-2.3l-1.9-0.2l-1.6-1.9l-1.4 1.7l3 0.2l1.9 2.3M1248.7 418l0.5 1.9l2.6-0.3M1249.2 419.9l-3.2-0.1l-3.8 0.5M1195.8 392l3.5-4l3.3 3.2l4.3 0.8l0.3-4.1l4.1-0.4l4.7 1.1l2 3.3l2-3.7l-4 0.4l-1.9 3.7l-1.1 2.7l1.9 0.3l-0.8-3l-3.3-0.3l-1.6 2.8l-0.5 2.8l1.9 2.3l1.5-0.1l2.5 0.7l-1.5-3.2l3.1 0.4l1.4 2.5l1.2-1.9l-2.6-0.6l2.1-2.9l-3.4 0.5l-1.8 2l-0.1-2.3l-2.5 2.5l-1.8 0.1l-3.1 0.3l0-2.3l-2.5-0.5l-0.7 2.2l3.2-1.7l3.6-0.8l1.3 2.7l0.1 2.4l-3.2 0.4l-1.8-2.4l-3.2-0.6l-2.2 0l2.9-2.2l3.8-3.1l3.9 0l-3.6-4.1M1195.8 392l-1.9 3.3l-1.9-3.5l0 3.1M1195.8 392l4 0l2.8-0.8M1195.8 392l-3.8-0.9l0-3.1l0.1-4.2l0-0.4l0-5.8M1195.8 392l-1.7-3.4l-2.1-0.6M1277.6 420.1l-0.5-2l-1.9-2.8l-2.5-2l-2 0.2l-0.7 2l-0.9 2.1l-0.8 2.4l-0.5 2.3l3.4 0l-0.5-2.1M1231.7 400.3l-2.5-0.2l1-2.6l-1.6-1.7l-2.1 2.2l-1.9-2.6l4 0.4l-0.9-3.1M1231.7 400.3l1-2.6l2.7 0.6l-1.4 2.3l3.1 0l-1.7-2.3l-1.5-2.7l3-0.2l1.2 2.3l-1 2.9l2.2 0.1l0.8-2.2M1231.7 400.3l2.3 0.3l-1.3-2.9l-1-2l-0.3-3.9M1231.7 400.3l-1.5-2.8l2.5 0.2l1.2-2.1l-2.2 0.1M1231.7 400.3l-4.2 0.3l-1-2.6M1251.6 454.3l13-0.3l13.1-2.6l6.5-4.7l2.4 5M1251.6 454.3l-2.7-8.9l-5.2-6.6l-6.3-0.6l-5.7-5.2l0-4l5.1-3M1251.6 454.3l13.7 7.2M1202.9 425.5l3.7 0.9M1202.9 425.5l3.8 3.8l0.9 4.9l-6.9 0.8l-1.1 4.7l-4.6-5.2l5.7 0.5l-3.5-4.5l0.5-4.1l-2.8-3.6l-2.1-3.3l1.4-1.7l1.8 1.6l-1.1 3.4l-3.1-0.1l0.1-2.8l0-2l2.3-0.1l1.6-2.9l2.1 0.2l3.4 0.5l2.2 1.8l-0.3-2.1l2.8-0.1l-2.2-1.9l-3-0.3l2.4 2.3l2.5 2l3.2 0.5l1.4 2.3l1.1-2.6l3.3 0l3.3 0.1l-2.2-2.7l-1-2l-1.4 2.1l1.3 2.5l1.1-2.6l-2.4 0.1l-0.2-1.7l-2.9 0.2l0.3 1.5l-1.7 2.8l-0.8-2.3l2.5-0.5l0.8 2.5l1.1 2.3l2.2-2.3l1.4 2l1.9-1.9l2.2 0.3l2 2l2.1 2.7M1202.9 425.5l-0.4-2.3M1202.9 425.5l-5.2 0.9l-3.3-1.1l-2.6 0.6M1202.9 425.5l4.1-2.8l-0.1-2.7l3.4 0.1l0 2.6l0.7 3.3l3.5-0.7l1.7 4.4l-4.2-0.2l-4.4 4.7M1207 422.7l-3.1-2.6l-0.4-2.7M1284.8 302.4l-2.8-1.4l-2.5-0.4l-2.9-2l2.9-0.4M1278.5 325.2l1 5.9l-6.5-2.3l-8.4 1.5M1278.5 325.2l-2.5-6.7l1.8-3.3l-1.8-4.8l-2.9-3l-3.9-0.1l-3.4 0.1l-1.7 3.5l-0.7 3.1l-6.6 0.8l-5 3.1l-4.1 5.2l-6.3-5.6l-6.7 0.5l-1-5.3l-4.5 0.3l-3.8-3.6l-0.9 3.8l4.2 4l-6.1 0l-5.4 0.5l-3.8-4.3l-4.4-3.9l4.3 0.1l0.1 3.8l-3.5 3.8l-0.4 5.6l8.1 0.2l9.3-1.5l-4.3-4.3l-5 5.8l-8.4 5.3M1278.5 325.2l-6.2-5.7l1.2-5.6l2.5-3.5l-2.9 0.9l-3.9-4l-2.1-2.3l-1.3-3.2l-2.5 2.4l2.5 3.2l2.9 3.4l-1.9 4.1l-3.4-0.9l-4.7 3.3l-6.9 0.6M1278.5 325.2l8.5-1.8l2.3 0.9l0 6.3l0 7.8M1278.5 325.2l-5.5 3.6M1278.5 325.2l-6.8-0.3M1278.5 325.2l4.4-6.6M1228.7 317.2l0.5-4.2M1274.4 430.1l-1.5 3.2M1274.4 430.1l4.4-0.2l4.5-0.8l3.8-2.8M1274.4 430.1l4.5 2.8l-5.4 6.7M1278.9 432.9l2.3 7.3l7.8-0.7l-4.8 7.2l-9.6-1l6.6-5.5M1228.5 417.6l0.7 1.9l-2.9 0.2M1279.9 417.2l-0.2-1.8l-2.1-1.7l2.4-0.5l1.6 0.1l0.9 1.8l1.2 2.3l1.9-2.3l-3.1 0l1.8-1.4l2.5-0.2l1.2 1.6l-2.4 0l1.2-1.6l2.2 0l-2.2 0M1279.9 417.2l1.3 3.2l1.4 2.2l-5.2 0.7M1279.9 417.2l3.8 0.2l0.9 2.4l1-2.5M1247.7 323.1l-6 0.5l-0.3-6.1l2.3-4.6l-4-3l0.6-2.9M1284.5 377.8l0.3 5.8M1277.2 275.7l5.2-4.2M1277.6 413.7l-2.4-0.5l4.8 0l-0.3 2.2l-1.6 0M1273.3 302.4l0.4-2.5M1273.3 302.4l-2.2-0.3l-3.2-0.2l-0.8 3.1l2.7-0.3l3.7 0.5l-0.4 2.2l0 3.9M1273.3 302.4l3.3-2.3l-2.3-1.6l2.3 0.1l0 1.5M1271.2 422.3l3 0M1289.1 388.9l-1.5 0.8M1289.1 388.9l-1-4M1289.1 388.9l0 3.7M1253.4 304.3l2.5 2.3M1205.1 268.6l2.9 3.5M1228.2 303.4l-1.1 3.2l3.4 0.1l3.1-0.1M1194 300.2l-1.5 1.6l3.8 0.9l-3.8-0.4l2.5 3l-2.5-0.2M1194 300.2l-1.5-0.4l0-2M1194 300.2l0.6-2.2l-1.4-2.5l-0.7 0l0 2l0.7-2l2.7 0.2l2-0.4l0 2.7l-1.3 1.5l3.2 0l-1.5 3.1l-2 0.1M1248.4 379.3l6.4-7.2l9-1.8l8.6-9.1M1254.8 372.1l6-13.6l2.6-10.2l-18.7-2.8l2.2 16.1M1286.3 300.7l-0.1-1.6l-2.3-0.2M1200.3 312l3.3 4.4l-1 4.5l-5.4 0.6l5.2 5.6l7.6 9.6M1203.6 316.4l-4 0.2l-4.6-4.9l-2.6 4.7l0-4.4M1203.9 420.1l-4.2-0.2l-1 3.4l-3.8-0.5M1271.9 417.6l3.2 2.6M1289.6 259.4l-3.4 1.1l-9.8-1.3l0.8 6.2M1200.9 278.3l3.4-2.3M1200.9 278.3l0.4 2.4l3.3-1.9l2.5 2.9l1.7 2.4l-2.2-0.8l-2.8 0.1l-1.5-0.4l1.9-1.3l0.4-2.9l3.1-0.2l-0.6 3.1l-0.5 1.6l-2.4-1.6l-0.4 1.7M1200.9 278.3l0.3-2.6M1227.4 279.1l0.3 2.8M1206.9 530.1l-15.6-2l0-12.8l6.4 0.7l6.3-14.3l-12.6 0.8l0 0.1l-0.1 12.7M1289.3 324.3l0.1-5.1M1284.1 396.1l2.5 2l0.7-2.1l1.4 2.3l0.4 0.1M1195.2 400.2l-2.2-0.1l1.1-2M1195.2 400.2l2.5-2l-0.3-2.9l2.4-3.3l-0.4 3.1l0.8 2.2l-2.3 2.4l2.2 0.8l3.2-0.1l1.9 0.1M1195.2 400.2l4.9 0.3M1253.8 302.1l-0.1-2.3l-3 1.9M1233.5 298.6l-0.3 2.5M1233.5 298.6l2.9 2.7M1233.5 298.6l2.8 0.2M1249.5 273.9l-2.9 3.5l2.3 2.7l-2.5 2.9l2.7 0l0.7 2l-2.2-0.1l-2.4 0.4M1209.8 144.4l-16.4 0.1l0-1.4l6-14.7l-5.9-10.9l-0.1 12.8M1205.5 305.6l-1.3 2.9l-3.1-0.2M1226.2 296.9l1.6 0.1M1205.7 417.3l0.3-2.1l1.6-2.2l-1.7 0.3M1193 207.1l-0.1 12.8l7.9-12.6l-7.7-13l0-1.8l16.6 1.7M1199.8 360.9l-7.6-1.6l-0.1 10.6l7.7-9l-7.5-14.4l-0.1 12.8M1246.2 256.7l2.1-9.3l8.8-12.4l-10.2-10.4l-3.7 9l-14.4 2.5l-5.8 11.5l-6.6-0.4l-1.6-11.8l8.2 12.2l5.7 8.6l-7.2 0.1l-5.1-9.1M1222.2 276l2.4 3.1M1234.4 309.1l-0.7 3.6l4.7 0.3l-3.7 5l7 5.6l-9.3-1.3l5.5 7l9.9 7.4l11.1 0.5l-5.7-7.8l-9.8-0.7M1253.5 422.8l2.5 0l1.7-3.3l3.2 0.6l2.1-2.2l3.1-0.4l-1.1-2l-1-1.8l2.2 0.1l-1.2 1.7l-2 2.4l-0.5-2.6l-2.6 0.2l-2.4 2.2M1289 415.4l0 2.2M1252.7 383.6l2-4.4M1267.3 238.7l6.6-15.8l15.8 2.3l0-12.5l0.1-12.4l0-12.5l-1.5 12.8l-15.5-1.4l-10.6-1.3l-7.4 10.6l7.3 14.4l11.8 0l5.8 14.3l9.9 0.5l0.1-10.9l-15.8-3.9l11-8.9l4.8-1.3l-1.4-12.1l-3.4 13.4l4.8 11.2l0 1.6l-10 10.4l-0.3 11M1267.3 238.7l2 12.3l-7.3 7.2l-6.2-8.9l-7.5-1.9l-5.1-13.8l-8.9-11.5l-5.5 14l-14-0.7M1267.3 238.7l12.4-1.5l9.9 11.2l0-10.7M1267.3 238.7l-10.2-3.7l-1.3 14.3l11.5-10.6M1261.7 283l1-1.9M1257.7 419.5l2.1 3l1.1-2.4l3.4-0.4l4 0.3M1199.9 261.8l-7.2 0.1l0.1-6.9M1264.4 283.1l2.3 2.6l0.9-1.9l-3.2-0.7l-0.2 2.6M1264.4 283.1l-2.2 2.2M1264.4 283.1l1.1-1.6l1.2-3.3l3.8 0.1l2.9 0.3l4.6 0.2l2.5 0.3M1288.5 575l-9-10.3l9-1.9l-0.4-12.6l0.5-12.3l0 12.5M1241.4 444.1l-9.4-0.2l5.4-5.7M1274.7 389.4l4.1 3.5l2.5 2.5l-2.7 2.4M1249.8 388.8l-4 3.8l-4-0.3l2.8-3.5l-4.5-0.8l-1.6 4l-2.3-4l-3.2-4.6l-6.4-5.7l1.8 6.6l-5.3 3.9l5.2 0.2l3.1-0.8l4.1 4l1.4 3.8l-1.5 2.9l2.7-0.6l1.9-2.8l-1.5-2.9l-1.6 3.4l3.1-0.5M1221.4 415.4l0.3-2.5l2.1 0.6l0.2 1.7M1221.4 415.4l2 1.8l-1.2 2.7l-2.2 0l-2-2.3l0.8-2.6l-1.4-1.8l-2.6-0.3l-1.6 0.4l-2.6 1.7l2.8 0l-2 2.5l-2.5 0.3l-2 2.2M1221.4 415.4l-1.3-2.4l1.6-0.1M1259.4 445.8l5.8-6l-3.6-6l2.4-4.2l3.3 4.5l-2.1 5.7l-7.2-1M1199.6 316.6l3 4.3l7.3-3.7M1252.5 395.8l-1.7 2.1l-2.3 0.6l0.8 1.9l2.7-0.1l1.5-1.8l-1-2.7l4.1-0.4l-3.9-3.1l-0.2 3.5l4 1.9M1269.9 336.1l5.5 11.3M1268.7 429.4l-2.7-3.6l1.8-3.5M1199.3 388l3.6 0.4l4 3.6M1199.3 388l-5.2 0.6l3.9-6M1199.3 388l2.4-5l7.7-4.1l2.6 4l1.7-5.2l-5.2-7.3M1273.9 222.9l-3-12.6l-8.7-12.4l5.6-13.2l10.7-9.7l5.8 11.1l5.5 1.7l0-12.4l-6.8-12.2l-4.7-13.8l9.6 3.2l2 10.3l-0.1 12.5l-0.5 0.1l-6.3-12.3M1198.1 275.6l-2.2-3.6M1289.3 175.5l-10.8-0.5l-17.4-2.4l-5.8 15.5l-7-15l12.8-0.5l6.3-9.8l10.9-13.4l-6.2-15l-10.5-11.3l-4.5 12.4l-15.1-1l-16.5-1.5l11.8-11.9l4.7 13.4l-6.8 10.7l-9.7-12.2l-12.6-2.8l5.9-10.6l-8.7-0.7l-16.6-1.4M1289.3 175.5l0.5 12.3M1289.3 175.5l-5 10.6l4 14.5l1.5-0.3M1277.3 281.4l2.9 2.8l-0.2 2l-2-2.2l-2.7-2.4M1259.1 400.8l0.1-2.9l2.8 0.4l-2.7-3.4l-0.1 3M1241.9 461.8l2.7 14l-4.8 14l-7.3-11.7l12.1-2.3l6.9-11.1M1206.7 445.4l7.5-1.2M1207.2 296l1.2 2.4M1249.2 429.2l6.5 4.2M1259.7 283.7l-2.4-2.9l3.2-3.1l-3.4-3.7l4.4 0.3l3.4 0.7l-1.2-5.5l-5.7 1.4M1199.6 439.7l6.4 0.6M1228.7 256.2l6.8-0.2M1228.7 256.2l-0.9 8.1l7.4-0.6l-6.5-7.5M1280.6 308.3l3.1-0.7l2.3 3.3l-2.9 3.4M1277.1 525.8l4.5-10.1l7.1 7.6l0-10.3l0-12.5M1203 553.3l-11.9 2.8l0 10.4M1204 501.7l-5.3-10.9l-7.3 11.7l0.1-12.8M1226.5 415.1l2.4 0.4M1276.4 259.2l-7.7-1.4M1249.2 426l3.4-0.7M1264 318.3l8.3 1.2M1286.4 305.2l3 0.2M1241.6 304l2.3 0.2l1.3 2.3l2.7-0.1M1211.4 303.2l3.2-0.8M1285.3 400.4l1.3-2.3l-2.6 0.7M1194.1 412.9l-0.7 2.3l0.8 2.6M1276.7 302.9l-0.3 1.7M1233.4 269.4l5.8-0.5l-2.1 4.4l-4.6 0.5M1191.9 419.9l0.9-0.4l-1 3.2l2.6 2.6l-2.6 4.4l5.4 0.8M1193.2 181.5l6.6-0.5l4.1-12.6l-10.7-1.4M1202.8 455.6l8.3 6.3l-13.8 0.5l8.3 13.7M1276 498.7l-12.2 2.5l-12.7 11.3l18.1-0.8l12.4 4l-5.6-17l5.7-11.6l7.1-8.9l-16.6-0.1l9.7-16M1272.2 478.1l9.5 9l7.1 0.9M1223.8 413.5l3.2-0.5M1256.8 400.7l-3.3-2.2l0.3 2.3M1211.2 300.7l2.5-0.6M1273.5 313.9l2.5 4.6M1227.4 371.2l8.1 0.6M1228.6 299.2l-0.7 2M1277.2 307.2l2.9 3.3M1278.9 389l4.5 0.6M1199.4 395.1l3.7 0M1236.4 430.5l2.1 3.4M1254.2 280.9l-2.8 2.1l2.7 0.1M1281.3 135.1l6-9.8l2.7 0.2l0 12.5M1232.2 425.8l-4.2 0.2l-2.7 3.6l6.4 3.4M1256.7 300.1l2-0.5M1246.9 224.6l7.9-16.1l-6.5-8.6l13.9-2l-6.9-9.8l-11.4-5.1l4.4 16.9l7-11.8l12.5-3.4l5 14.5l12.1 14.8l-14-3.7l-8.8 12.6l-15.2 1.7M1232.8 577.3l-13.9 0.6l-7.2-10.9l7-16l8.7 13.1l5.4 13.2l13.9-0.6l8.6-12.1l-18.3 1.4l-4.2 11.3M1203.9 168.4l14 0.7l-1.4 12.5l-12.6-13.2M1249.5 501.6l-19.3 2.5l-6.1-14.2l15.7-0.1l11.3-2.2l-1.6 14M1216.5 262.5l5-6.2l1.5 6.9l-3.6 4.7l-2.9-5.4M1212.1 399.8l-1.6-2.3l2.6-0.2l-1 2.5M1222.1 303.6l-2.9 2.5l3.6-0.3l-0.7-2.2M1262.1 148.8l-11.7 1.1l6.7-14.4l15-1.1l-10 14.4M1212.9 130.2l-2.8-11.3l-10.7 9.5l13.5 1.8M1258.5 307.5l1.5-3l2 3.3l-3.5-0.3M1271.2 300.3l1.4-2.3l-2.9 0.2l1.5 2.1M1217.7 273.1l1.3 2.8l1.9-3l-3.2 0.2M1196 419.4l3.7 0.5l-2.7-2l-1 1.5M1236.5 284.4l2.3-1.9l0.1 2.1l-2.4-0.2M1211.3 387.5l-3.3-3.2l4-1.4l-0.7 4.6M1197.6 283.3l2.4-0.3l-0.8-1.9l-1.6 2.2" fill="none" stroke="#000" stroke-width="0.9"/><path d="M1128.5 284.2 1132.5 283.2 1136.6 284.5 1140.6 283.1 1144.7 284.7 1148.7 283.5 1152.7 284.7 1156.8 284.4 1160.8 284.5 1164.8 283.3 1168.9 284.9 1172.9 283.3 1177 284.5 1181 283.2 1185 284.9 1189.1 284.1 1193.1 284.5 1197.1 284.7 1201.2 284 1205.2 283.9 1209.2 284.3 1213.3 284.2 1217.3 283.5 1221.4 284.8 1225.4 283.1 1229.4 284.2 1233.5 284.1 1237.5 284.5 1241.5 284.3 1245.6 283.4 1249.6 283.7 1253.7 284.1 1257.7 283.1 1261.7 284.5 1265.8 284.6 1269.8 283.6 1273.8 283.6 1277.9 283.4 1281.9 283.9 1286 283.1 1290 284.2 L1290 299.1 1286 299.2 1281.9 298.1 1277.9 298 1273.8 299.6 1269.8 298.9 1265.8 298.1 1261.7 299.7 1257.7 299.6 1253.7 298.6 1249.6 299.5 1245.6 298.5 1241.5 298.9 1237.5 298.3 1233.5 299.4 1229.4 299.9 1225.4 299.2 1221.4 298.7 1217.3 299.8 1213.3 299.9 1209.2 299.6 1205.2 298.9 1201.2 300 1197.1 299.5 1193.1 299.3 1189.1 298.2 1185 299.8 1181 299.7 1177 298.5 1172.9 299.5 1168.9 298.1 1164.8 298.6 1160.8 298 1156.8 298.4 1152.7 299.7 1148.7 298.2 1144.7 299.3 1140.6 298.8 1136.6 298.2 1132.5 298.7 1128.5 299.3Z" fill="#000"/><path d="M1128.5 399.1 1132.5 400 1136.6 399.4 1140.6 400 1144.7 400.2 1148.7 399.6 1152.7 399.5 1156.8 399.4 1160.8 400.5 1164.8 400.1 1168.9 401 1172.9 399.7 1177 400.3 1181 399.4 1185 400.3 1189.1 400.8 1193.1 400.1 1197.1 399.6 1201.2 399.2 1205.2 399.6 1209.2 401 1213.3 400.5 1217.3 400.9 1221.4 399.9 1225.4 399 1229.4 399.7 1233.5 399.2 1237.5 399.2 1241.5 400.9 1245.6 400.1 1249.6 400.6 1253.7 400.6 1257.7 400.1 1261.7 399.3 1265.8 399.9 1269.8 400.9 1273.8 400.5 1277.9 399.2 1281.9 399.4 1286 400.2 1290 399.7 L1290 414.3 1286 414.8 1281.9 415.2 1277.9 415.8 1273.8 414.2 1269.8 414.1 1265.8 414.6 1261.7 414.2 1257.7 414.3 1253.7 415.3 1249.6 415 1245.6 414.2 1241.5 415.8 1237.5 415.6 1233.5 414.2 1229.4 415.4 1225.4 415.8 1221.4 415.3 1217.3 414.2 1213.3 414.9 1209.2 414.8 1205.2 414 1201.2 415.7 1197.1 414.1 1193.1 414.7 1189.1 415.6 1185 414.8 1181 414.2 1177 414.3 1172.9 414.5 1168.9 415.6 1164.8 415.8 1160.8 415.6 1156.8 415.2 1152.7 415.5 1148.7 415.2 1144.7 415.3 1140.6 414.7 1136.6 414.3 1132.5 414.6 1128.5 415.1Z" fill="#000"/><defs><linearGradient id="bandg" x1="0" y1="0" x2="0" y2="1"><stop offset="0" stop-color="#000" stop-opacity="0"/><stop offset="0.22" stop-color="#000" stop-opacity="0.3"/><stop offset="0.34" stop-color="#000" stop-opacity="0.75"/><stop offset="0.5" stop-color="#000" stop-opacity="1"/><stop offset="0.66" stop-color="#000" stop-opacity="0.75"/><stop offset="0.78" stop-color="#000" stop-opacity="0.3"/><stop offset="1" stop-color="#000" stop-opacity="0"/></linearGradient></defs><rect x="1128.5" y="269.5" width="161.5" height="44" fill="url(#bandg)"/><rect x="1128.5" y="385.5" width="161.5" height="44" fill="url(#bandg)"/><path d="M1128.5 572 L1131.5 127.5 L1193.5 117.5 L1290 125.5 L1288.5 575 L1191 579 Z M1193.5 117.5 L1191 579" fill="none" stroke="#000" stroke-width="2"/><path d="M1129.5 125.5h4v4h-4zM1137.2 124.2h4v4h-4zM1145 123h4v4h-4zM1152.8 121.8h4v4h-4zM1160.5 120.5h4v4h-4zM1168.2 119.2h4v4h-4zM1176 118h4v4h-4zM1183.8 116.8h4v4h-4zM1191.5 115.5h4v4h-4zM1191.5 115.5h4v4h-4zM1203.6 116.5h4v4h-4zM1215.6 117.5h4v4h-4zM1227.7 118.5h4v4h-4zM1239.8 119.5h4v4h-4zM1251.8 120.5h4v4h-4zM1263.9 121.5h4v4h-4zM1275.9 122.5h4v4h-4zM1288 123.5h4v4h-4zM1126.5 570h4v4h-4zM1134.3 570.9h4v4h-4zM1142.1 571.8h4v4h-4zM1149.9 572.6h4v4h-4zM1157.8 573.5h4v4h-4zM1165.6 574.4h4v4h-4zM1173.4 575.2h4v4h-4zM1181.2 576.1h4v4h-4zM1189 577h4v4h-4zM1189 577h4v4h-4zM1201.2 576.5h4v4h-4zM1213.4 576h4v4h-4zM1225.6 575.5h4v4h-4zM1237.8 575h4v4h-4zM1249.9 574.5h4v4h-4zM1262.1 574h4v4h-4zM1274.3 573.5h4v4h-4zM1286.5 573h4v4h-4zM1129.5 125.5h4v4h-4zM1129.4 139.4h4v4h-4zM1129.3 153.3h4v4h-4zM1129.2 167.2h4v4h-4zM1129.1 181.1h4v4h-4zM1129 195h4v4h-4zM1128.9 208.8h4v4h-4zM1128.8 222.7h4v4h-4zM1128.8 236.6h4v4h-4zM1128.7 250.5h4v4h-4zM1128.6 264.4h4v4h-4zM1128.3 306.1h4v4h-4zM1128.2 320h4v4h-4zM1128.1 333.9h4v4h-4zM1128 347.8h4v4h-4zM1127.9 361.6h4v4h-4zM1127.8 375.5h4v4h-4zM1127.7 389.4h4v4h-4zM1127.4 431.1h4v4h-4zM1127.3 445h4v4h-4zM1127.2 458.9h4v4h-4zM1127.2 472.8h4v4h-4zM1127.1 486.7h4v4h-4zM1127 500.5h4v4h-4zM1126.9 514.4h4v4h-4zM1126.8 528.3h4v4h-4zM1126.7 542.2h4v4h-4zM1126.6 556.1h4v4h-4zM1126.5 570h4v4h-4zM1191.5 115.5h4v4h-4zM1191.4 129.5h4v4h-4zM1191.3 143.5h4v4h-4zM1191.3 157.5h4v4h-4zM1191.2 171.4h4v4h-4zM1191.1 185.4h4v4h-4zM1191 199.4h4v4h-4zM1191 213.4h4v4h-4zM1190.9 227.4h4v4h-4zM1190.8 241.4h4v4h-4zM1190.7 255.3h4v4h-4zM1190.7 269.3h4v4h-4zM1190.4 311.3h4v4h-4zM1190.4 325.3h4v4h-4zM1190.3 339.3h4v4h-4zM1190.2 353.2h4v4h-4zM1190.1 367.2h4v4h-4zM1190.1 381.2h4v4h-4zM1189.8 423.2h4v4h-4zM1189.8 437.2h4v4h-4zM1189.7 451.1h4v4h-4zM1189.6 465.1h4v4h-4zM1189.5 479.1h4v4h-4zM1189.5 493.1h4v4h-4zM1189.4 507.1h4v4h-4zM1189.3 521.1h4v4h-4zM1189.2 535h4v4h-4zM1189.2 549h4v4h-4zM1189.1 563h4v4h-4zM1189 577h4v4h-4zM1288 123.5h4v4h-4zM1288 137.1h4v4h-4zM1287.9 150.7h4v4h-4zM1287.9 164.4h4v4h-4zM1287.8 178h4v4h-4zM1287.8 191.6h4v4h-4zM1287.7 205.2h4v4h-4zM1287.7 218.8h4v4h-4zM1287.6 232.5h4v4h-4zM1287.6 246.1h4v4h-4zM1287.5 259.7h4v4h-4zM1287.5 273.3h4v4h-4zM1287.4 314.2h4v4h-4zM1287.3 327.8h4v4h-4zM1287.3 341.4h4v4h-4zM1287.2 355.1h4v4h-4zM1287.2 368.7h4v4h-4zM1287.1 382.3h4v4h-4zM1287 423.2h4v4h-4zM1287 436.8h4v4h-4zM1286.9 450.4h4v4h-4zM1286.9 464h4v4h-4zM1286.8 477.7h4v4h-4zM1286.8 491.3h4v4h-4zM1286.7 504.9h4v4h-4zM1286.7 518.5h4v4h-4zM1286.6 532.1h4v4h-4zM1286.6 545.8h4v4h-4zM1286.5 559.4h4v4h-4zM1286.5 573h4v4h-4z" fill="#000"/><path d="M1189.5 293 V289.5 H1193" fill="none" stroke="#0000ff" stroke-width="1.2"/><path d="M1189.5 408 V404.5 H1193" fill="none" stroke="#0000ff" stroke-width="1.2"/><path d="M1123 128H1130M1291 126H1299M1123 239.5H1130M1291 237.5H1299M1123 351H1130M1291 349H1299M1123 463H1130M1291 461H1299M1123 576H1130M1291 574H1299" stroke="#aaa" stroke-width="1"/><text x="1146" y="100" font-family="Liberation Sans" font-size="15" letter-spacing="1" fill="#111">0</text><text x="1201" y="94" font-family="Liberation Sans" font-size="15" letter-spacing="1" fill="#111">-0.02</text><text x="1278" y="100" font-family="Liberation Sans" font-size="15" letter-spacing="1" fill="#111">0.02</text><text x="1315" y="132" font-family="Liberation Sans" font-size="15" letter-spacing="1" fill="#111">0.1</text><text x="1313" y="243.5" font-family="Liberation Sans" font-size="15" letter-spacing="1" fill="#111">0.05</text><text x="1313" y="355" font-family="Liberation Sans" font-size="15" letter-spacing="1" fill="#111">0</text><text x="1312" y="467" font-family="Liberation Sans" font-size="15" letter-spacing="1" fill="#111">-0.05</text><text x="1312" y="580" font-family="Liberation Sans" font-size="15" letter-spacing="1" fill="#111">-0.1</text><text x="1367" y="355" font-family="Liberation Sans" font-size="15" letter-spacing="1" fill="#111">m</text><path d="M943 575 V546" stroke="#4a80c2" stroke-width="2.2"/><path d="M943 537 L946.5 548 H939.5 Z" fill="#4a80c2"/><path d="M943 575 H964" stroke="#d81b5c" stroke-width="2.2"/><path d="M974 575.5 L963 571.5 V579.5 Z" fill="#d81b5c"/><path d="M943 575 H930" stroke="#4caf3a" stroke-width="2.2"/><path d="M922.5 575 L928 571 Q933 575 928 579 Z" fill="#4caf3a"/><text x="939" y="532" font-family="Liberation Sans" font-size="15" letter-spacing="1" fill="#111">z</text><text x="913" y="579" font-family="Liberation Sans" font-size="15" letter-spacing="1" fill="#111">y</text><text x="978" y="580" font-family="Liberation Sans" font-size="15" letter-spacing="1" fill="#111">x</text></svg>
<svg class="a" style="left:0;top:0;width:0;height:0"><defs><linearGradient id="bg1" x1="0" y1="0" x2="0" y2="1"><stop offset="0" stop-color="#bcdcf8"/><stop offset="0.5" stop-color="#8ec3f0"/><stop offset="1" stop-color="#cfe6fb"/></linearGradient></defs></svg><svg class="ic" style="left:900px;top:29px;width:15px;height:14px" viewBox="0 0 15 14"><circle cx="6" cy="6" r="5" fill="#fff" stroke="#3e6494" stroke-width="1.8"/><path d="M9.5 9.5 L14 14" stroke="#3e6494" stroke-width="2.4"/><path d="M6 3.3 V8.7 M3.3 6 H8.7" stroke="#3e6494" stroke-width="1.4"/></svg><svg class="ic" style="left:928px;top:29px;width:15px;height:14px" viewBox="0 0 15 14"><circle cx="6" cy="6" r="5" fill="#fff" stroke="#3e6494" stroke-width="1.8"/><path d="M9.5 9.5 L14 14" stroke="#3e6494" stroke-width="2.4"/><path d="M3.3 6 H8.7" stroke="#3e6494" stroke-width="1.4"/></svg><svg class="ic" style="left:954px;top:29px;width:19px;height:14px" viewBox="0 0 19 14"><rect x="0.5" y="5" width="7" height="8" fill="none" stroke="#4c6a94" stroke-width="0.9" stroke-dasharray="1.6 1"/><g transform="translate(4,0)"><circle cx="6" cy="6" r="5" fill="#fff" stroke="#3e6494" stroke-width="1.8"/><path d="M9.5 9.5 L14 14" stroke="#3e6494" stroke-width="2.4"/><path d="M6 3.3 V8.7 M3.3 6 H8.7" stroke="#3e6494" stroke-width="1.4"/></g></svg><svg class="ic" style="left:981px;top:33px;width:9px;height:5px" viewBox="0 0 9 5"><path d="M0 0 H9 L4.5 5 Z" fill="#1f1f1f"/></svg><svg class="ic" style="left:1003px;top:26px;width:19px;height:19px" viewBox="0 0 19 19"><rect x="4.5" y="4.5" width="10" height="10" fill="#fff" stroke="#555" stroke-width="1"/><path d="M9.5 6.5 V12.5 M6.5 9.5 H12.5" stroke="#444" stroke-width="1"/><path d="M9.5 0 L12 3 H7 Z M9.5 19 L12 16 H7 Z M0 9.5 L3 7 V12 Z M19 9.5 L16 7 V12 Z" fill="#4a80c0"/></svg><svg class="ic" style="left:1031px;top:26px;width:20px;height:20px" viewBox="0 0 20 20"><rect x="0.5" y="0.5" width="19" height="19" fill="#f6f6f6" stroke="#9a9a9a" stroke-width="1"/><path d="M10 2 V18 M2 10 H18" stroke="#8c8c8c" stroke-width="0.7"/><path d="M10 1.5 L12 4 H8 Z M10 18.5 L12 16 H8 Z M1.5 10 L4 8 V12 Z M18.5 10 L16 8 V12 Z" fill="#4a80c0"/></svg><div class="a" style="left:1060px;top:26px;width:1px;height:20px;background:#d4d4d4"></div><svg class="ic" style="left:1069px;top:28px;width:20px;height:16px" viewBox="0 0 20 16"><path d="M10 15 V1" stroke="#4a80c0" stroke-width="1.1"/><path d="M10 0 L11.5 3 H8.5 Z" fill="#4a80c0"/><path d="M10 15 L2 8" stroke="#4caf50" stroke-width="1.1"/><path d="M10 15 L19 10" stroke="#e0316a" stroke-width="1.1"/><path d="M20 9.5 L17 9 L18.5 12 Z" fill="#e0316a"/><path d="M1.5 7.5 L4.5 8 L3 10.5 Z" fill="#4caf50"/></svg><svg class="ic" style="left:1097px;top:33px;width:9px;height:5px" viewBox="0 0 9 5"><path d="M0 0 H9 L4.5 5 Z" fill="#1f1f1f"/></svg><svg class="ic" style="left:1120px;top:28px;width:18px;height:17px" viewBox="0 0 18 17"><path d="M1 16 V1" stroke="#4caf50" stroke-width="1.1"/><path d="M1 0 L2.6 3 H-0.6 Z" fill="#4caf50"/><path d="M1 15.5 H16" stroke="#d0343a" stroke-width="1.1"/><path d="M17.5 15.5 L14.5 13.8 V17.2 Z" fill="#d0343a"/><text x="4" y="9.5" font-family="Liberation Sans" font-size="8.5" fill="#505a66">xy</text></svg><svg class="ic" style="left:1149px;top:28px;width:18px;height:17px" viewBox="0 0 18 17"><path d="M1 16 V1" stroke="#3e6494" stroke-width="1.1"/><path d="M1 0 L2.6 3 H-0.6 Z" fill="#3e6494"/><path d="M1 15.5 H16" stroke="#4caf50" stroke-width="1.1"/><path d="M17.5 15.5 L14.5 13.8 V17.2 Z" fill="#4caf50"/><text x="4" y="9.5" font-family="Liberation Sans" font-size="8.5" fill="#505a66">yz</text></svg><svg class="ic" style="left:1177px;top:28px;width:18px;height:17px" viewBox="0 0 18 17"><path d="M1 16 V1" stroke="#3e6494" stroke-width="1.1"/><path d="M1 0 L2.6 3 H-0.6 Z" fill="#3e6494"/><path d="M1 15.5 H16" stroke="#d0343a" stroke-width="1.1"/><path d="M17.5 15.5 L14.5 13.8 V17.2 Z" fill="#d0343a"/><text x="4" y="9.5" font-family="Liberation Sans" font-size="8.5" fill="#505a66">xz</text></svg><svg class="ic" style="left:1205px;top:27px;width:17px;height:16px" viewBox="0 0 17 16"><rect x="0" y="0.5" width="7" height="15.5" fill="#4a80c0"/><path d="M7 5 L11 3 H15 Q17 8 15 13 H11 L7 11 Z" fill="#9dbfe6"/><path d="M11 3 V13 M14 3.5 V12.5" stroke="#6d98cc" stroke-width="0.8"/></svg><div class="a" style="left:1232px;top:26px;width:1px;height:20px;background:#d4d4d4"></div><svg class="ic" style="left:1244px;top:28px;width:15px;height:15px" viewBox="0 0 15 15"><path d="M11 2.5 A6 6 0 1 0 13.3 6" fill="none" stroke="#5d8fcf" stroke-width="1.3"/><path d="M9 0 L13.5 2.5 L9.5 5.5 Z" fill="#5d8fcf"/></svg><svg class="ic" style="left:1268px;top:33px;width:9px;height:5px" viewBox="0 0 9 5"><path d="M0 0 H9 L4.5 5 Z" fill="#1f1f1f"/></svg><div class="a" style="left:1292px;top:26px;width:1px;height:20px;background:#d4d4d4"></div><svg class="ic" style="left:1301px;top:28px;width:20px;height:15px" viewBox="0 0 20 15"><rect x="0.8" y="0.8" width="18.4" height="13.4" rx="4" fill="#dcdfe3" stroke="#3e5f8a" stroke-width="1.6"/><path d="M1 7.5 H19 M3.5 1 V14" stroke="#3e5f8a" stroke-width="1.4"/></svg><svg class="ic" style="left:1329px;top:33px;width:9px;height:5px" viewBox="0 0 9 5"><path d="M0 0 H9 L4.5 5 Z" fill="#1f1f1f"/></svg><div class="a" style="left:1352px;top:26px;width:1px;height:20px;background:#d4d4d4"></div><svg class="ic" style="left:1362px;top:28px;width:18px;height:13px" viewBox="0 0 18 13"><rect x="0.5" y="3" width="17" height="9.5" rx="4" fill="#ececec" stroke="#d0d0d0" stroke-width="0.8"/><rect x="5.5" y="0.5" width="7" height="5" fill="#fff" stroke="#c9c9c9" stroke-width="0.8"/><rect x="7" y="2" width="4" height="2" fill="#ccc"/></svg><svg class="ic" style="left:1389px;top:34px;width:9px;height:5px" viewBox="0 0 9 5"><path d="M0 0 H9 L4.5 5 Z" fill="#b7b7b7"/></svg><svg class="ic" style="left:1412px;top:28px;width:18px;height:13px" viewBox="0 0 18 13"><rect x="0.5" y="3" width="17" height="9.5" rx="4" fill="#9c9c9c"/><rect x="5.5" y="0.5" width="7" height="5" fill="#fff" stroke="#b5b5b5" stroke-width="0.8"/></svg><svg class="ic" style="left:1439px;top:34px;width:9px;height:5px" viewBox="0 0 9 5"><path d="M0 0 H9 L4.5 5 Z" fill="#b7b7b7"/></svg><svg class="ic" style="left:1463px;top:28px;width:18px;height:16px" viewBox="0 0 18 16"><rect x="0.5" y="0.5" width="16" height="15" fill="none" stroke="#d8d8d8" stroke-width="0.8" stroke-dasharray="1.2 1.2"/><rect x="3" y="3" width="10" height="8" fill="#c9c9c9"/><path d="M9 8 L17.5 16 M9 8 H13 M9 8 V12" stroke="#b0b0b0" stroke-width="1.4"/></svg><svg class="ic" style="left:1491px;top:27px;width:17px;height:18px" viewBox="0 0 17 18"><rect x="3" y="2" width="13" height="14" fill="none" stroke="#d8d8d8" stroke-width="0.8" stroke-dasharray="1.2 1.2"/><path d="M6 3.5 H14.5 V13 Z" fill="#c6c6c6"/><path d="M0.5 0 L6 10 M3 9 Q8 12 8 17 Q3 15 2 12 Z" fill="#ddd" stroke="#bbb" stroke-width="0.8"/></svg><div class="a" style="left:1518px;top:26px;width:1px;height:20px;background:#d4d4d4"></div><svg class="ic" style="left:898px;top:51px;width:18px;height:15px" viewBox="0 0 18 15"><path d="M1 7.5 Q9 0 17 7.5 Q9 15 1 7.5 Z" fill="#c6c6c6"/><circle cx="9" cy="7.5" r="2.5" fill="#e4e4e4"/><path d="M3 1 L15 14" stroke="#3e6494" stroke-width="1.3"/></svg><svg class="ic" style="left:925px;top:50px;width:21px;height:19px" viewBox="0 0 21 19"><path d="M12 1.5 A4.5 4.5 0 1 1 8.5 9" fill="none" stroke="#3e6494" stroke-width="1.5"/><path d="M7 0 L12 1 L9 5 Z" fill="#3e6494"/><path d="M1 14 Q5 10.5 9 14 Q5 17.5 1 14 Z" fill="#3e6494"/><path d="M11 14 Q15 10.5 19 14 Q15 17.5 11 14 Z" fill="#aaa"/><path d="M12 11 L19 18" stroke="#3e6494" stroke-width="1"/></svg><svg class="ic" style="left:953px;top:51px;width:20px;height:16px" viewBox="0 0 20 16"><rect x="0.75" y="0.75" width="18.5" height="14.5" fill="#fff" stroke="#3e6494" stroke-width="1.5"/><rect x="0.75" y="0.75" width="18.5" height="2.5" fill="#8a9bb2"/><path d="M3.5 9.5 Q10 4 16.5 9.5 Q10 15 3.5 9.5 Z" fill="#3e6494"/><circle cx="10" cy="9.5" r="1.6" fill="#9fb7d8"/></svg><svg class="ic" style="left:981px;top:57px;width:9px;height:5px" viewBox="0 0 9 5"><path d="M0 0 H9 L4.5 5 Z" fill="#1f1f1f"/></svg><div class="a" style="left:1004px;top:50px;width:1px;height:20px;background:#d4d4d4"></div><svg class="ic" style="left:1012px;top:49px;width:22px;height:21.5px" viewBox="0 0 22 21.5"><rect x="0.75" y="0.75" width="20.5" height="20.0" rx="3" fill="url(#bg1)" stroke="#4f6fa3" stroke-width="1.5"/><path d="M3 11 L12 3 V18 Z" fill="#4a80c0"/><path d="M12 3 L20 1 M12 18 L20 20" stroke="#6f8fb8" stroke-width="0.7"/><path d="M13 7 Q17 11 13 15" fill="none" stroke="#6f8fb8" stroke-width="0.7"/></svg><svg class="ic" style="left:1042px;top:51px;width:19px;height:16px" viewBox="0 0 19 16"><path d="M0.5 3.5 L4 0.5 H18.5 V12.5 L15 15.5 H0.5 Z" fill="#dde9f6" stroke="#7aa0d0" stroke-width="0.9"/><path d="M0.5 3.5 H15 V15.5 M15 3.5 L18.5 0.5" fill="none" stroke="#7aa0d0" stroke-width="0.9"/></svg><svg class="ic" style="left:1069px;top:51px;width:19px;height:17px" viewBox="0 0 19 17"><path d="M0.5 3.5 L4 0.5 H18.5 V13 L15 16.5 H0.5 Z M0.5 3.5 H15 V16.5 M15 3.5 L18.5 0.5" fill="none" stroke="#7aa0d0" stroke-width="0.9"/></svg><svg class="ic" style="left:1096px;top:49px;width:22px;height:21.5px" viewBox="0 0 22 21.5"><rect x="0.75" y="0.75" width="20.5" height="20.0" rx="3" fill="url(#bg1)" stroke="#4f6fa3" stroke-width="1.5"/><rect x="3.5" y="3.5" width="15" height="14" fill="#e8f0f8" stroke="#555" stroke-width="1"/><path d="M11 15 V6 M11 15 L6 12 M11 15 L16 12" stroke="#4a80c0" stroke-width="0.9"/><path d="M11 15 L6 12" stroke="#4caf50" stroke-width="0.9"/><path d="M11 15 L16 12" stroke="#e0316a" stroke-width="0.9"/></svg><svg class="ic" style="left:1124px;top:49px;width:22px;height:21.5px" viewBox="0 0 22 21.5"><rect x="0.75" y="0.75" width="20.5" height="20.0" rx="3" fill="url(#bg1)" stroke="#4f6fa3" stroke-width="1.5"/><rect x="3.5" y="3.5" width="15" height="14" fill="#cfe2f5" stroke="#555" stroke-width="1"/><path d="M6 6 H16 V15 H6 Z M9.3 6 V15 M12.6 6 V15 M6 9 H16 M6 12 H16" fill="none" stroke="#4a80c0" stroke-width="0.9"/></svg><svg class="ic" style="left:1152px;top:49px;width:22px;height:21.5px" viewBox="0 0 22 21.5"><rect x="0.75" y="0.75" width="20.5" height="20.0" rx="3" fill="url(#bg1)" stroke="#4f6fa3" stroke-width="1.5"/><path d="M11 3 L19 17.5 H3 Z" fill="#bcd4ec" stroke="#4a80c0" stroke-width="1"/><path d="M7 10 H15 M5 14 H17 M11 3 L7 17.5 M11 3 L15 17.5" stroke="#8fb0d6" stroke-width="0.6"/></svg><div class="a" style="left:1182px;top:50px;width:1px;height:20px;background:#d4d4d4"></div><svg class="ic" style="left:1193px;top:51px;width:16px;height:17px" viewBox="0 0 16 17"><path d="M0.5 4 L4 1 H15.5 V11 L12 14 H0.5 Z" fill="#d8dadd" stroke="#888" stroke-width="0.8"/><rect x="4.5" y="4" width="9" height="9" fill="#9fbfe5"/><circle cx="12" cy="13" r="3.2" fill="#fff" stroke="#e8643a" stroke-width="1.3"/><path d="M9.8 15.2 L14.2 10.8" stroke="#e8643a" stroke-width="1.3"/></svg><svg class="ic" style="left:1222px;top:51px;width:14px;height:16px" viewBox="0 0 14 16"><path d="M7 0.5 Q14 1 13.5 8 Q13 15.5 6 15.5 Q0.5 15 0.5 11 Q1 8 3 6.5 Q1 3 4 1.5 Z" fill="#dcdcdc" stroke="#888" stroke-width="0.9"/><circle cx="9.5" cy="4" r="1.6" fill="#29a8e0"/><circle cx="10.5" cy="8" r="1.6" fill="#2d7fd0"/><circle cx="8" cy="11" r="1.6" fill="#f5a623"/><circle cx="4.5" cy="12.5" r="1.5" fill="#e83e8c"/><circle cx="6" cy="4.5" r="1.6" fill="#fff"/></svg><svg class="ic" style="left:1246px;top:57px;width:9px;height:5px" viewBox="0 0 9 5"><path d="M0 0 H9 L4.5 5 Z" fill="#1f1f1f"/></svg><div class="a" style="left:1270px;top:50px;width:1px;height:20px;background:#d4d4d4"></div><svg class="ic" style="left:1280px;top:50px;width:18px;height:18px" viewBox="0 0 18 18"><circle cx="9" cy="9" r="8.5" fill="#4a80c0"/><path d="M9 5 L12.5 7 V11 L9 13 L5.5 11 V7 Z" fill="#f9fafe"/><path d="M9 5 L15 1.5 M12.5 7 L17.5 11 M12.5 11 L11 17.5 M9 13 L3 16.5 M5.5 11 L0.5 7 M5.5 7 L7 0.5" stroke="#f9fafe" stroke-width="1.2"/></svg><svg class="ic" style="left:1307px;top:57px;width:9px;height:5px" viewBox="0 0 9 5"><path d="M0 0 H9 L4.5 5 Z" fill="#1f1f1f"/></svg><svg class="ic" style="left:1331px;top:53px;width:16px;height:12px" viewBox="0 0 16 12"><path d="M0 2.5 H4 L5.5 0 H10.5 L12 2.5 H16 V12 H0 Z" fill="#4a80c0"/><circle cx="8" cy="7" r="3.3" fill="none" stroke="#fff" stroke-width="1.2"/></svg><svg class="ic" style="left:1359px;top:51px;width:16px;height:17px" viewBox="0 0 16 17"><rect x="3" y="0.5" width="10" height="5" fill="#fff" stroke="#4a80c0" stroke-width="1"/><rect x="0" y="5" width="16" height="8" rx="1" fill="#4a80c0"/><rect x="3" y="11" width="10" height="5.5" fill="#fff" stroke="#4a80c0" stroke-width="1"/><rect x="12" y="7" width="1.2" height="1.2" fill="#fff"/><rect x="12" y="9" width="1.2" height="1.2" fill="#fff"/></svg><svg class="ic" style="left:1507.5px;top:3px;width:10.5px;height:5px" viewBox="0 0 10.5 5"><path d="M0 0 H10.5 L5.25 5 Z" fill="#d2d8e0"/></svg><svg class="ic" style="left:1525.5px;top:0px;width:9px;height:13px" viewBox="0 0 9 13"><rect x="1.5" y="0" width="6" height="8.5" fill="#d2d8e0"/><rect x="1.5" y="0" width="6" height="1" fill="#e4e8ee"/><rect x="0" y="8" width="9" height="1.2" fill="#d2d8e0"/><rect x="3.5" y="9" width="2" height="4" fill="#e4e8ee"/></svg><svg class="ic" style="left:1507px;top:82px;width:26px;height:25px" viewBox="0 0 26 25"><path d="M2 5 L20 1 L25 20 L5 24 Z" fill="#e9ecef" opacity="0.9"/><rect x="4.5" y="6" width="17" height="12" rx="3.5" fill="#1a3d9e"/><path d="M7 8 L15 12 L7 16 Z" fill="#e8e02a"/><rect x="15" y="8" width="5" height="8" rx="1.5" fill="#3aa0e8"/></svg>
<div class="a" style="left:1547px;top:0;width:14px;height:630px;border-left:1px solid #d2d2d2;border-bottom:1px solid #d2d2d2;background:#f9fafe"></div>
<div class="a" style="left:1553px;top:0;width:8px;height:23px;background:#e6e6e6"></div>
<div class="a" style="left:1548px;top:22px;width:13px;height:1px;background:#d0d0d0"></div>
<div class="t" style="left:1557px;top:2px;font-size:15px;font-weight:bold">A</div>
<svg class="ic" style="left:1553px;top:36px;width:12px;height:13px" viewBox="0 0 12 13"><circle cx="7" cy="6.5" r="6" fill="none" stroke="#b5b5b5" stroke-width="1"/><path d="M3 6.5 H11" stroke="#b5b5b5"/></svg>
<div class="a" style="left:1559px;top:66px;width:2px;height:1px;background:#999"></div>
<div class="a" style="left:1554px;top:83px;width:8px;height:24px;background:#fff;border:2px solid #d4d4d4;border-right:none"></div>
<div class="a" style="left:1554px;top:113px;width:8px;height:507px;background:#fff;border:2px solid #d4d4d4;border-right:none"></div>
<div class="a" style="left:888px;top:636px;width:680px;height:120px;border-top:1px solid #d4d4d4;border-left:1px solid #d4d4d4;background:#f9fafe"></div>
<div class="a" style="left:894px;top:674px;width:680px;height:1px;background:#d0d0d0"></div>
<div class="a" style="left:894px;top:643px;width:110px;height:32px;border:1px solid #d0d0d0;border-bottom:none;background:#f9fafe"></div>
<div class="t" style="left:900.8px;top:651px;color:#2f5b9e;font-size:16.5px;line-height:20px">Messages</div>
<svg class="ic" style="left:984px;top:653px;width:11px;height:11px" viewBox="0 0 11 11"><path d="M1 1 L10 10 M10 1 L1 10" stroke="#c5c5c5" stroke-width="1.5"/></svg>
<div class="a" style="left:1014px;top:644px;width:75px;height:30px;background:#e6e6e6"></div>
<div class="t" style="left:1019px;top:651px;font-size:16.5px;line-height:20px">Progress</div>
<div class="a" style="left:1099px;top:644px;width:38px;height:30px;background:#e6e6e6"></div>
<div class="t" style="left:1104px;top:651px;font-size:16.5px;line-height:20px">Log</div>
<div class="a" style="left:1147px;top:644px;width:73px;height:30px;background:#e6e6e6"></div>
<div class="t" style="left:1152px;top:651px;font-size:16.5px;line-height:20px">Table</div>
<svg class="ic" style="left:1201px;top:653px;width:11px;height:11px" viewBox="0 0 11 11"><path d="M1 1 L10 10 M10 1 L1 10" stroke="#c5c5c5" stroke-width="1.5"/></svg>
<svg class="ic" style="left:901px;top:685px;width:14px;height:19px" viewBox="0 0 14 19"><path d="M1 0 L7 12" stroke="#707070" stroke-width="1.4"/><path d="M5 11 Q9 12 13 18 Q8 19 4 18 Q5 14 5 11 Z" fill="#e0b070" stroke="#c09050" stroke-width="0.6"/></svg>
<div class="a" style="left:894px;top:710px;width:680px;height:40px;background:#fbfcfe;border-top:1px solid #d0d0d0;border-left:1px solid #d0d0d0"></div>
<div class="t" style="left:897px;top:711px;font-size:14.8px">[Aug 20, 2021 10:05 PM] Mesh warning (ftet1): Generated some elements of low quality (0).</div>
<div class="t" style="left:897px;top:729px;font-size:14.8px">[Aug 20, 2021 10:05 PM] Mesh warning (ftet1): Number of low quality elements: 4</div></body></html>
